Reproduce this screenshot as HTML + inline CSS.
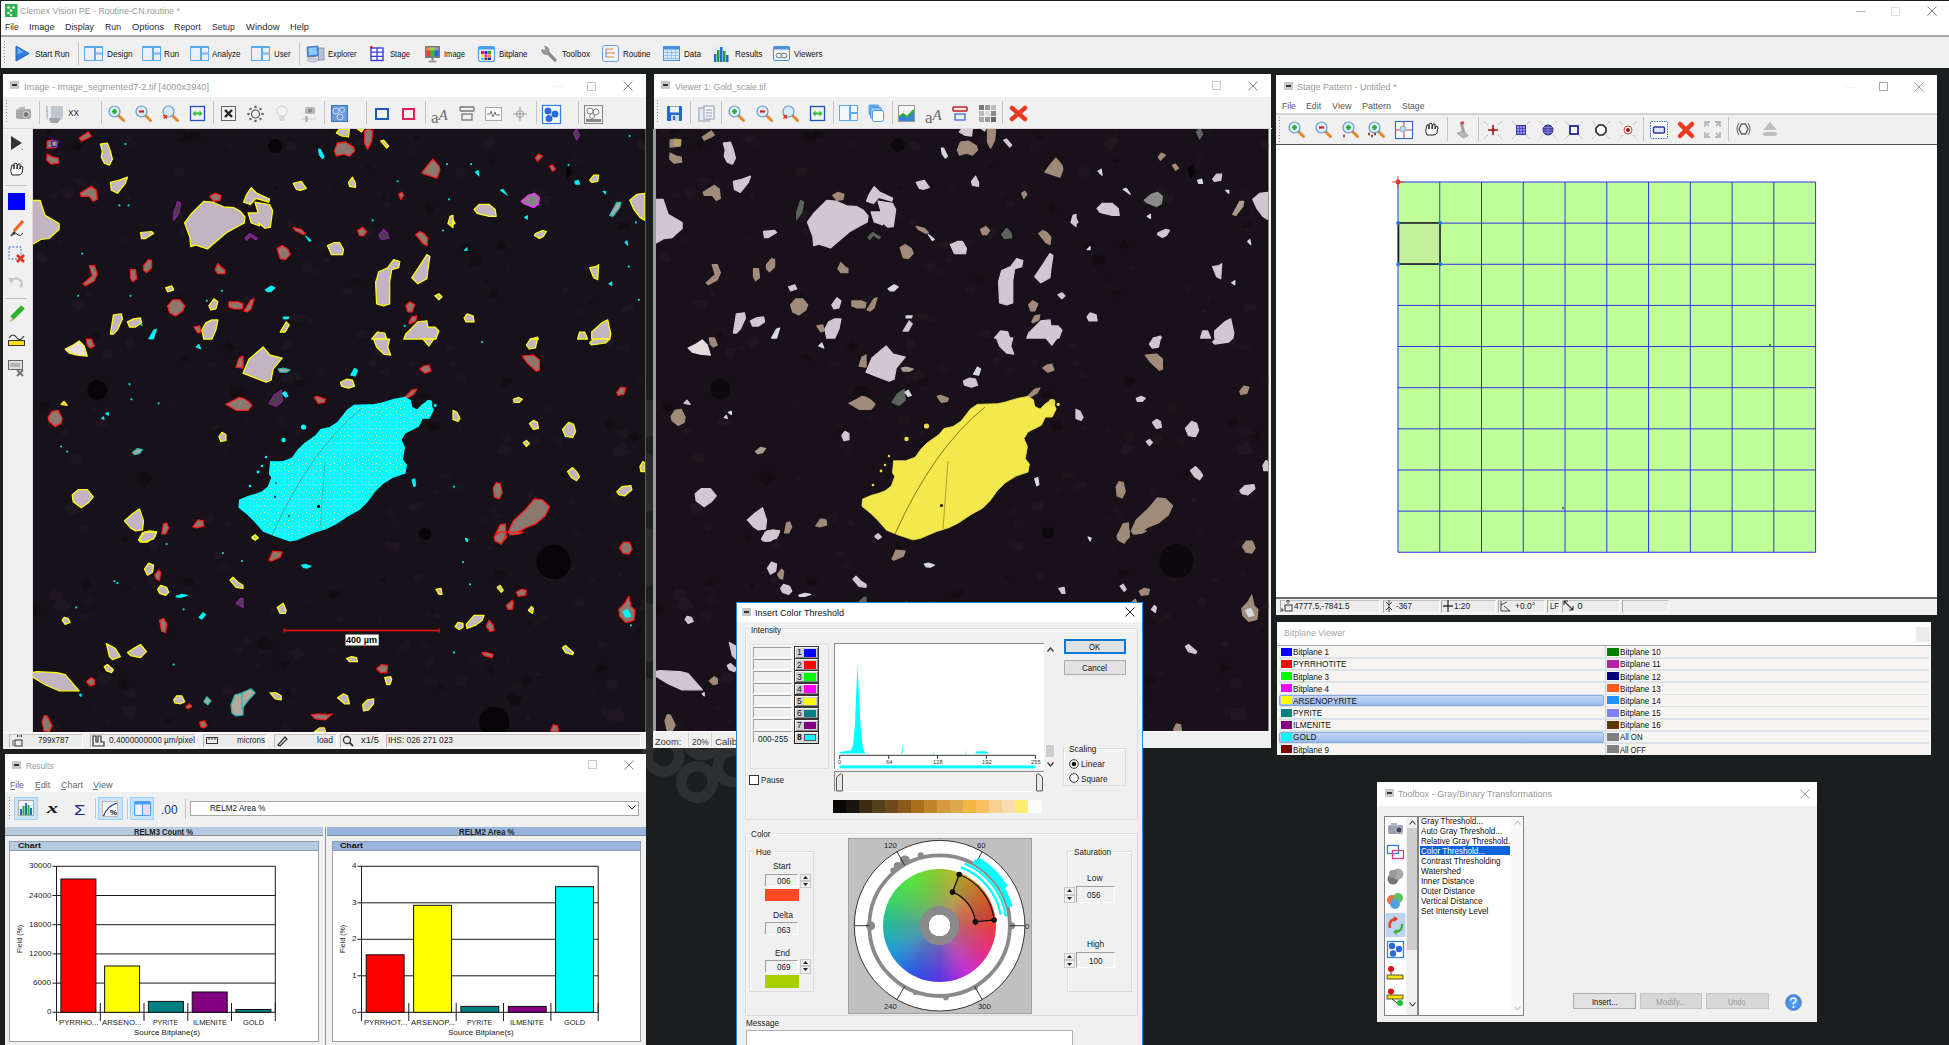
<!DOCTYPE html>
<html><head><meta charset="utf-8">
<style>
*{box-sizing:border-box}
body{margin:0;width:1949px;height:1045px;background:#1a1e1f;position:relative;overflow:hidden;font-family:"Liberation Sans",sans-serif;font-size:11px;color:#000}
.a{position:absolute}
.t{white-space:pre}
svg{overflow:visible}
</style></head><body>
<svg class="a" style="left:0;top:0" width="1949" height="1045"><rect x="646" y="400" width="7.5" height="350" fill="#2b2c2d"/><circle cx="651" cy="445" r="9" fill="#1c1f20"/><circle cx="651" cy="520" r="9" fill="#1c1f20"/><circle cx="651" cy="595" r="9" fill="#1c1f20"/><circle cx="651" cy="670" r="9" fill="#1c1f20"/><circle cx="663.4" cy="755.8" r="15.75" fill="none" stroke="#2e2f30" stroke-width="10.5"/><circle cx="697" cy="782" r="15.75" fill="none" stroke="#2e2f30" stroke-width="10.5"/><circle cx="703" cy="739.6" r="15.75" fill="none" stroke="#2e2f30" stroke-width="10.5"/><circle cx="733.3" cy="766.4" r="15.75" fill="none" stroke="#2e2f30" stroke-width="10.5"/></svg><div class="a" style="left:1px;top:1px;width:1948px;height:34.5px;background:#fff"></div><div class="a" style="left:1px;top:35px;width:1948px;height:1.5px;background:#a8a8a8"></div><div class="a" style="left:1px;top:36.5px;width:1948px;height:31.5px;background:#f0f0f0"></div><svg class="a" style="left:5px;top:4px;" width="12.5" height="13" viewBox="0 0 12.5 13"><rect width="12.5" height="13" fill="#2bb24c"/><g fill="#fff"><circle cx="3.5" cy="3.5" r="1.3"/><circle cx="8.5" cy="3.5" r="1.3"/><circle cx="6" cy="6.5" r="1.3"/><circle cx="3.5" cy="9" r="1.3"/><circle cx="6" cy="11" r="1.1"/></g></svg><div class="a t" style="left:20.00px;top:6.12px;font-size:9.5px;line-height:9.5px;color:#9a9a9a;transform:scaleX(0.930);transform-origin:0 0">Clemex Vision PE - Routine-CN.routine *</div><div class="a" style="left:1855.5px;top:11px;width:10px;height:1px;background:#b4b4b4"></div><div class="a" style="left:1890.5px;top:6.5px;width:9px;height:9px;border:1px solid #ddd"></div><svg class="a" style="left:1926.5px;top:6px;" width="10" height="10" viewBox="0 0 10 10"><path d="M0.5 0.5L9.5 9.5M9.5 0.5L0.5 9.5" stroke="#777" stroke-width="1"/></svg><div class="a t" style="left:5.00px;top:22.42px;font-size:9.5px;line-height:9.5px;color:#2a2a2a;transform:scaleX(0.895);transform-origin:0 0">File</div><div class="a t" style="left:29.00px;top:22.42px;font-size:9.5px;line-height:9.5px;color:#2a2a2a;transform:scaleX(0.969);transform-origin:0 0">Image</div><div class="a t" style="left:65.40px;top:22.42px;font-size:9.5px;line-height:9.5px;color:#2a2a2a;transform:scaleX(0.931);transform-origin:0 0">Display</div><div class="a t" style="left:105.00px;top:22.42px;font-size:9.5px;line-height:9.5px;color:#2a2a2a;transform:scaleX(0.918);transform-origin:0 0">Run</div><div class="a t" style="left:131.60px;top:22.42px;font-size:9.5px;line-height:9.5px;color:#2a2a2a;transform:scaleX(0.980);transform-origin:0 0">Options</div><div class="a t" style="left:174.40px;top:22.42px;font-size:9.5px;line-height:9.5px;color:#2a2a2a;transform:scaleX(0.933);transform-origin:0 0">Report</div><div class="a t" style="left:211.80px;top:22.42px;font-size:9.5px;line-height:9.5px;color:#2a2a2a;transform:scaleX(0.918);transform-origin:0 0">Setup</div><div class="a t" style="left:245.50px;top:22.42px;font-size:9.5px;line-height:9.5px;color:#2a2a2a;transform:scaleX(0.991);transform-origin:0 0">Window</div><div class="a t" style="left:290.00px;top:22.42px;font-size:9.5px;line-height:9.5px;color:#2a2a2a;transform:scaleX(0.972);transform-origin:0 0">Help</div><div class="a" style="left:4px;top:41px;width:1px;height:1px;background:#a09090"></div><div class="a" style="left:4px;top:44px;width:1px;height:1px;background:#a09090"></div><div class="a" style="left:4px;top:47px;width:1px;height:1px;background:#a09090"></div><div class="a" style="left:4px;top:50px;width:1px;height:1px;background:#a09090"></div><div class="a" style="left:4px;top:53px;width:1px;height:1px;background:#a09090"></div><div class="a" style="left:4px;top:56px;width:1px;height:1px;background:#a09090"></div><div class="a" style="left:4px;top:59px;width:1px;height:1px;background:#a09090"></div><div class="a" style="left:4px;top:62px;width:1px;height:1px;background:#a09090"></div><svg class="a" style="left:14.5px;top:45px;" width="15" height="17" viewBox="0 0 15 17"><path d="M1 1L14 8.5L1 16Z" fill="#2f7fe0" stroke="#1d5fbf" stroke-width="1"/><path d="M2.5 3L9 7L2.5 9Z" fill="#8fc0ff" opacity="0.7"/></svg><div class="a t" style="left:34.50px;top:49.22px;font-size:9.5px;line-height:9.5px;color:#111;transform:scaleX(0.859);transform-origin:0 0">Start Run</div><div class="a" style="left:78px;top:42px;width:1px;height:23px;background:#c4c4c4"></div><svg class="a" style="left:84px;top:46px;" width="19" height="15" viewBox="0 0 19 15"><rect x="0.5" y="0.5" width="10" height="14" fill="#eef" stroke="#5aaaf0"/><rect x="11.5" y="0.5" width="7" height="6.5" fill="#eef" stroke="#5aaaf0"/><rect x="11.5" y="8" width="7" height="6.5" fill="#eef" stroke="#5aaaf0"/><rect x="0.5" y="0.5" width="18" height="1.5" fill="#5aaaf0"/></svg><div class="a t" style="left:106.50px;top:49.22px;font-size:9.5px;line-height:9.5px;color:#111;transform:scaleX(0.862);transform-origin:0 0">Design</div><svg class="a" style="left:142px;top:46px;" width="19" height="15" viewBox="0 0 19 15"><rect x="0.5" y="0.5" width="10" height="14" fill="#eef" stroke="#5aaaf0"/><rect x="11.5" y="0.5" width="7" height="6.5" fill="#eef" stroke="#5aaaf0"/><rect x="11.5" y="8" width="7" height="6.5" fill="#eef" stroke="#5aaaf0"/><rect x="0.5" y="0.5" width="18" height="1.5" fill="#5aaaf0"/></svg><div class="a t" style="left:164.00px;top:49.22px;font-size:9.5px;line-height:9.5px;color:#111;transform:scaleX(0.860);transform-origin:0 0">Run</div><svg class="a" style="left:190px;top:46px;" width="19" height="15" viewBox="0 0 19 15"><rect x="0.5" y="0.5" width="10" height="14" fill="#eef" stroke="#5aaaf0"/><rect x="11.5" y="0.5" width="7" height="6.5" fill="#eef" stroke="#5aaaf0"/><rect x="11.5" y="8" width="7" height="6.5" fill="#eef" stroke="#5aaaf0"/><rect x="0.5" y="0.5" width="18" height="1.5" fill="#5aaaf0"/></svg><div class="a t" style="left:212.40px;top:49.22px;font-size:9.5px;line-height:9.5px;color:#111;transform:scaleX(0.843);transform-origin:0 0">Analyze</div><svg class="a" style="left:251px;top:46px;" width="19" height="15" viewBox="0 0 19 15"><rect x="0.5" y="0.5" width="10" height="14" fill="#eef" stroke="#5aaaf0"/><rect x="11.5" y="0.5" width="7" height="6.5" fill="#eef" stroke="#5aaaf0"/><rect x="11.5" y="8" width="7" height="6.5" fill="#eef" stroke="#5aaaf0"/><rect x="0.5" y="0.5" width="18" height="1.5" fill="#5aaaf0"/></svg><div class="a t" style="left:273.70px;top:49.22px;font-size:9.5px;line-height:9.5px;color:#111;transform:scaleX(0.822);transform-origin:0 0">User</div><div class="a" style="left:299px;top:42px;width:1px;height:23px;background:#c4c4c4"></div><svg class="a" style="left:305.5px;top:45px;" width="19" height="18" viewBox="0 0 19 18"><path d="M1 2L12 1L12.5 11L1.5 12Z" fill="#3a8ae8" stroke="#5a6a8a" stroke-width="0.8"/><path d="M2.5 3L10.5 2.3L11 9.5L3 10.3Z" fill="#8ccaff"/><rect x="12.5" y="3" width="5.5" height="12" fill="#b8c0d8" stroke="#7a8aa8" stroke-width="0.8"/><ellipse cx="6.5" cy="15" rx="5.5" ry="2" fill="#d0d4e0" stroke="#8a90a0" stroke-width="0.6"/></svg><div class="a t" style="left:328.00px;top:49.22px;font-size:9.5px;line-height:9.5px;color:#111;transform:scaleX(0.806);transform-origin:0 0">Explorer</div><svg class="a" style="left:369.5px;top:46px;" width="14" height="15" viewBox="0 0 14 15"><rect x="1" y="2" width="12" height="12.5" fill="#fff" stroke="#3a3ae0" stroke-width="1.4"/><path d="M1 6.2H13M1 10.3H13M7 2V14.5" stroke="#3a3ae0" stroke-width="1.3"/><circle cx="1.3" cy="1.3" r="1.3" fill="#d00"/></svg><div class="a t" style="left:390.00px;top:49.22px;font-size:9.5px;line-height:9.5px;color:#111;transform:scaleX(0.806);transform-origin:0 0">Stage</div><svg class="a" style="left:424.5px;top:45.5px;" width="15" height="17" viewBox="0 0 15 17"><rect x="0.5" y="0.5" width="14" height="11" fill="#888" stroke="#777"/><rect x="1.5" y="1.5" width="4" height="9" fill="#e84030"/><rect x="5.5" y="1.5" width="4" height="9" fill="#30c030"/><rect x="9.5" y="1.5" width="4" height="9" fill="#3060e0"/><rect x="1.5" y="1.5" width="12" height="3" fill="#ffe060" opacity="0.5"/><rect x="6.5" y="11.5" width="2" height="3" fill="#888"/><rect x="3.5" y="14.5" width="8" height="2" rx="1" fill="#999"/></svg><div class="a t" style="left:444.00px;top:49.22px;font-size:9.5px;line-height:9.5px;color:#111;transform:scaleX(0.795);transform-origin:0 0">Image</div><svg class="a" style="left:477.5px;top:45.5px;" width="17" height="16" viewBox="0 0 17 16"><rect x="0.5" y="0.5" width="16" height="15" rx="2" fill="#f4f8ff" stroke="#4aa0f0" stroke-width="1.2"/><rect x="0.5" y="0.5" width="16" height="3" fill="#4aa0f0"/><rect x="3" y="5" width="3" height="3" fill="#e22"/><rect x="6.5" y="5" width="3" height="3" fill="#22e"/><rect x="10" y="5" width="3" height="3" fill="#2a2"/><rect x="3" y="8.3" width="3" height="3" fill="#ee2"/><rect x="6.5" y="8.3" width="3" height="3" fill="#e2e"/><rect x="10" y="8.3" width="3" height="3" fill="#e82"/><rect x="3" y="11.6" width="3" height="2.5" fill="#2ee"/><rect x="6.5" y="11.6" width="3" height="2.5" fill="#822"/><rect x="10" y="11.6" width="3" height="2.5" fill="#22a"/></svg><div class="a t" style="left:499.20px;top:49.22px;font-size:9.5px;line-height:9.5px;color:#111;transform:scaleX(0.830);transform-origin:0 0">Bitplane</div><svg class="a" style="left:539.5px;top:45px;" width="18" height="18" viewBox="0 0 18 18"><path d="M6.5 6.5L15 15" stroke="#8a8a8a" stroke-width="3.2" stroke-linecap="round"/><path d="M2 4.5A4 4 0 0 0 8.5 8.5L9 5A4 4 0 0 0 4.5 1.5L6 4L4 5.5Z" fill="#9a9a9a" stroke="#777" stroke-width="0.7"/></svg><div class="a t" style="left:561.60px;top:49.22px;font-size:9.5px;line-height:9.5px;color:#111;transform:scaleX(0.855);transform-origin:0 0">Toolbox</div><svg class="a" style="left:601.5px;top:45px;" width="17" height="17" viewBox="0 0 17 17"><rect x="0.5" y="0.5" width="16" height="16" rx="2" fill="#eef4ff" stroke="#6aa0e0"/><path d="M4 4H11M6 8H13M6 12H12" stroke="#e08a20" stroke-width="1.2"/><path d="M4 4V12H6M4 8H6" stroke="#3a80d0" stroke-width="0.8" fill="none"/></svg><div class="a t" style="left:623.00px;top:49.22px;font-size:9.5px;line-height:9.5px;color:#111;transform:scaleX(0.840);transform-origin:0 0">Routine</div><svg class="a" style="left:662.5px;top:46px;" width="17" height="15" viewBox="0 0 17 15"><rect x="0.5" y="0.5" width="16" height="14" fill="#dbeaff" stroke="#4a90e0"/><rect x="0.5" y="0.5" width="16" height="3" fill="#4a90e0"/><path d="M0.5 6.5H16.5M0.5 9.5H16.5M0.5 12.5H16.5M4.5 3V15M8.5 3V15M12.5 3V15" stroke="#8ab8f0" stroke-width="0.8"/></svg><div class="a t" style="left:684.00px;top:49.22px;font-size:9.5px;line-height:9.5px;color:#111;transform:scaleX(0.847);transform-origin:0 0">Data</div><svg class="a" style="left:713px;top:45px;" width="16" height="17" viewBox="0 0 16 17"><rect x="0" y="0" width="16" height="17" fill="#e8eef8"/><rect x="1" y="9" width="2.5" height="8" fill="#2a6ad0"/><rect x="4" y="5" width="2.5" height="12" fill="#28a030"/><rect x="7" y="2" width="2.5" height="15" fill="#2a6ad0"/><rect x="10" y="6" width="2.5" height="11" fill="#28a030"/><rect x="13" y="10" width="2.5" height="7" fill="#2a6ad0"/></svg><div class="a t" style="left:734.50px;top:49.22px;font-size:9.5px;line-height:9.5px;color:#111;transform:scaleX(0.868);transform-origin:0 0">Results</div><svg class="a" style="left:773px;top:46px;" width="17" height="15" viewBox="0 0 17 15"><rect x="0.5" y="0.5" width="16" height="14" rx="1.5" fill="#eef4ff" stroke="#4a90e0"/><rect x="0.5" y="0.5" width="16" height="3" fill="#4a90e0"/><ellipse cx="6" cy="9.5" rx="3" ry="2.3" fill="none" stroke="#777"/><ellipse cx="11" cy="9.5" rx="3" ry="2.3" fill="none" stroke="#777"/></svg><div class="a t" style="left:794.30px;top:49.22px;font-size:9.5px;line-height:9.5px;color:#111;transform:scaleX(0.848);transform-origin:0 0">Viewers</div><div class="a" style="left:3px;top:74px;width:643px;height:675px;background:#f0f0f0"></div><div class="a" style="left:3px;top:74px;width:643px;height:23px;background:#fff"></div><div class="a" style="left:10px;top:81px;width:9px;height:8px;background:#c8c8c8"></div><div class="a" style="left:12px;top:84px;width:5px;height:2px;background:#333"></div><div class="a t" style="left:23.70px;top:81.72px;font-size:9.5px;line-height:9.5px;color:#9a9a9a;transform:scaleX(0.962);transform-origin:0 0">Image - Image_segmented7-2.tif [4000x3940]</div><div class="a" style="left:587px;top:81.5px;width:9px;height:9px;border:1px solid #c8c8c8"></div><svg class="a" style="left:623px;top:81px;" width="10" height="10" viewBox="0 0 10 10"><path d="M0.5 0.5L9.5 9.5M9.5 0.5L0.5 9.5" stroke="#8a8a8a" stroke-width="1"/></svg><div class="a" style="left:553px;top:86px;width:9px;height:1px;background:#eee"></div><div class="a" style="left:3px;top:97px;width:643px;height:31px;background:#f0f0f0"></div><div class="a" style="left:3px;top:127.5px;width:643px;height:1.5px;background:#d8d8d8"></div><div class="a" style="left:5.5px;top:100px;width:1px;height:1px;background:#a09090"></div><div class="a" style="left:5.5px;top:103px;width:1px;height:1px;background:#a09090"></div><div class="a" style="left:5.5px;top:106px;width:1px;height:1px;background:#a09090"></div><div class="a" style="left:5.5px;top:109px;width:1px;height:1px;background:#a09090"></div><div class="a" style="left:5.5px;top:112px;width:1px;height:1px;background:#a09090"></div><div class="a" style="left:5.5px;top:115px;width:1px;height:1px;background:#a09090"></div><div class="a" style="left:5.5px;top:118px;width:1px;height:1px;background:#a09090"></div><div class="a" style="left:5.5px;top:121px;width:1px;height:1px;background:#a09090"></div><svg class="a" style="left:14.7px;top:106px;" width="17" height="14" viewBox="0 0 17 14"><rect x="1" y="3" width="15" height="10" rx="2" fill="#a8a8a8"/><rect x="4" y="1" width="6" height="3" fill="#b8b8b8"/><circle cx="11" cy="8.5" r="3" fill="#777" stroke="#ddd"/></svg><div class="a" style="left:39px;top:101px;width:1px;height:23px;background:#c4c4c4"></div><svg class="a" style="left:45px;top:104.5px;" width="19" height="19" viewBox="0 0 19 19"><path d="M1 1H18V10Q18 17 9.5 17Q1 17 1 10Z" fill="#c0c6d0"/><path d="M3 1H6V15H3Z" fill="#e8ecf2"/><path d="M4 13H15L13 18H6Z" fill="#9aa0a8"/></svg><div class="a t" style="left:67.50px;top:109.26px;font-size:9px;line-height:9px;color:#222;transform:scaleX(0.915);transform-origin:0 0">XX</div><div class="a" style="left:100.8px;top:101px;width:1px;height:23px;background:#c4c4c4"></div><svg class="a" style="left:108px;top:105px;" width="17" height="17" viewBox="0 0 17 17"><path d="M9.5 9.5L15.5 15.5" stroke="#e08a30" stroke-width="3" stroke-linecap="round"/><circle cx="6.5" cy="6.5" r="5.5" fill="#d6ecfa" stroke="#6a98c0" stroke-width="1.2"/><path d="M6.5 4V9M4 6.5H9" stroke="#22aa22" stroke-width="2.2"/></svg><svg class="a" style="left:135px;top:105px;" width="17" height="17" viewBox="0 0 17 17"><path d="M9.5 9.5L15.5 15.5" stroke="#e08a30" stroke-width="3" stroke-linecap="round"/><circle cx="6.5" cy="6.5" r="5.5" fill="#d6ecfa" stroke="#6a98c0" stroke-width="1.2"/><path d="M4 6.5H9" stroke="#d02020" stroke-width="2.2"/></svg><svg class="a" style="left:161.5px;top:105px;" width="17" height="17" viewBox="0 0 17 17"><path d="M9.5 9.5L15.5 15.5" stroke="#e08a30" stroke-width="3" stroke-linecap="round"/><circle cx="6.5" cy="6.5" r="5.5" fill="#d6ecfa" stroke="#6a98c0" stroke-width="1.2"/><path d="M1.5 10L5 13.5M5 10L1.5 13.5" stroke="#e03020" stroke-width="1.5"/></svg><svg class="a" style="left:188.6px;top:105px;" width="17" height="17" viewBox="0 0 17 17"><rect x="1.5" y="1.5" width="14" height="14" fill="none" stroke="#2050c0" stroke-width="1.3"/><path d="M3.5 8.5L6.5 5.5V11.5ZM13.5 8.5L10.5 5.5V11.5Z" fill="#30c030"/><path d="M6 8.5H11" stroke="#30c030" stroke-width="2"/></svg><div class="a" style="left:212.5px;top:101px;width:1px;height:23px;background:#c4c4c4"></div><svg class="a" style="left:220px;top:105px;" width="17" height="17" viewBox="0 0 17 17"><rect x="1.5" y="1.5" width="14" height="14" fill="none" stroke="#666" stroke-width="1"/><path d="M5 5L12 12M12 5L5 12" stroke="#222" stroke-width="2.4"/></svg><svg class="a" style="left:246.5px;top:105px;" width="17" height="17" viewBox="0 0 17 17"><circle cx="8.5" cy="9" r="4" fill="#eee" stroke="#555" stroke-width="1.2"/><g fill="#666"><circle cx="8.5" cy="2" r="1.3"/><circle cx="8.5" cy="16" r="1.3"/><circle cx="1.5" cy="9" r="1.3"/><circle cx="15.5" cy="9" r="1.3"/><circle cx="3.5" cy="4" r="1.2"/><circle cx="13.5" cy="4" r="1.2"/><circle cx="3.5" cy="14" r="1.2"/><circle cx="13.5" cy="14" r="1.2"/></g></svg><svg class="a" style="left:275.6px;top:105px;" width="12" height="17" viewBox="0 0 12 17"><circle cx="6" cy="6" r="5" fill="#f4f4f4" stroke="#d0d0d0"/><rect x="3.5" y="11" width="5" height="5" fill="#d8d8d8"/></svg><svg class="a" style="left:300px;top:105px;" width="17" height="17" viewBox="0 0 17 17"><rect x="5" y="2" width="10" height="7" rx="1.5" fill="#b8b8b8"/><circle cx="10" cy="5.5" r="2" fill="#888"/><path d="M1 14H16" stroke="#ccc"/><rect x="5" y="11" width="3" height="6" fill="#bbb"/></svg><div class="a" style="left:324px;top:101px;width:1px;height:23px;background:#c4c4c4"></div><svg class="a" style="left:331px;top:105px;" width="17" height="17" viewBox="0 0 17 17"><rect x="0.5" y="0.5" width="16" height="16" fill="#6a98d8" stroke="#3a70c0"/><circle cx="5" cy="6" r="3" fill="none" stroke="#c8dcf8"/><circle cx="11" cy="5" r="2.5" fill="none" stroke="#c8dcf8"/><circle cx="9" cy="12" r="3" fill="none" stroke="#c8dcf8"/></svg><div class="a" style="left:366px;top:101px;width:1px;height:23px;background:#c4c4c4"></div><div class="a" style="left:375px;top:108px;width:13.7px;height:12px;border:2px solid #1e58b8"></div><div class="a" style="left:401.7px;top:108px;width:13.5px;height:12px;border:2px solid #e0205a"></div><div class="a" style="left:424.6px;top:101px;width:1px;height:23px;background:#c4c4c4"></div><svg class="a" style="left:430px;top:103px;" width="20" height="22" viewBox="0 0 20 22"><text x="1" y="20" font-family="Liberation Serif" font-size="17" fill="#6a6a6a">a</text><text x="8.5" y="17" font-family="Liberation Serif" font-style="italic" font-size="15" fill="#6a6a6a">A</text></svg><svg class="a" style="left:458.7px;top:106px;" width="16" height="15" viewBox="0 0 16 15"><path d="M1 1H15M1 5H15M1 1V5M15 1V5" stroke="#777" stroke-width="1.3" fill="none"/><rect x="3" y="8" width="10" height="6" fill="none" stroke="#777" stroke-width="1.3"/></svg><svg class="a" style="left:484.6px;top:107px;" width="17" height="14" viewBox="0 0 17 14"><rect x="0.5" y="0.5" width="16" height="13" fill="#fafafa" stroke="#aaa"/><path d="M2 7H5L6 4L8 10L10 5L11 8H15" stroke="#777" fill="none"/></svg><svg class="a" style="left:512px;top:106px;" width="16" height="16" viewBox="0 0 16 16"><circle cx="8" cy="8" r="3.5" fill="none" stroke="#999"/><path d="M8 1V15M1 8H15" stroke="#999"/></svg><div class="a" style="left:535.7px;top:101px;width:1px;height:23px;background:#c4c4c4"></div><svg class="a" style="left:542px;top:104.5px;" width="19" height="19" viewBox="0 0 19 19"><rect x="0.5" y="0.5" width="18" height="18" fill="#fff" stroke="#3a80e0" stroke-width="1.3"/><circle cx="6" cy="6" r="3.5" fill="#2a6ad8"/><circle cx="13" cy="9" r="3.5" fill="#2a6ad8"/><circle cx="7" cy="13.5" r="3.5" fill="#2a6ad8"/></svg><div class="a" style="left:578px;top:101px;width:1px;height:23px;background:#c4c4c4"></div><svg class="a" style="left:584px;top:104.5px;" width="19" height="19" viewBox="0 0 19 19"><rect x="0.5" y="0.5" width="18" height="18" fill="#f4f4f4" stroke="#888"/><circle cx="6" cy="6" r="3" fill="none" stroke="#888"/><circle cx="12" cy="7" r="3" fill="none" stroke="#888"/><circle cx="8" cy="11" r="2.5" fill="none" stroke="#888"/><rect x="2" y="14" width="15" height="3" fill="#888"/></svg><div class="a" style="left:3px;top:129px;width:30px;height:603px;background:#f0f0f0"></div><div class="a" style="left:31.5px;top:129px;width:1.5px;height:603px;background:#dcdcdc"></div><svg class="a" style="left:10px;top:135px;" width="13" height="16" viewBox="0 0 13 16"><path d="M1 1L12 8L1 15Z" fill="#333"/><path d="M12 14L13 15" stroke="#777"/></svg><svg class="a" style="left:9px;top:162px;" width="15" height="14" viewBox="0 0 15 14"><path d="M3 13Q1 9 2 7L3 3L5 3L5 7L5 2L7 1L8 2L8 7L9 2L11 2L11 7L12 4L14 5L13 11Q12 13 9 13Z" fill="#fff" stroke="#222" stroke-width="1"/></svg><div class="a" style="left:5px;top:185px;width:22px;height:1px;background:#c0c0c0"></div><div class="a" style="left:7.5px;top:192.5px;width:17.5px;height:17.5px;background:#0000ff"></div><svg class="a" style="left:8px;top:220px;" width="17" height="18" viewBox="0 0 17 18"><path d="M15 1L6 11" stroke="#f06020" stroke-width="3"/><path d="M6 11L2 16L8 13Z" fill="#333"/><path d="M3 16Q8 12 10 15Q12 17 15 13" stroke="#333" fill="none"/></svg><svg class="a" style="left:8px;top:246px;" width="17" height="17" viewBox="0 0 17 17"><rect x="1" y="1" width="12" height="12" fill="none" stroke="#3a6ad0" stroke-dasharray="2 1.5"/><path d="M9 9L16 16M16 9L9 16" stroke="#e83020" stroke-width="2.8"/></svg><svg class="a" style="left:8px;top:275px;" width="16" height="13" viewBox="0 0 16 13"><path d="M3 6Q8 1 13 6Q15 10 12 12" fill="none" stroke="#c8c8c8" stroke-width="2.5"/><path d="M0 3L6 3L3 9Z" fill="#c8c8c8"/></svg><div class="a" style="left:5px;top:297.5px;width:22px;height:1px;background:#c0c0c0"></div><svg class="a" style="left:8px;top:305px;" width="17" height="18" viewBox="0 0 17 18"><path d="M15 2L4 13" stroke="#30b030" stroke-width="5"/><path d="M4 13L1 17L6 15Z" fill="#e0a060"/></svg><svg class="a" style="left:8px;top:332px;" width="17" height="14" viewBox="0 0 17 14"><path d="M1 6Q5 0 9 6Q12 10 16 4" fill="none" stroke="#333" stroke-width="1.2"/><rect x="0.5" y="8.5" width="16" height="5" fill="#ffe000" stroke="#333"/></svg><svg class="a" style="left:8px;top:360px;" width="17" height="17" viewBox="0 0 17 17"><rect x="0.5" y="0.5" width="14" height="9" fill="#ddd" stroke="#666"/><path d="M2 4H12M2 6H12" stroke="#888"/><path d="M9 10L15 16M15 10L9 16" stroke="#777" stroke-width="2"/></svg><svg class="a" style="left:0;top:0" width="1949" height="1045"><defs><clipPath id="c1"><rect x="33" y="129" width="612" height="603"/></clipPath><clipPath id="c2"><rect x="656" y="129" width="612.5" height="602"/></clipPath><pattern id="spk" width="7" height="7" patternUnits="userSpaceOnUse"><rect width="7" height="7" fill="#00fcfc"/><rect x="1" y="2" width="1" height="1" fill="#d8e89a"/><rect x="4" y="5" width="1" height="1" fill="#c8d890"/><rect x="5" y="1" width="1" height="1" fill="#e0f0a0"/></pattern></defs><rect x="33" y="129" width="612" height="603" fill="#171119"/><g clip-path="url(#c1)"><path d="M232.0 214.4 L235.0 223.0 L230.5 225.0 L224.5 218.7Z" fill="#0c070b" opacity="0.40"/><path d="M384.9 699.0 L381.1 703.5 L376.5 704.3 L375.1 702.6 L372.4 697.0 L378.6 694.8Z" fill="#2a2029" opacity="0.29"/><path d="M365.1 166.9 L368.0 164.1 L370.4 166.6 L369.1 169.3Z" fill="#0c070b" opacity="0.40"/><path d="M214.8 429.8 L211.5 428.2 L213.9 424.7 L219.2 424.0 L220.2 430.2Z" fill="#2a2029" opacity="0.28"/><path d="M463.7 487.8 L457.3 490.8 L453.1 487.5 L455.5 482.4 L463.1 483.1Z" fill="#2a2029" opacity="0.29"/><path d="M612.7 345.5 L609.5 348.0 L604.1 343.2 L604.9 339.0 L615.1 340.0Z" fill="#2a2029" opacity="0.27"/><path d="M292.4 348.8 L281.7 350.2 L283.5 340.6 L291.2 340.0Z" fill="#2a2029" opacity="0.34"/><path d="M614.1 541.3 L621.3 541.0 L622.2 545.7 L619.6 548.7 L614.1 549.3 L609.1 547.3Z" fill="#2a2029" opacity="0.23"/><path d="M404.2 192.4 L398.0 195.5 L396.7 193.3 L395.8 188.6 L399.2 184.8 L406.6 190.7Z" fill="#2a2029" opacity="0.22"/><path d="M99.8 338.1 L94.0 337.8 L92.8 335.6 L92.8 331.9 L98.8 333.0 L99.1 335.0Z" fill="#0c070b" opacity="0.40"/><path d="M500.2 444.3 L509.5 446.6 L512.4 450.3 L504.5 454.9 L497.5 452.9Z" fill="#2a2029" opacity="0.40"/><path d="M313.6 245.7 L320.4 241.3 L324.0 241.9 L327.1 246.0 L321.4 252.2Z" fill="#2a2029" opacity="0.32"/><path d="M435.2 612.8 L432.7 614.0 L429.7 612.0 L429.3 610.0 L433.7 609.2 L434.7 611.0Z" fill="#0c070b" opacity="0.40"/><path d="M641.3 139.5 L647.1 147.9 L643.3 150.4 L638.1 148.2 L637.3 140.9Z" fill="#2a2029" opacity="0.43"/><path d="M306.3 654.3 L295.9 659.8 L289.1 653.1 L296.9 647.5Z" fill="#2a2029" opacity="0.37"/><path d="M538.6 443.9 L526.6 446.7 L522.6 441.6 L526.7 438.2 L534.0 436.3 L539.2 436.8Z" fill="#2a2029" opacity="0.32"/><path d="M507.2 663.5 L505.2 661.1 L509.4 659.8 L510.8 662.1Z" fill="#2a2029" opacity="0.37"/><path d="M309.7 444.9 L314.8 448.3 L309.6 455.9 L306.5 452.5Z" fill="#2a2029" opacity="0.22"/><path d="M184.9 168.1 L182.8 176.7 L171.9 175.5 L173.5 168.6Z" fill="#2a2029" opacity="0.32"/><path d="M641.9 630.7 L639.9 632.7 L636.7 632.6 L635.6 629.4 L639.4 628.3Z" fill="#0c070b" opacity="0.40"/><path d="M627.3 194.3 L626.2 203.9 L615.0 198.9 L618.4 188.7Z" fill="#2a2029" opacity="0.26"/><path d="M122.2 688.8 L117.0 685.0 L121.6 680.8 L125.2 679.2 L129.4 683.4 L127.5 685.9Z" fill="#0c070b" opacity="0.40"/><path d="M646.2 385.0 L641.7 386.1 L635.9 383.9 L635.7 377.3 L645.0 375.8 L648.0 379.7Z" fill="#2a2029" opacity="0.20"/><path d="M192.2 137.6 L191.4 143.1 L182.4 143.8 L177.3 139.0 L184.5 133.4 L187.2 133.6Z" fill="#0c070b" opacity="0.40"/><path d="M574.9 568.8 L574.0 571.5 L571.2 569.8 L570.4 567.1 L573.6 565.2Z" fill="#2a2029" opacity="0.37"/><path d="M58.4 244.6 L57.3 240.4 L62.2 238.2 L63.4 240.7Z" fill="#2a2029" opacity="0.32"/><path d="M343.6 252.7 L337.6 253.6 L335.1 248.2 L342.4 244.5Z" fill="#2a2029" opacity="0.24"/><path d="M578.4 597.6 L583.8 600.3 L583.2 606.7 L576.8 606.1 L573.4 600.3Z" fill="#2a2029" opacity="0.39"/><path d="M379.1 617.6 L381.2 617.7 L382.0 618.1 L382.5 619.7 L380.3 621.1 L378.6 620.0Z" fill="#2a2029" opacity="0.32"/><path d="M39.2 605.1 L41.0 613.2 L33.9 617.1 L29.4 615.2 L27.1 608.8 L33.7 602.9Z" fill="#0c070b" opacity="0.40"/><path d="M588.5 301.4 L590.7 299.9 L592.8 301.6 L591.8 303.0 L589.7 304.5 L587.3 302.3Z" fill="#0c070b" opacity="0.40"/><path d="M353.8 409.2 L351.1 413.1 L345.3 409.8 L348.8 403.5Z" fill="#2a2029" opacity="0.30"/><path d="M596.1 692.4 L592.1 692.3 L591.8 687.9 L595.9 689.2Z" fill="#2a2029" opacity="0.32"/><path d="M43.4 132.9 L44.7 129.4 L49.2 127.3 L53.4 130.8 L47.9 134.7Z" fill="#0c070b" opacity="0.40"/><path d="M488.3 281.8 L486.7 283.4 L484.8 283.0 L484.4 280.3 L487.2 280.3Z" fill="#0c070b" opacity="0.40"/><path d="M350.3 241.6 L349.7 247.2 L344.3 247.7 L340.8 245.4 L343.3 239.5Z" fill="#2a2029" opacity="0.27"/><path d="M61.0 689.2 L60.9 685.7 L63.8 685.9 L66.4 688.1 L64.7 690.2Z" fill="#0c070b" opacity="0.40"/><path d="M345.0 617.6 L343.8 619.9 L339.2 622.8 L334.6 619.7 L336.5 614.1Z" fill="#2a2029" opacity="0.39"/><path d="M283.8 383.0 L280.4 379.1 L283.6 374.1 L291.6 375.4 L292.9 379.2Z" fill="#2a2029" opacity="0.36"/><path d="M304.0 322.1 L288.5 321.2 L293.4 314.0 L306.3 313.8Z" fill="#2a2029" opacity="0.32"/><path d="M303.1 600.1 L309.0 598.1 L311.2 602.2 L307.3 603.3Z" fill="#2a2029" opacity="0.26"/><path d="M593.2 515.8 L598.6 516.9 L600.5 520.9 L594.1 520.7Z" fill="#2a2029" opacity="0.20"/><path d="M360.5 726.8 L363.2 727.3 L365.7 732.1 L362.5 732.0 L357.6 731.1Z" fill="#2a2029" opacity="0.26"/><path d="M440.8 684.2 L443.7 686.0 L443.7 690.1 L438.5 688.8Z" fill="#0c070b" opacity="0.40"/><path d="M501.0 240.4 L505.8 245.1 L505.3 248.8 L496.6 249.7 L496.7 245.6Z" fill="#0c070b" opacity="0.40"/><path d="M630.5 216.7 L627.5 215.4 L627.8 213.4 L631.4 213.2Z" fill="#2a2029" opacity="0.32"/><path d="M219.4 569.2 L217.5 563.2 L230.2 562.2 L230.3 569.1 L222.7 571.9Z" fill="#2a2029" opacity="0.22"/><path d="M468.0 252.4 L461.8 250.9 L459.9 242.9 L464.2 243.8 L471.6 244.7Z" fill="#0c070b" opacity="0.40"/><path d="M487.9 672.4 L485.7 669.2 L491.3 667.8 L495.0 669.9 L493.1 675.0Z" fill="#0c070b" opacity="0.40"/><path d="M544.0 191.9 L542.9 198.1 L533.8 196.1 L531.6 190.1 L540.8 187.2Z" fill="#2a2029" opacity="0.28"/><path d="M222.7 347.3 L228.6 340.6 L236.3 347.6 L230.0 352.8Z" fill="#0c070b" opacity="0.40"/><path d="M73.7 505.2 L75.4 503.3 L80.7 503.9 L80.3 508.3 L76.0 507.6Z" fill="#2a2029" opacity="0.27"/><path d="M375.1 356.7 L375.1 347.7 L384.1 351.5 L383.2 357.9Z" fill="#2a2029" opacity="0.36"/><path d="M91.5 408.5 L94.8 407.4 L96.3 408.3 L95.8 411.2Z" fill="#2a2029" opacity="0.43"/><path d="M261.8 648.6 L266.8 651.0 L262.9 653.7 L258.6 653.6 L258.4 649.0Z" fill="#2a2029" opacity="0.43"/><path d="M533.8 625.5 L527.1 624.7 L528.0 622.2 L532.3 618.7 L535.3 622.8Z" fill="#0c070b" opacity="0.40"/><path d="M455.5 379.1 L456.6 373.4 L458.8 372.2 L462.9 377.4 L459.7 379.1Z" fill="#2a2029" opacity="0.31"/><path d="M130.4 196.2 L131.8 197.3 L129.2 200.4 L127.3 199.6 L126.0 197.0 L127.6 195.7Z" fill="#2a2029" opacity="0.43"/><path d="M96.6 428.3 L94.2 421.5 L102.9 418.6 L108.4 424.7Z" fill="#2a2029" opacity="0.42"/><path d="M428.7 642.9 L430.8 644.8 L427.4 649.8 L423.3 649.6 L417.0 643.9 L420.0 641.8Z" fill="#2a2029" opacity="0.21"/><path d="M551.1 196.3 L551.2 199.7 L548.8 204.0 L543.1 203.2 L538.0 202.0 L543.3 195.6Z" fill="#2a2029" opacity="0.40"/><path d="M547.6 619.7 L541.5 620.6 L540.1 615.9 L547.6 613.7Z" fill="#2a2029" opacity="0.33"/><path d="M71.3 432.1 L65.1 435.6 L60.2 433.5 L66.2 428.2Z" fill="#2a2029" opacity="0.37"/><path d="M472.0 254.6 L481.8 257.6 L481.9 264.1 L472.0 267.1 L468.1 266.3 L469.3 260.6Z" fill="#0c070b" opacity="0.40"/><path d="M133.1 697.6 L126.5 697.9 L123.6 691.5 L132.8 688.0 L136.7 694.1Z" fill="#2a2029" opacity="0.36"/><path d="M269.9 608.6 L274.7 607.5 L277.1 610.1 L275.0 612.6 L270.1 612.6Z" fill="#2a2029" opacity="0.37"/><path d="M223.5 131.8 L222.6 129.9 L225.0 128.0 L226.1 129.9Z" fill="#2a2029" opacity="0.28"/><path d="M348.0 449.7 L354.0 448.1 L357.1 452.0 L355.4 453.4 L347.9 453.9Z" fill="#2a2029" opacity="0.30"/><path d="M200.4 132.8 L200.7 138.3 L195.5 140.0 L192.5 139.2 L189.5 136.0 L191.2 129.8Z" fill="#0c070b" opacity="0.40"/><path d="M408.8 527.9 L404.2 526.8 L405.0 524.2 L408.3 523.1 L412.0 526.1Z" fill="#2a2029" opacity="0.20"/><path d="M544.4 574.6 L551.3 573.8 L556.1 576.4 L551.6 583.8 L548.8 581.3 L543.8 578.2Z" fill="#2a2029" opacity="0.43"/><path d="M633.5 310.0 L619.9 312.7 L621.5 305.7 L633.0 303.8Z" fill="#2a2029" opacity="0.35"/><path d="M269.9 637.2 L270.9 643.0 L273.5 648.5 L261.5 650.7 L257.7 641.0 L261.7 636.2Z" fill="#0c070b" opacity="0.40"/><path d="M51.8 199.8 L46.1 195.2 L57.9 192.0 L56.4 199.1Z" fill="#2a2029" opacity="0.29"/><path d="M541.4 619.2 L538.5 626.8 L530.3 627.0 L529.3 615.4Z" fill="#2a2029" opacity="0.22"/><path d="M495.9 512.8 L490.5 514.0 L488.4 509.4 L495.5 505.7Z" fill="#2a2029" opacity="0.28"/><path d="M624.1 428.4 L628.0 430.4 L628.0 434.8 L622.8 440.1 L614.9 434.7 L615.7 430.8Z" fill="#2a2029" opacity="0.27"/><path d="M488.7 161.0 L492.1 158.2 L496.1 162.2 L491.2 164.5Z" fill="#0c070b" opacity="0.40"/><path d="M461.5 426.3 L463.1 428.8 L463.0 430.3 L459.5 432.2 L458.3 430.0 L459.1 428.0Z" fill="#2a2029" opacity="0.31"/><path d="M367.7 239.4 L357.0 235.6 L359.6 228.9 L364.9 226.9 L375.7 229.5 L372.2 235.4Z" fill="#2a2029" opacity="0.39"/><path d="M388.9 208.5 L381.5 207.2 L383.4 204.5 L386.1 201.4 L390.9 203.2 L391.5 206.0Z" fill="#2a2029" opacity="0.38"/><path d="M97.3 710.6 L94.2 711.1 L91.6 709.3 L94.7 706.4 L97.2 708.8Z" fill="#2a2029" opacity="0.31"/><path d="M171.4 723.1 L164.4 722.5 L166.1 717.8 L172.7 719.0Z" fill="#0c070b" opacity="0.40"/><path d="M469.4 658.3 L472.9 654.2 L481.4 655.2 L479.1 663.4 L475.7 666.5 L468.6 665.0Z" fill="#2a2029" opacity="0.20"/><path d="M561.6 438.9 L561.8 447.8 L555.3 445.2 L552.4 437.6Z" fill="#2a2029" opacity="0.25"/><path d="M245.0 635.3 L251.5 640.1 L248.0 645.2 L240.7 641.9Z" fill="#2a2029" opacity="0.39"/><path d="M108.2 725.3 L102.3 724.2 L108.5 718.5 L111.3 722.9Z" fill="#2a2029" opacity="0.30"/><path d="M606.5 719.3 L608.2 709.5 L620.9 707.8 L625.8 719.5 L618.7 722.6Z" fill="#2a2029" opacity="0.40"/><path d="M289.2 734.3 L282.7 733.9 L280.2 731.4 L281.6 726.6 L284.8 723.0 L291.5 727.6Z" fill="#2a2029" opacity="0.32"/><path d="M299.5 516.8 L293.1 518.6 L286.7 512.0 L295.5 508.5 L302.4 511.9Z" fill="#0c070b" opacity="0.40"/><path d="M82.9 309.5 L75.9 309.5 L69.6 304.6 L70.6 301.9 L80.4 300.3 L85.1 305.6Z" fill="#2a2029" opacity="0.41"/><path d="M156.6 544.1 L159.1 545.6 L155.1 551.2 L150.5 550.6 L147.6 544.9 L150.9 544.0Z" fill="#2a2029" opacity="0.38"/><path d="M129.5 317.5 L136.7 316.6 L138.7 322.8 L130.2 326.1 L123.4 323.2Z" fill="#2a2029" opacity="0.28"/><path d="M639.3 438.7 L633.2 442.4 L628.4 436.4 L635.3 431.8Z" fill="#0c070b" opacity="0.40"/><path d="M296.5 387.6 L294.3 383.9 L296.6 377.8 L305.4 380.7 L304.1 385.5Z" fill="#0c070b" opacity="0.40"/><path d="M386.0 515.0 L388.1 507.1 L395.0 508.4 L394.7 517.3Z" fill="#2a2029" opacity="0.22"/><path d="M336.6 453.5 L342.6 455.0 L342.3 459.8 L336.5 458.3Z" fill="#0c070b" opacity="0.40"/><path d="M61.6 598.0 L61.0 602.4 L50.4 599.4 L50.1 597.3 L52.3 589.5 L62.4 592.1Z" fill="#2a2029" opacity="0.41"/><path d="M501.7 386.3 L501.6 376.9 L512.3 379.9 L511.5 383.8 L506.0 387.4Z" fill="#0c070b" opacity="0.40"/><path d="M48.0 132.8 L45.1 136.9 L35.6 133.4 L41.5 125.5Z" fill="#2a2029" opacity="0.29"/><path d="M489.3 550.4 L486.6 546.7 L491.6 546.5 L492.6 547.8Z" fill="#2a2029" opacity="0.37"/><path d="M412.4 366.9 L410.7 366.7 L407.2 363.4 L410.1 361.1 L414.1 361.2 L416.1 364.0Z" fill="#2a2029" opacity="0.30"/><path d="M511.4 704.9 L505.2 697.9 L510.2 692.0 L517.5 695.7 L523.0 696.8 L518.5 705.9Z" fill="#0c070b" opacity="0.40"/><path d="M271.0 351.9 L277.0 356.8 L266.3 362.4 L266.0 353.3Z" fill="#2a2029" opacity="0.40"/><path d="M563.4 470.9 L565.0 470.6 L566.8 474.8 L564.8 478.0 L561.9 477.1 L559.9 473.1Z" fill="#0c070b" opacity="0.40"/><path d="M182.3 580.4 L186.1 576.7 L194.9 580.1 L191.6 586.8 L185.6 586.0Z" fill="#0c070b" opacity="0.40"/><path d="M85.4 613.8 L88.3 612.8 L93.2 614.2 L94.0 615.3 L89.1 617.5 L86.2 616.6Z" fill="#2a2029" opacity="0.21"/><path d="M43.7 723.6 L53.9 721.5 L62.1 725.3 L55.4 730.9 L47.0 728.7Z" fill="#2a2029" opacity="0.29"/><path d="M43.8 149.5 L45.3 148.3 L50.5 147.2 L53.8 150.3 L53.3 153.1 L46.8 153.4Z" fill="#2a2029" opacity="0.31"/><path d="M132.3 720.5 L124.6 716.9 L122.0 705.4 L137.7 706.8Z" fill="#2a2029" opacity="0.39"/><path d="M332.5 189.2 L330.4 193.9 L325.9 191.9 L327.1 187.7Z" fill="#2a2029" opacity="0.24"/><path d="M170.8 214.5 L175.1 209.4 L185.2 212.3 L181.3 221.4Z" fill="#2a2029" opacity="0.44"/><path d="M597.0 362.2 L598.9 359.2 L601.3 360.3 L601.3 362.9Z" fill="#2a2029" opacity="0.24"/><path d="M570.1 290.4 L564.2 292.7 L561.1 290.2 L566.4 286.6Z" fill="#2a2029" opacity="0.36"/><path d="M519.6 692.1 L513.1 690.7 L510.1 687.3 L513.4 682.5 L520.3 682.8Z" fill="#2a2029" opacity="0.24"/><path d="M430.7 398.2 L422.9 398.9 L417.5 396.8 L419.8 392.7 L424.9 392.0 L431.0 395.8Z" fill="#0c070b" opacity="0.40"/><path d="M80.6 177.9 L88.4 181.1 L85.5 184.8 L79.4 187.2 L74.3 179.3Z" fill="#2a2029" opacity="0.33"/><path d="M252.5 301.8 L246.1 304.7 L239.2 300.3 L245.8 295.3 L251.7 296.1Z" fill="#2a2029" opacity="0.29"/><path d="M603.6 710.4 L605.9 711.6 L606.0 714.6 L603.3 715.9 L601.0 712.2Z" fill="#2a2029" opacity="0.33"/><path d="M355.0 138.6 L370.0 135.0 L372.4 144.7 L355.9 145.0Z" fill="#2a2029" opacity="0.36"/><path d="M319.8 271.0 L322.1 273.3 L316.4 276.3 L312.6 274.6 L312.9 269.6Z" fill="#2a2029" opacity="0.24"/><path d="M386.4 578.0 L384.0 581.9 L379.7 580.8 L383.1 576.8Z" fill="#0c070b" opacity="0.40"/><path d="M242.0 387.8 L249.6 392.6 L237.1 397.5 L230.1 396.0 L230.7 387.5Z" fill="#0c070b" opacity="0.40"/><path d="M295.4 434.8 L297.2 432.2 L301.1 433.1 L300.3 434.9Z" fill="#2a2029" opacity="0.43"/><path d="M408.0 504.5 L421.1 501.7 L420.1 510.8 L410.1 510.8Z" fill="#2a2029" opacity="0.44"/><path d="M352.3 288.8 L351.6 295.3 L346.7 294.5 L341.4 292.1 L342.7 289.0 L348.5 287.4Z" fill="#2a2029" opacity="0.34"/><path d="M254.1 667.7 L254.6 664.2 L260.2 663.9 L261.4 666.9 L256.1 669.4Z" fill="#2a2029" opacity="0.32"/><path d="M211.5 727.0 L204.9 725.9 L204.8 721.9 L210.2 723.5Z" fill="#0c070b" opacity="0.40"/><path d="M618.2 572.9 L622.2 572.9 L621.9 575.6 L618.5 577.5 L617.4 574.0Z" fill="#2a2029" opacity="0.36"/><path d="M464.0 375.7 L466.6 378.4 L465.5 380.4 L460.8 379.4 L460.8 377.4Z" fill="#2a2029" opacity="0.38"/><path d="M206.3 361.7 L216.9 362.2 L218.4 365.3 L211.0 369.1 L207.8 366.2Z" fill="#2a2029" opacity="0.28"/><path d="M627.7 499.4 L624.5 497.5 L623.0 493.7 L628.9 492.8 L631.2 495.9Z" fill="#2a2029" opacity="0.33"/><path d="M450.8 361.7 L453.3 360.9 L457.0 363.8 L454.4 368.4 L451.3 366.7 L448.0 363.9Z" fill="#2a2029" opacity="0.42"/><path d="M398.3 552.2 L385.3 547.4 L385.8 540.9 L400.8 543.6Z" fill="#2a2029" opacity="0.42"/><path d="M290.4 226.5 L288.8 226.5 L286.2 223.5 L289.8 219.5 L292.9 222.0 L295.3 222.8Z" fill="#2a2029" opacity="0.43"/><path d="M277.1 190.2 L274.1 189.4 L275.4 186.0 L278.4 187.9Z" fill="#0c070b" opacity="0.40"/><path d="M130.9 588.7 L127.7 589.0 L126.5 585.3 L130.8 584.9Z" fill="#0c070b" opacity="0.40"/><path d="M180.3 296.8 L178.9 297.0 L177.3 295.8 L177.3 293.4 L179.9 293.4 L180.8 294.6Z" fill="#0c070b" opacity="0.40"/><path d="M600.3 648.6 L597.0 644.3 L600.7 641.5 L605.9 643.2 L607.5 646.5Z" fill="#2a2029" opacity="0.40"/><path d="M186.0 234.8 L182.2 236.9 L178.0 232.5 L183.0 228.8Z" fill="#2a2029" opacity="0.43"/><path d="M374.6 366.9 L368.3 364.2 L369.9 359.9 L374.3 357.6 L377.1 362.3Z" fill="#2a2029" opacity="0.40"/><path d="M126.5 338.0 L133.1 337.7 L137.5 344.7 L128.4 349.2 L124.1 343.8Z" fill="#2a2029" opacity="0.33"/><path d="M277.6 434.5 L283.9 435.9 L283.0 438.6 L278.8 437.8Z" fill="#2a2029" opacity="0.37"/><path d="M511.1 271.0 L506.3 270.4 L505.9 267.5 L509.1 265.3Z" fill="#2a2029" opacity="0.29"/><path d="M551.9 405.0 L556.9 407.9 L551.0 413.6 L545.5 413.7 L544.6 407.7 L549.3 404.4Z" fill="#2a2029" opacity="0.25"/><path d="M99.6 674.0 L107.8 673.5 L111.7 678.0 L106.7 685.1 L97.4 682.9 L96.4 680.2Z" fill="#2a2029" opacity="0.43"/><path d="M448.1 471.6 L453.6 477.3 L439.7 479.8 L437.1 474.3Z" fill="#2a2029" opacity="0.25"/><path d="M593.7 578.7 L594.7 579.3 L596.1 582.0 L592.9 583.0 L590.0 582.3 L590.4 579.3Z" fill="#2a2029" opacity="0.37"/><path d="M149.2 537.5 L160.6 528.4 L164.9 533.3 L158.0 540.1Z" fill="#0c070b" opacity="0.40"/><path d="M624.3 232.8 L617.7 230.9 L620.9 227.7 L627.0 229.3Z" fill="#2a2029" opacity="0.29"/><path d="M216.1 664.4 L212.9 664.5 L214.2 661.3 L217.5 659.5 L218.3 661.2 L218.0 663.5Z" fill="#2a2029" opacity="0.21"/><path d="M579.1 313.5 L579.6 310.5 L582.0 310.6 L585.2 312.0 L580.8 314.0Z" fill="#2a2029" opacity="0.45"/><path d="M373.1 194.0 L376.0 191.8 L381.8 190.9 L382.6 198.0 L376.5 197.6Z" fill="#2a2029" opacity="0.21"/><path d="M270.2 214.6 L271.5 213.2 L277.5 213.0 L280.1 216.8 L276.7 219.3 L272.6 221.0Z" fill="#2a2029" opacity="0.26"/><path d="M64.8 197.8 L60.1 191.1 L70.8 187.4 L73.4 191.4 L74.0 194.7 L68.2 199.4Z" fill="#2a2029" opacity="0.41"/><path d="M330.7 257.6 L330.0 262.2 L323.3 263.6 L322.7 259.0Z" fill="#2a2029" opacity="0.37"/><path d="M542.2 674.9 L539.3 676.7 L535.7 675.6 L535.7 672.6 L539.7 672.2Z" fill="#2a2029" opacity="0.35"/><path d="M76.4 614.3 L87.5 613.1 L88.9 618.1 L86.2 623.9 L79.6 620.9Z" fill="#2a2029" opacity="0.31"/><path d="M88.7 525.8 L88.4 529.2 L85.5 532.3 L80.6 529.8 L79.9 525.2 L86.2 524.4Z" fill="#2a2029" opacity="0.38"/><path d="M176.6 408.6 L172.7 409.7 L167.5 408.1 L168.6 401.2 L174.3 400.1 L178.2 401.5Z" fill="#2a2029" opacity="0.23"/><path d="M539.0 364.2 L542.5 363.8 L544.2 365.8 L541.1 368.2Z" fill="#0c070b" opacity="0.40"/><path d="M213.9 551.9 L222.2 553.2 L221.8 557.8 L213.0 559.5Z" fill="#2a2029" opacity="0.41"/><path d="M104.1 348.6 L113.2 349.6 L111.0 357.5 L102.4 358.5 L102.4 354.2Z" fill="#2a2029" opacity="0.41"/><path d="M390.6 197.9 L386.6 199.1 L386.4 196.2 L389.8 196.1Z" fill="#2a2029" opacity="0.39"/><path d="M195.8 396.9 L197.8 395.4 L200.1 396.8 L197.5 399.2Z" fill="#2a2029" opacity="0.37"/><path d="M314.2 269.1 L305.1 274.3 L303.5 271.6 L299.6 264.8 L307.7 260.8 L312.1 264.2Z" fill="#2a2029" opacity="0.28"/><path d="M41.9 401.4 L49.8 402.3 L48.4 412.1 L38.3 410.8Z" fill="#0c070b" opacity="0.40"/><path d="M468.1 676.8 L465.4 685.4 L455.0 687.4 L455.3 673.2Z" fill="#2a2029" opacity="0.28"/><path d="M498.4 580.0 L495.2 578.2 L494.4 571.6 L501.3 570.5 L506.8 573.6 L502.9 577.6Z" fill="#0c070b" opacity="0.40"/><path d="M573.2 533.0 L575.9 530.5 L582.3 532.3 L579.8 538.4 L573.2 538.0Z" fill="#2a2029" opacity="0.22"/><path d="M152.6 478.7 L144.2 487.7 L138.4 483.6 L135.7 474.0 L145.5 471.7Z" fill="#0c070b" opacity="0.40"/><path d="M44.5 160.8 L42.1 159.3 L41.9 156.5 L44.4 152.7 L51.1 156.5 L49.5 158.9Z" fill="#2a2029" opacity="0.20"/><path d="M235.3 146.2 L231.0 148.4 L226.2 148.0 L225.9 146.2 L229.8 141.0 L233.9 141.9Z" fill="#2a2029" opacity="0.21"/><path d="M224.5 521.0 L227.2 520.7 L232.0 522.6 L229.7 527.0 L223.3 525.5Z" fill="#2a2029" opacity="0.34"/><path d="M432.9 488.8 L434.5 487.9 L439.9 491.1 L438.2 494.7 L434.8 495.4 L432.0 493.1Z" fill="#2a2029" opacity="0.22"/><path d="M528.1 719.9 L527.0 719.7 L525.0 718.0 L528.0 716.0 L531.1 717.3 L530.8 718.3Z" fill="#2a2029" opacity="0.43"/><path d="M126.1 146.9 L131.8 138.9 L137.6 144.4 L132.9 150.6Z" fill="#2a2029" opacity="0.20"/><path d="M532.5 682.1 L523.3 686.4 L521.2 680.6 L522.8 676.6 L530.1 676.3Z" fill="#0c070b" opacity="0.40"/><path d="M498.1 519.2 L492.4 517.5 L493.4 514.5 L499.9 514.3 L501.8 516.4Z" fill="#2a2029" opacity="0.24"/><path d="M456.4 492.1 L450.9 492.3 L446.4 491.3 L447.0 488.5 L451.8 484.6 L454.5 487.9Z" fill="#2a2029" opacity="0.23"/><path d="M214.1 433.1 L217.7 428.0 L222.2 431.1 L217.8 436.0Z" fill="#0c070b" opacity="0.40"/><path d="M417.3 140.1 L414.8 141.1 L413.1 137.4 L415.7 136.0 L418.7 136.3 L420.4 138.7Z" fill="#0c070b" opacity="0.40"/><path d="M486.5 429.9 L487.8 432.7 L484.0 432.8 L482.2 432.8 L482.5 430.0Z" fill="#2a2029" opacity="0.25"/><path d="M71.6 606.7 L64.2 612.1 L51.8 608.7 L56.9 598.4 L64.5 599.3Z" fill="#2a2029" opacity="0.44"/><path d="M273.5 359.7 L273.9 365.7 L264.8 363.6 L268.4 356.7Z" fill="#2a2029" opacity="0.22"/><path d="M409.3 143.8 L418.0 146.4 L415.6 152.4 L409.0 155.5 L405.4 149.5Z" fill="#2a2029" opacity="0.26"/><path d="M421.1 579.5 L418.2 581.9 L415.1 581.1 L413.0 574.7 L418.6 574.0 L423.8 575.5Z" fill="#2a2029" opacity="0.35"/><path d="M381.3 733.1 L379.3 731.4 L380.6 729.7 L383.8 729.1 L384.9 732.7 L382.3 733.5Z" fill="#2a2029" opacity="0.42"/><path d="M302.2 379.7 L292.7 381.3 L288.8 377.8 L295.8 370.0 L300.5 372.9Z" fill="#2a2029" opacity="0.39"/><path d="M122.6 535.7 L127.3 536.8 L127.9 539.2 L128.2 542.1 L123.2 542.8 L120.9 538.2Z" fill="#0c070b" opacity="0.40"/><path d="M303.5 450.7 L296.1 446.5 L297.8 442.3 L306.9 443.6Z" fill="#0c070b" opacity="0.40"/><path d="M281.5 524.4 L272.9 522.2 L279.3 513.9 L283.9 515.0 L287.4 522.1Z" fill="#2a2029" opacity="0.30"/><path d="M293.2 697.8 L282.1 696.6 L284.3 689.6 L288.8 688.6Z" fill="#0c070b" opacity="0.40"/><path d="M491.4 137.6 L491.3 131.7 L496.3 133.8 L495.8 136.2Z" fill="#2a2029" opacity="0.23"/><path d="M88.2 579.0 L91.6 586.7 L82.4 588.0 L81.4 582.5Z" fill="#0c070b" opacity="0.40"/><path d="M417.7 324.9 L414.0 324.0 L415.6 319.9 L420.4 320.6Z" fill="#2a2029" opacity="0.28"/><path d="M185.8 361.1 L180.8 359.9 L180.7 356.2 L185.6 354.5 L189.1 357.5 L188.4 361.7Z" fill="#0c070b" opacity="0.40"/><path d="M225.7 447.2 L229.3 450.1 L230.2 454.0 L222.9 453.7 L221.3 450.1 L222.4 448.3Z" fill="#2a2029" opacity="0.23"/><path d="M117.7 666.0 L110.1 662.6 L109.9 655.5 L117.0 654.6 L122.7 660.3Z" fill="#2a2029" opacity="0.25"/><path d="M88.9 188.4 L92.9 179.8 L98.4 183.3 L96.7 190.3Z" fill="#2a2029" opacity="0.27"/><path d="M174.1 477.2 L178.2 478.2 L179.2 482.5 L177.7 484.2 L173.2 482.0 L170.6 479.4Z" fill="#2a2029" opacity="0.25"/><path d="M126.0 242.2 L120.1 243.4 L120.0 238.4 L122.6 236.9 L128.4 238.7Z" fill="#2a2029" opacity="0.22"/><path d="M328.4 645.2 L336.8 648.4 L333.9 654.1 L330.5 655.2 L326.8 652.4 L325.1 648.8Z" fill="#2a2029" opacity="0.24"/><path d="M248.2 422.1 L245.3 422.4 L242.8 418.4 L249.2 415.6 L250.4 418.7Z" fill="#2a2029" opacity="0.22"/><path d="M434.5 212.1 L428.5 214.0 L425.2 210.1 L426.3 202.9 L431.9 205.2Z" fill="#0c070b" opacity="0.40"/><path d="M181.5 223.0 L178.1 224.5 L176.1 222.4 L176.5 219.7 L178.8 218.6 L183.2 221.3Z" fill="#2a2029" opacity="0.20"/><path d="M610.6 427.9 L605.5 429.9 L604.7 419.9 L609.5 419.1 L614.6 420.5 L616.0 425.5Z" fill="#0c070b" opacity="0.40"/><path d="M512.7 439.8 L505.2 445.5 L500.6 437.2 L508.4 431.1Z" fill="#2a2029" opacity="0.25"/><path d="M235.5 693.0 L223.6 694.2 L222.1 688.7 L229.2 685.9Z" fill="#2a2029" opacity="0.44"/><path d="M639.4 606.3 L643.1 603.2 L647.1 605.8 L647.4 608.9 L639.3 611.1Z" fill="#2a2029" opacity="0.40"/><path d="M339.7 590.8 L340.8 596.6 L333.8 599.3 L328.5 597.2 L330.9 589.8Z" fill="#0c070b" opacity="0.40"/><path d="M629.3 454.6 L614.8 456.5 L612.2 448.0 L626.1 441.9Z" fill="#2a2029" opacity="0.43"/><path d="M580.9 152.9 L583.6 160.4 L582.1 163.9 L571.9 161.2 L570.9 155.2Z" fill="#2a2029" opacity="0.20"/><path d="M329.7 139.8 L330.3 137.7 L333.4 136.1 L334.8 139.3 L333.6 140.6Z" fill="#2a2029" opacity="0.31"/><path d="M434.6 613.7 L438.0 613.6 L439.6 614.7 L440.4 617.6 L435.3 618.4 L435.1 616.5Z" fill="#2a2029" opacity="0.40"/><path d="M397.5 646.9 L406.0 639.0 L411.4 644.4 L409.2 648.9 L398.8 653.2Z" fill="#2a2029" opacity="0.29"/><path d="M595.6 668.2 L600.9 663.3 L608.7 669.5 L597.9 673.9Z" fill="#0c070b" opacity="0.40"/><path d="M439.9 430.1 L431.0 431.4 L426.2 422.8 L437.8 420.9Z" fill="#0c070b" opacity="0.40"/><path d="M237.1 217.7 L230.2 217.9 L223.6 208.1 L229.9 203.6 L239.8 208.1Z" fill="#2a2029" opacity="0.44"/><path d="M424.2 612.7 L429.8 609.5 L436.3 612.2 L436.9 615.6 L427.1 618.0Z" fill="#2a2029" opacity="0.22"/><path d="M216.6 437.7 L224.8 437.3 L229.6 445.3 L217.8 448.0Z" fill="#2a2029" opacity="0.30"/><path d="M450.8 351.6 L444.9 348.2 L448.0 343.3 L452.0 344.9 L453.6 349.2Z" fill="#2a2029" opacity="0.37"/><path d="M488.5 295.0 L491.8 290.9 L497.5 291.7 L496.4 297.6 L490.6 297.2Z" fill="#0c070b" opacity="0.40"/><path d="M81.5 454.9 L81.2 461.2 L81.9 464.4 L72.3 463.2 L66.8 460.6 L72.9 453.0Z" fill="#2a2029" opacity="0.32"/><path d="M231.5 649.3 L241.8 646.9 L244.1 650.9 L238.2 656.2Z" fill="#2a2029" opacity="0.37"/><path d="M389.3 366.8 L391.2 370.9 L387.3 376.4 L383.9 376.0 L378.7 371.4Z" fill="#2a2029" opacity="0.30"/><path d="M203.9 517.1 L213.5 512.3 L215.5 518.9 L211.6 523.7 L199.1 522.9Z" fill="#2a2029" opacity="0.29"/><path d="M463.2 179.8 L454.3 175.9 L457.4 166.5 L463.7 168.7 L468.7 173.4Z" fill="#2a2029" opacity="0.27"/><path d="M605.8 714.5 L599.0 710.3 L605.3 707.6 L610.0 710.8Z" fill="#2a2029" opacity="0.31"/><path d="M79.2 513.2 L70.7 515.2 L66.6 509.0 L65.6 505.6 L73.4 504.4 L78.9 507.5Z" fill="#2a2029" opacity="0.44"/><path d="M573.1 503.6 L570.1 504.4 L568.4 501.0 L569.5 498.8 L573.0 499.3 L575.7 502.1Z" fill="#2a2029" opacity="0.39"/><path d="M620.1 683.6 L614.6 689.9 L608.0 687.7 L605.7 682.8 L611.1 679.1 L615.9 680.1Z" fill="#2a2029" opacity="0.37"/><path d="M285.8 150.0 L286.3 142.4 L292.2 141.8 L298.8 149.7Z" fill="#2a2029" opacity="0.41"/><path d="M358.6 285.1 L350.1 281.2 L355.2 276.9 L359.6 278.1 L361.3 283.1Z" fill="#0c070b" opacity="0.40"/><path d="M48.3 260.7 L44.2 263.3 L35.9 261.4 L37.6 252.5 L43.1 253.2Z" fill="#2a2029" opacity="0.39"/><path d="M584.4 136.1 L583.4 132.9 L586.9 130.4 L590.4 133.4 L587.5 135.3Z" fill="#2a2029" opacity="0.21"/><path d="M327.7 370.9 L323.1 375.9 L320.0 375.7 L313.4 371.3 L318.1 363.9 L321.5 364.7Z" fill="#2a2029" opacity="0.26"/><path d="M484.8 517.4 L489.9 520.1 L484.5 523.1 L481.6 517.5Z" fill="#2a2029" opacity="0.27"/><path d="M128.8 136.0 L134.2 138.6 L125.9 145.1 L117.3 139.5Z" fill="#2a2029" opacity="0.42"/><path d="M70.1 146.3 L78.3 143.2 L83.6 145.1 L78.1 151.8Z" fill="#0c070b" opacity="0.40"/><path d="M489.8 150.8 L479.5 147.0 L484.9 140.3 L492.2 137.0 L495.2 142.1Z" fill="#2a2029" opacity="0.45"/><path d="M91.0 298.1 L85.8 295.8 L84.7 294.3 L88.6 290.6 L92.0 293.2Z" fill="#2a2029" opacity="0.35"/><path d="M437.8 679.8 L436.4 685.5 L423.3 683.1 L428.5 677.2Z" fill="#2a2029" opacity="0.31"/><path d="M468.7 281.6 L467.6 285.4 L461.4 282.4 L462.3 278.2 L467.8 279.0Z" fill="#2a2029" opacity="0.20"/><path d="M367.8 331.1 L366.3 339.4 L358.4 338.2 L355.1 335.5 L360.0 329.6Z" fill="#2a2029" opacity="0.33"/><path d="M618.9 221.8 L628.4 223.0 L630.2 227.2 L625.9 229.6 L619.2 230.6 L618.5 225.5Z" fill="#0c070b" opacity="0.40"/><path d="M611.6 491.3 L617.5 494.9 L617.9 501.4 L608.6 499.6Z" fill="#2a2029" opacity="0.36"/><path d="M391.0 529.6 L390.6 523.3 L391.6 520.1 L400.8 522.0 L402.1 526.9 L393.7 529.4Z" fill="#2a2029" opacity="0.26"/><path d="M277.6 547.9 L277.3 549.5 L275.9 552.2 L273.3 551.1 L271.6 548.8 L274.0 545.8Z" fill="#0c070b" opacity="0.40"/><path d="M84.0 598.0 L91.0 594.2 L94.9 602.5 L87.1 605.2 L84.0 602.8Z" fill="#2a2029" opacity="0.23"/><path d="M617.2 351.3 L615.4 345.3 L630.3 344.6 L629.8 351.4Z" fill="#2a2029" opacity="0.21"/><path d="M428.4 668.5 L426.0 666.6 L425.2 659.8 L432.7 658.3 L435.3 664.7Z" fill="#2a2029" opacity="0.32"/><path d="M276.1 425.4 L275.7 416.3 L286.6 417.6 L286.9 426.1Z" fill="#2a2029" opacity="0.25"/><path d="M411.4 737.9 L405.9 737.2 L400.6 730.0 L403.1 727.1 L415.1 730.4Z" fill="#2a2029" opacity="0.22"/><path d="M309.8 317.4 L313.2 319.9 L313.1 322.9 L308.1 323.9 L306.2 321.2 L306.6 319.4Z" fill="#2a2029" opacity="0.37"/><path d="M119.2 345.3 L122.1 348.6 L122.3 351.3 L115.5 350.6 L114.9 348.7Z" fill="#2a2029" opacity="0.24"/><path d="M146.5 582.1 L148.9 576.7 L155.2 577.6 L151.8 585.4Z" fill="#2a2029" opacity="0.36"/><path d="M163.4 634.8 L163.0 633.1 L163.2 629.1 L168.5 629.5 L169.7 632.7Z" fill="#0c070b" opacity="0.40"/><path d="M527.5 491.7 L533.2 489.8 L533.9 494.8 L531.1 499.3 L526.3 496.2 L525.5 494.6Z" fill="#2a2029" opacity="0.31"/><path d="M291.1 661.6 L284.9 668.2 L278.3 664.5 L279.7 661.0Z" fill="#0c070b" opacity="0.40"/><path d="M79.2 138.0 L88.3 132.0 L91.3 136.0 L88.3 138.0 L81.2 141.1Z" fill="#8b786f" stroke="#ff1a1a" stroke-width="1.25" stroke-linejoin="round"/><path d="M47.1 141.1 L52.1 140.1 L58.1 141.1 L57.1 147.1 L47.1 148.1Z" fill="#8b786f" stroke="#ff1a1a" stroke-width="1.25" stroke-linejoin="round"/><path d="M51.5 141.5 L57.1 140.7 L57.5 146.1 L52.1 146.7Z" fill="#a89060" stroke="#2020ff" stroke-width="1.25" stroke-linejoin="round"/><path d="M47.1 154.1 L53.1 157.1 L58.1 158.1 L58.7 163.2 L51.1 164.2 L46.7 160.1Z" fill="#8b786f" stroke="#ff1a1a" stroke-width="1.25" stroke-linejoin="round"/><path d="M100.3 144.1 L107.4 143.1 L110.4 151.1 L112.4 159.1 L109.4 165.2 L104.3 163.2 L101.3 157.1 L102.3 151.1Z" fill="#c2b4c0" stroke="#ffff10" stroke-width="1.25" stroke-linejoin="round"/><path d="M110.4 182.3 L119.4 180.2 L127.5 177.2 L125.4 183.3 L117.4 193.3 L111.4 190.3Z" fill="#c2b4c0" stroke="#ffff10" stroke-width="1.25" stroke-linejoin="round"/><path d="M80.2 193.3 L91.3 186.3 L96.3 190.3 L97.3 199.3 L93.3 201.3 L89.3 196.3 L81.2 196.3Z" fill="#8b786f" stroke="#ff1a1a" stroke-width="1.25" stroke-linejoin="round"/><path d="M32.0 200.3 L40.0 200.3 L45.1 215.4 L59.1 223.5 L59.1 229.5 L49.1 238.5 L41.0 239.5 L32.0 244.6Z" fill="#c2b4c0" stroke="#ffff10" stroke-width="1.25" stroke-linejoin="round"/><path d="M173.7 213.4 L177.7 201.3 L180.7 203.4 L178.7 213.4 L173.7 220.4Z" fill="#4a3d4c" stroke="#8c20a0" stroke-width="1.25" stroke-linejoin="round"/><path d="M140.5 232.5 L151.6 231.5 L153.6 233.5 L145.5 238.5 L141.5 238.5Z" fill="#c2b4c0" stroke="#ffff10" stroke-width="1.25" stroke-linejoin="round"/><path d="M209.8 196.3 L214.9 193.3 L220.9 195.3 L219.9 200.3 L213.9 201.3Z" fill="#8b786f" stroke="#ff1a1a" stroke-width="1.25" stroke-linejoin="round"/><path d="M83.2 283.7 L92.3 275.7 L89.3 265.7 L94.3 265.7 L97.3 273.7 L94.3 280.7 L85.3 285.8Z" fill="#8b786f" stroke="#ff1a1a" stroke-width="1.25" stroke-linejoin="round"/><path d="M130.5 269.7 L135.5 269.7 L136.5 278.7 L132.5 281.7 L130.5 277.7Z" fill="#8b786f" stroke="#ff1a1a" stroke-width="1.25" stroke-linejoin="round"/><path d="M143.5 265.7 L148.6 259.6 L151.6 260.6 L151.6 267.7 L146.5 272.7 L143.5 269.7Z" fill="#8b786f" stroke="#ff1a1a" stroke-width="1.25" stroke-linejoin="round"/><path d="M214.9 269.7 L217.9 263.6 L221.9 267.7 L224.9 269.7 L224.9 273.7 L217.9 273.7Z" fill="#8b786f" stroke="#ff1a1a" stroke-width="1.25" stroke-linejoin="round"/><path d="M165.6 287.8 L171.7 285.8 L173.7 289.8 L167.6 291.8Z" fill="#c2b4c0" stroke="#ffff10" stroke-width="1.25" stroke-linejoin="round"/><path d="M167.6 305.8 L172.7 299.8 L179.7 299.8 L184.7 305.8 L182.7 310.9 L175.7 315.9 L169.7 312.9Z" fill="#8b786f" stroke="#ff1a1a" stroke-width="1.25" stroke-linejoin="round"/><path d="M208.8 305.8 L213.9 298.8 L217.9 301.8 L215.9 308.9 L210.9 309.9Z" fill="#c2b4c0" stroke="#ffff10" stroke-width="1.25" stroke-linejoin="round"/><path d="M228.9 301.8 L238.0 301.8 L243.0 303.8 L242.0 308.9 L234.0 308.9 L228.9 306.9Z" fill="#8b786f" stroke="#ff1a1a" stroke-width="1.25" stroke-linejoin="round"/><path d="M110.4 334.0 L113.4 314.9 L121.4 313.9 L122.4 318.9 L117.4 330.0 L113.4 334.0Z" fill="#c2b4c0" stroke="#ffff10" stroke-width="1.25" stroke-linejoin="round"/><path d="M127.5 321.9 L133.5 318.9 L140.5 317.9 L141.5 322.9 L135.5 327.0 L129.5 327.0Z" fill="#c2b4c0" stroke="#ffff10" stroke-width="1.25" stroke-linejoin="round"/><path d="M193.8 327.0 L199.8 325.9 L200.8 332.0 L197.8 333.0Z" fill="#8b786f" stroke="#ff1a1a" stroke-width="1.25" stroke-linejoin="round"/><path d="M201.8 330.0 L205.8 322.9 L211.9 319.9 L217.9 319.9 L215.9 330.0 L211.9 339.0 L203.8 339.0Z" fill="#c2b4c0" stroke="#ffff10" stroke-width="1.25" stroke-linejoin="round"/><path d="M148.6 339.0 L153.6 330.0 L156.6 329.0 L153.6 339.0Z" fill="#00f4fc" stroke="#00ffff" stroke-width="0.8"/><circle cx="78.2" cy="295.8" r="1.1" fill="#00e0e8"/><circle cx="82.2" cy="253.6" r="1.1" fill="#00e0e8"/><circle cx="125.4" cy="144.1" r="1.1" fill="#00e0e8"/><circle cx="128.5" cy="205.4" r="1.1" fill="#00e0e8"/><circle cx="119.4" cy="205.4" r="1.1" fill="#00e0e8"/><circle cx="130.5" cy="295.8" r="1.1" fill="#00e0e8"/><circle cx="221.9" cy="290.8" r="1.1" fill="#00e0e8"/><circle cx="206.8" cy="300.8" r="1.1" fill="#00e0e8"/><circle cx="141.5" cy="324.9" r="1.1" fill="#00e0e8"/><path d="M336.4 133.0 L339.5 129.0 L349.5 129.0 L348.5 137.0 L341.5 136.0Z" fill="#c2b4c0" stroke="#ffff10" stroke-width="1.25" stroke-linejoin="round"/><path d="M357.5 129.0 L363.6 129.0 L361.6 132.0Z" fill="#c2b4c0" stroke="#ffff10" stroke-width="1.25" stroke-linejoin="round"/><path d="M364.6 131.0 L368.6 129.0 L372.6 131.0 L371.6 141.1 L367.6 149.1 L364.6 143.1Z" fill="#8b786f" stroke="#ff1a1a" stroke-width="1.25" stroke-linejoin="round"/><path d="M334.4 151.1 L337.5 143.1 L345.5 142.1 L353.5 147.1 L354.5 151.1 L349.5 156.1 L343.5 154.1 L336.4 156.1Z" fill="#8b786f" stroke="#ff1a1a" stroke-width="1.25" stroke-linejoin="round"/><path d="M380.7 141.1 L383.7 140.1 L388.7 146.1 L386.7 148.1Z" fill="#c2b4c0" stroke="#ffff10" stroke-width="1.25" stroke-linejoin="round"/><path d="M318.4 149.1 L320.4 149.1 L324.4 157.1 L322.4 159.1 L319.4 155.1Z" fill="#00f4fc" stroke="#00ffff" stroke-width="0.8"/><path d="M421.9 173.2 L426.9 166.2 L432.9 159.1 L438.9 166.2 L439.9 170.2 L436.9 178.2 L427.9 175.2Z" fill="#8b786f" stroke="#ff1a1a" stroke-width="1.25" stroke-linejoin="round"/><path d="M293.2 183.3 L301.3 181.3 L306.3 188.3 L300.3 190.3 L296.3 189.3Z" fill="#c2b4c0" stroke="#ffff10" stroke-width="1.25" stroke-linejoin="round"/><path d="M348.5 182.3 L352.5 177.2 L355.5 183.3 L355.5 187.3 L349.5 186.3Z" fill="#c2b4c0" stroke="#ffff10" stroke-width="1.25" stroke-linejoin="round"/><path d="M398.7 194.3 L401.8 192.3 L403.8 195.3 L400.8 199.3Z" fill="#8b786f" stroke="#ff1a1a" stroke-width="1.25" stroke-linejoin="round"/><path d="M293.2 227.5 L301.3 229.5 L305.3 233.5 L303.3 234.5 L295.3 230.5Z" fill="#8b786f" stroke="#ff1a1a" stroke-width="1.25" stroke-linejoin="round"/><path d="M305.3 235.5 L311.3 240.5 L309.3 241.5Z" fill="#00f4fc" stroke="#00ffff" stroke-width="0.8"/><path d="M277.2 248.6 L282.2 245.6 L288.2 249.6 L290.2 254.6 L285.2 259.6 L280.2 258.6Z" fill="#8b786f" stroke="#ff1a1a" stroke-width="1.25" stroke-linejoin="round"/><path d="M327.4 245.6 L334.4 242.5 L339.5 242.5 L343.5 249.6 L342.5 254.6 L331.4 254.6Z" fill="#c2b4c0" stroke="#ffff10" stroke-width="1.25" stroke-linejoin="round"/><path d="M357.5 230.5 L362.6 227.5 L366.6 231.5 L363.6 235.5 L359.6 235.5Z" fill="#8b786f" stroke="#ff1a1a" stroke-width="1.25" stroke-linejoin="round"/><path d="M378.7 235.5 L383.7 229.5 L387.7 233.5 L388.7 238.5 L381.7 239.5Z" fill="#4a3d4c" stroke="#8c20a0" stroke-width="1.25" stroke-linejoin="round"/><path d="M415.8 234.5 L419.8 231.5 L423.9 233.5 L427.9 238.5 L426.9 245.6 L422.9 243.5Z" fill="#8b786f" stroke="#ff1a1a" stroke-width="1.25" stroke-linejoin="round"/><path d="M448.0 223.5 L450.0 216.4 L453.0 215.4 L453.0 227.5Z" fill="#c2b4c0" stroke="#ffff10" stroke-width="1.25" stroke-linejoin="round"/><path d="M265.1 289.8 L271.1 285.8 L275.2 287.8 L271.1 291.8 L267.1 291.8Z" fill="#00f4fc" stroke="#00ffff" stroke-width="0.8"/><path d="M244.0 310.9 L251.0 299.8 L254.1 298.8 L251.0 308.9 L247.0 311.9Z" fill="#8b786f" stroke="#ff1a1a" stroke-width="1.25" stroke-linejoin="round"/><path d="M375.6 282.7 L378.7 271.7 L387.7 267.7 L393.7 259.6 L399.8 261.6 L398.7 267.7 L391.7 269.7 L389.7 281.7 L389.7 303.8 L383.7 305.8 L376.6 303.8Z" fill="#c2b4c0" stroke="#ffff10" stroke-width="1.25" stroke-linejoin="round"/><path d="M411.8 277.7 L419.8 265.7 L426.9 254.6 L429.9 256.6 L427.9 269.7 L426.9 278.7 L417.8 283.7Z" fill="#c2b4c0" stroke="#ffff10" stroke-width="1.25" stroke-linejoin="round"/><path d="M434.9 295.8 L438.9 293.8 L442.0 296.8 L438.9 299.8Z" fill="#c2b4c0" stroke="#ffff10" stroke-width="1.25" stroke-linejoin="round"/><path d="M405.8 305.8 L409.8 301.8 L414.8 304.8 L411.8 311.9 L407.8 311.9Z" fill="#8b786f" stroke="#ff1a1a" stroke-width="1.25" stroke-linejoin="round"/><path d="M408.8 322.9 L411.8 316.9 L416.8 315.9 L415.8 320.9 L409.8 323.9Z" fill="#8b786f" stroke="#ff1a1a" stroke-width="1.25" stroke-linejoin="round"/><path d="M405.8 334.0 L417.8 321.9 L426.9 320.9 L427.9 327.0 L434.9 327.0 L438.9 331.0 L435.9 339.0 L403.8 339.0Z" fill="#c2b4c0" stroke="#ffff10" stroke-width="1.25" stroke-linejoin="round"/><path d="M371.6 339.0 L377.6 332.0 L384.7 333.0 L386.7 339.0Z" fill="#c2b4c0" stroke="#ffff10" stroke-width="1.25" stroke-linejoin="round"/><path d="M280.2 332.0 L286.2 321.9 L289.2 324.9 L285.2 332.0Z" fill="#c2b4c0" stroke="#ffff10" stroke-width="1.25" stroke-linejoin="round"/><path d="M283.2 316.9 L289.2 316.9 L288.2 318.9 L283.2 318.9Z" fill="#00f4fc" stroke="#00ffff" stroke-width="0.8"/><circle cx="275.2" cy="146.1" r="7.0" fill="#070507"/><circle cx="397.7" cy="181.3" r="1.1" fill="#00e0e8"/><circle cx="447.0" cy="164.2" r="1.1" fill="#00e0e8"/><circle cx="449.0" cy="199.3" r="1.1" fill="#00e0e8"/><circle cx="372.6" cy="220.4" r="1.1" fill="#00e0e8"/><circle cx="443.0" cy="230.5" r="1.1" fill="#00e0e8"/><circle cx="404.8" cy="325.9" r="1.1" fill="#00e0e8"/><path d="M573.6 133.0 L576.6 129.0 L579.6 135.0 L576.6 140.1Z" fill="#4a3d4c" stroke="#8c20a0" stroke-width="1.25" stroke-linejoin="round"/><path d="M535.4 158.1 L538.4 154.1 L542.4 156.1 L537.4 161.2Z" fill="#8b786f" stroke="#ff1a1a" stroke-width="1.25" stroke-linejoin="round"/><path d="M549.5 166.2 L552.5 165.2 L555.5 169.2 L552.5 171.2Z" fill="#8b786f" stroke="#ff1a1a" stroke-width="1.25" stroke-linejoin="round"/><path d="M475.1 172.2 L478.1 170.2 L479.1 176.2Z" fill="#00f4fc" stroke="#00ffff" stroke-width="0.8"/><path d="M500.2 190.3 L503.2 189.3 L507.3 195.3Z" fill="#00f4fc" stroke="#00ffff" stroke-width="0.8"/><path d="M589.7 180.2 L593.7 175.2 L598.7 175.2 L597.7 181.3 L591.7 182.3Z" fill="#c2b4c0" stroke="#ffff10" stroke-width="1.25" stroke-linejoin="round"/><path d="M574.6 181.3 L578.6 180.2 L579.6 184.3 L575.6 184.3Z" fill="#00f4fc" stroke="#00ffff" stroke-width="0.8"/><path d="M602.7 191.3 L605.7 191.3 L605.7 194.3Z" fill="#00f4fc" stroke="#00ffff" stroke-width="0.8"/><path d="M521.3 201.3 L528.4 195.3 L534.4 193.3 L539.4 197.3 L538.4 204.4 L533.4 207.4 L523.3 203.4Z" fill="#8a8090" stroke="#ff30ff" stroke-width="1.25" stroke-linejoin="round"/><path d="M474.1 209.4 L479.1 204.4 L489.2 204.4 L495.2 209.4 L496.2 216.4 L489.2 216.4 L477.1 213.4Z" fill="#c2b4c0" stroke="#ffff10" stroke-width="1.25" stroke-linejoin="round"/><path d="M524.3 217.4 L527.4 215.4 L527.4 219.4Z" fill="#00f4fc" stroke="#00ffff" stroke-width="0.8"/><path d="M535.4 233.5 L542.4 230.5 L546.4 231.5 L543.4 236.5 L539.4 238.5 L534.4 235.5Z" fill="#c2b4c0" stroke="#ffff10" stroke-width="1.25" stroke-linejoin="round"/><path d="M609.8 215.4 L616.8 202.4 L620.8 202.4 L619.8 207.4 L612.8 216.4Z" fill="#b4aa9c" stroke="#20b8b8" stroke-width="1.25" stroke-linejoin="round"/><path d="M629.8 200.3 L636.9 194.3 L644.9 193.3 L644.9 220.4 L639.9 217.4 L633.9 209.4Z" fill="#c2b4c0" stroke="#ffff10" stroke-width="1.25" stroke-linejoin="round"/><path d="M453.0 219.4 L455.0 223.5 L453.0 224.5Z" fill="#c2b4c0" stroke="#ffff10" stroke-width="1.25" stroke-linejoin="round"/><path d="M464.1 250.6 L467.1 247.6 L467.1 250.6Z" fill="#00f4fc" stroke="#00ffff" stroke-width="0.8"/><path d="M624.8 242.5 L626.8 240.5 L627.8 245.6Z" fill="#00f4fc" stroke="#00ffff" stroke-width="0.8"/><path d="M589.7 267.7 L595.7 266.7 L598.7 264.7 L597.7 279.7 L593.7 277.7Z" fill="#c2b4c0" stroke="#ffff10" stroke-width="1.25" stroke-linejoin="round"/><path d="M608.7 283.7 L611.8 281.7 L611.8 285.8Z" fill="#00f4fc" stroke="#00ffff" stroke-width="0.8"/><path d="M464.1 317.9 L467.1 313.9 L473.1 315.9 L474.1 321.9 L466.1 321.9Z" fill="#c2b4c0" stroke="#ffff10" stroke-width="1.25" stroke-linejoin="round"/><path d="M591.7 332.0 L601.7 322.9 L607.7 319.9 L610.8 334.0 L609.8 339.0 L591.7 339.0Z" fill="#c2b4c0" stroke="#ffff10" stroke-width="1.25" stroke-linejoin="round"/><path d="M577.6 339.0 L579.6 332.0 L584.6 332.0 L587.6 339.0Z" fill="#c2b4c0" stroke="#ffff10" stroke-width="1.25" stroke-linejoin="round"/><path d="M530.4 339.0 L537.4 337.0 L538.4 339.0Z" fill="#c2b4c0" stroke="#ffff10" stroke-width="1.25" stroke-linejoin="round"/><circle cx="629.8" cy="136.0" r="1.1" fill="#00e0e8"/><circle cx="471.1" cy="164.2" r="1.1" fill="#00e0e8"/><circle cx="568.6" cy="165.2" r="1.1" fill="#00e0e8"/><circle cx="635.9" cy="222.4" r="1.1" fill="#00e0e8"/><circle cx="628.8" cy="266.7" r="1.1" fill="#00e0e8"/><circle cx="638.9" cy="299.8" r="1.1" fill="#00e0e8"/><path d="M565.5 169.2 L569.6 165.2 L571.6 173.2 L567.5 179.2Z" fill="#060406" stroke="none" stroke-width="1.25" stroke-linejoin="round"/><path d="M65.2 349.0 L73.2 345.0 L79.2 341.0 L84.2 346.0 L87.3 356.1 L77.2 355.1 L69.2 353.1Z" fill="#e8dede" stroke="#ffff10" stroke-width="1.25" stroke-linejoin="round"/><path d="M86.3 339.0 L91.3 339.0 L94.3 346.0 L90.3 348.0 L87.3 345.0Z" fill="#8b786f" stroke="#ff1a1a" stroke-width="1.25" stroke-linejoin="round"/><path d="M61.1 404.3 L64.1 401.3 L67.2 405.3Z" fill="#c2b4c0" stroke="#ffff10" stroke-width="1.25" stroke-linejoin="round"/><path d="M48.1 417.4 L52.1 411.3 L58.1 410.3 L62.1 418.4 L61.1 423.4 L55.1 426.4 L49.1 421.4Z" fill="#8b786f" stroke="#ff1a1a" stroke-width="1.25" stroke-linejoin="round"/><path d="M101.3 418.4 L103.3 416.4 L104.3 419.4Z" fill="#00f4fc" stroke="#00ffff" stroke-width="0.8"/><path d="M105.3 413.4 L108.4 412.4 L108.4 415.4Z" fill="#00f4fc" stroke="#00ffff" stroke-width="0.8"/><circle cx="97.3" cy="390.2" r="10.0" fill="#070507"/><path d="M132.5 452.5 L137.5 448.5 L142.5 449.5 L139.5 453.5 L134.5 454.6Z" fill="#b4aa9c" stroke="#20b8b8" stroke-width="1.25" stroke-linejoin="round"/><path d="M236.0 367.1 L239.0 358.1 L243.0 356.1 L243.0 368.1Z" fill="#8b786f" stroke="#ff1a1a" stroke-width="1.25" stroke-linejoin="round"/><path d="M218.9 436.5 L221.9 432.4 L225.9 434.5 L225.9 440.5 L220.9 441.5Z" fill="#c2b4c0" stroke="#ffff10" stroke-width="1.25" stroke-linejoin="round"/><path d="M72.2 494.7 L78.2 489.7 L87.3 489.7 L93.3 496.8 L88.3 502.8 L81.2 507.8 L73.2 501.8Z" fill="#c2b4c0" stroke="#ffff10" stroke-width="1.25" stroke-linejoin="round"/><path d="M124.4 520.9 L132.5 513.8 L139.5 508.8 L143.5 520.9 L142.5 529.9 L135.5 530.9 L130.5 527.9Z" fill="#c2b4c0" stroke="#ffff10" stroke-width="1.25" stroke-linejoin="round"/><path d="M138.5 540.0 L142.5 532.9 L149.6 530.9 L156.6 531.9 L154.6 537.0 L147.5 542.0 L140.5 542.0Z" fill="#c2b4c0" stroke="#ffff10" stroke-width="1.25" stroke-linejoin="round"/><path d="M161.6 533.9 L163.6 523.9 L166.6 522.9 L168.7 527.9 L165.6 533.9Z" fill="#8b786f" stroke="#ff1a1a" stroke-width="1.25" stroke-linejoin="round"/><path d="M192.8 526.9 L197.8 519.9 L202.8 520.9 L203.8 525.9 L196.8 527.9Z" fill="#8b786f" stroke="#ff1a1a" stroke-width="1.25" stroke-linejoin="round"/><path d="M195.8 347.0 L198.8 344.0 L200.8 349.0Z" fill="#00f4fc" stroke="#00ffff" stroke-width="0.8"/><circle cx="129.5" cy="384.2" r="1.1" fill="#00e0e8"/><circle cx="131.5" cy="399.3" r="1.1" fill="#00e0e8"/><circle cx="158.6" cy="403.3" r="1.1" fill="#00e0e8"/><circle cx="61.1" cy="446.5" r="1.1" fill="#00e0e8"/><circle cx="67.2" cy="451.5" r="1.1" fill="#00e0e8"/><circle cx="166.6" cy="544.0" r="1.1" fill="#00e0e8"/><path d="M243.0 373.2 L249.0 359.1 L263.1 347.0 L270.1 355.1 L282.2 358.1 L273.1 369.1 L271.1 380.2 L266.1 382.2 L253.0 377.2Z" fill="#c2b4c0" stroke="#ffff10" stroke-width="1.25" stroke-linejoin="round"/><path d="M373.6 339.0 L389.7 339.0 L387.7 347.0 L390.7 355.1 L383.7 354.1 L376.6 347.0Z" fill="#c2b4c0" stroke="#ffff10" stroke-width="1.25" stroke-linejoin="round"/><path d="M422.9 339.0 L433.9 339.0 L428.9 346.0Z" fill="#c2b4c0" stroke="#ffff10" stroke-width="1.25" stroke-linejoin="round"/><path d="M278.2 369.1 L283.2 368.1 L290.2 370.1 L286.2 372.2 L280.2 372.2Z" fill="#b4aa9c" stroke="#20b8b8" stroke-width="1.25" stroke-linejoin="round"/><path d="M350.5 375.2 L354.5 368.1 L357.5 370.1 L355.5 376.2Z" fill="#00f4fc" stroke="#00ffff" stroke-width="0.8"/><path d="M340.5 382.2 L346.5 379.2 L352.5 380.2 L354.5 386.2 L348.5 388.2 L341.5 386.2Z" fill="#c2b4c0" stroke="#ffff10" stroke-width="1.25" stroke-linejoin="round"/><path d="M419.8 369.1 L423.9 366.1 L428.9 365.1 L430.9 371.2 L424.9 373.2Z" fill="#8b786f" stroke="#ff1a1a" stroke-width="1.25" stroke-linejoin="round"/><path d="M404.8 397.3 L411.8 390.2 L416.8 389.2 L413.8 394.3 L406.8 398.3Z" fill="#8b786f" stroke="#ff1a1a" stroke-width="1.25" stroke-linejoin="round"/><path d="M269.1 403.3 L274.1 395.3 L281.2 390.2 L282.2 401.3 L276.2 406.3Z" fill="#4a3d4c" stroke="#8c20a0" stroke-width="1.25" stroke-linejoin="round"/><path d="M282.2 393.3 L285.2 391.3 L288.2 396.3 L285.2 397.3Z" fill="#00f4fc" stroke="#00ffff" stroke-width="0.8"/><path d="M314.3 397.3 L317.4 396.3 L325.4 399.3 L324.4 402.3 L318.4 403.3Z" fill="#8b786f" stroke="#ff1a1a" stroke-width="1.25" stroke-linejoin="round"/><path d="M411.8 479.7 L414.8 478.7 L415.8 485.7 L413.8 486.7Z" fill="#00f4fc" stroke="#00ffff" stroke-width="0.8"/><circle cx="424.9" cy="533.9" r="6.0" fill="#070507"/><path d="M252.0 538.0 L255.1 534.9 L258.1 538.0 L255.1 540.0Z" fill="#c2b4c0" stroke="#ffff10" stroke-width="1.25" stroke-linejoin="round"/><path d="M526.4 345.0 L530.4 339.0 L537.4 339.0 L535.4 348.0 L529.4 349.0Z" fill="#c2b4c0" stroke="#ffff10" stroke-width="1.25" stroke-linejoin="round"/><path d="M589.7 343.0 L593.7 339.0 L609.8 339.0 L605.7 343.0 L591.7 345.0Z" fill="#c2b4c0" stroke="#ffff10" stroke-width="1.25" stroke-linejoin="round"/><path d="M522.3 356.1 L533.4 355.1 L539.4 360.1 L539.4 370.1 L536.4 371.2 L527.4 363.1Z" fill="#8b786f" stroke="#ff1a1a" stroke-width="1.25" stroke-linejoin="round"/><path d="M616.8 392.3 L620.8 387.2 L625.8 388.2 L623.8 394.3 L617.8 395.3Z" fill="#8b786f" stroke="#ff1a1a" stroke-width="1.25" stroke-linejoin="round"/><path d="M513.3 399.3 L518.3 397.3 L522.3 399.3 L519.3 402.3 L514.3 402.3Z" fill="#c2b4c0" stroke="#ffff10" stroke-width="1.25" stroke-linejoin="round"/><path d="M453.0 410.3 L457.0 412.4 L460.0 418.4 L458.0 421.4 L453.0 419.4Z" fill="#c2b4c0" stroke="#ffff10" stroke-width="1.25" stroke-linejoin="round"/><path d="M529.4 423.4 L533.4 420.4 L537.4 422.4 L538.4 428.4 L533.4 429.4Z" fill="#c2b4c0" stroke="#ffff10" stroke-width="1.25" stroke-linejoin="round"/><path d="M562.5 429.4 L568.6 422.4 L573.6 424.4 L575.6 431.4 L572.6 437.5 L565.5 436.5Z" fill="#c2b4c0" stroke="#ffff10" stroke-width="1.25" stroke-linejoin="round"/><path d="M523.3 442.5 L526.4 440.5 L529.4 443.5 L526.4 446.5Z" fill="#c2b4c0" stroke="#ffff10" stroke-width="1.25" stroke-linejoin="round"/><path d="M567.5 471.6 L572.6 467.6 L576.6 471.6 L579.6 476.7 L576.6 480.7 L571.6 477.7Z" fill="#c2b4c0" stroke="#ffff10" stroke-width="1.25" stroke-linejoin="round"/><path d="M493.2 487.7 L496.2 482.7 L500.2 483.7 L502.2 492.7 L499.2 498.8 L494.2 496.8Z" fill="#8b786f" stroke="#ff1a1a" stroke-width="1.25" stroke-linejoin="round"/><path d="M508.3 531.9 L513.3 520.9 L525.3 509.8 L534.4 498.8 L542.4 499.8 L549.5 506.8 L545.4 515.8 L535.4 523.9 L525.3 527.9 L513.3 534.9Z" fill="#8b786f" stroke="#ff1a1a" stroke-width="1.25" stroke-linejoin="round"/><path d="M494.2 537.0 L500.2 524.9 L505.3 523.9 L506.3 538.0 L501.2 543.0 L495.2 540.0Z" fill="#8b786f" stroke="#ff1a1a" stroke-width="1.25" stroke-linejoin="round"/><path d="M616.8 491.7 L621.8 486.7 L630.9 485.7 L631.9 489.7 L624.8 495.8 L618.8 494.7Z" fill="#c2b4c0" stroke="#ffff10" stroke-width="1.25" stroke-linejoin="round"/><path d="M639.9 466.6 L642.9 461.6 L644.9 462.6 L644.9 471.6 L640.9 471.6Z" fill="#c2b4c0" stroke="#ffff10" stroke-width="1.25" stroke-linejoin="round"/><path d="M619.8 549.0 L622.8 543.0 L628.8 542.0 L631.9 549.0Z" fill="#8b786f" stroke="#ff1a1a" stroke-width="1.25" stroke-linejoin="round"/><path d="M465.1 538.0 L468.1 539.0 L467.1 542.0Z" fill="#00f4fc" stroke="#00ffff" stroke-width="0.8"/><circle cx="482.1" cy="342.0" r="1.1" fill="#00e0e8"/><circle cx="454.0" cy="486.7" r="1.1" fill="#00e0e8"/><path d="M139.5 539.0 L144.5 532.0 L156.6 532.0 L153.6 539.0 L142.5 542.0Z" fill="#c2b4c0" stroke="#ffff10" stroke-width="1.25" stroke-linejoin="round"/><path d="M144.5 569.2 L148.6 563.1 L153.6 565.2 L152.6 572.2 L147.5 575.2Z" fill="#c2b4c0" stroke="#ffff10" stroke-width="1.25" stroke-linejoin="round"/><path d="M154.6 575.2 L158.6 570.2 L160.6 572.2 L159.6 580.2 L156.6 579.2Z" fill="#8b786f" stroke="#ff1a1a" stroke-width="1.25" stroke-linejoin="round"/><path d="M157.6 589.3 L160.6 585.3 L166.6 587.3 L168.7 592.3 L165.6 595.3 L159.6 593.3Z" fill="#c2b4c0" stroke="#ffff10" stroke-width="1.25" stroke-linejoin="round"/><path d="M175.7 596.3 L181.7 594.3 L187.7 595.3 L181.7 597.3 L176.7 597.3Z" fill="#00f4fc" stroke="#00ffff" stroke-width="0.8"/><path d="M229.9 580.2 L233.0 577.2 L238.0 582.2 L243.0 585.3 L243.0 588.3 L236.0 587.3Z" fill="#c2b4c0" stroke="#ffff10" stroke-width="1.25" stroke-linejoin="round"/><path d="M236.0 603.3 L241.0 598.3 L243.0 598.3 L243.0 607.4Z" fill="#4a3d4c" stroke="#8c20a0" stroke-width="1.25" stroke-linejoin="round"/><path d="M198.8 617.4 L202.8 612.4 L205.8 614.4 L201.8 619.4Z" fill="#00f4fc" stroke="#00ffff" stroke-width="0.8"/><path d="M159.6 620.4 L163.6 618.4 L166.6 623.4 L165.6 632.5 L161.6 631.5Z" fill="#8b786f" stroke="#ff1a1a" stroke-width="1.25" stroke-linejoin="round"/><path d="M62.1 620.4 L64.1 617.4 L68.2 618.4 L70.2 622.4 L65.2 624.4Z" fill="#c2b4c0" stroke="#ffff10" stroke-width="1.25" stroke-linejoin="round"/><path d="M106.4 643.5 L115.4 648.6 L120.4 656.6 L112.4 659.6 L109.4 656.6Z" fill="#c2b4c0" stroke="#ffff10" stroke-width="1.25" stroke-linejoin="round"/><path d="M127.5 652.6 L133.5 648.6 L140.5 644.5 L146.5 651.6 L140.5 657.6 L130.5 655.6Z" fill="#c2b4c0" stroke="#ffff10" stroke-width="1.25" stroke-linejoin="round"/><path d="M104.3 666.6 L107.4 664.6 L113.4 669.7 L111.4 672.7 L106.4 670.7Z" fill="#c2b4c0" stroke="#ffff10" stroke-width="1.25" stroke-linejoin="round"/><path d="M32.0 672.7 L37.0 671.7 L57.1 672.7 L65.2 674.7 L79.2 690.8 L59.1 690.8 L45.1 684.7 L32.0 676.7Z" fill="#c2b4c0" stroke="#ffff10" stroke-width="1.25" stroke-linejoin="round"/><path d="M86.3 681.7 L91.3 677.7 L94.3 679.7 L94.3 684.7 L90.3 685.7Z" fill="#8b786f" stroke="#ff1a1a" stroke-width="1.25" stroke-linejoin="round"/><path d="M173.7 699.8 L176.7 695.8 L181.7 695.8 L184.7 701.8 L180.7 703.8 L174.7 702.8Z" fill="#c2b4c0" stroke="#ffff10" stroke-width="1.25" stroke-linejoin="round"/><path d="M185.7 706.8 L189.8 703.8 L191.8 706.8 L187.7 708.8Z" fill="#8b786f" stroke="#ff1a1a" stroke-width="1.25" stroke-linejoin="round"/><path d="M203.8 701.8 L206.8 696.8 L210.9 700.8 L207.8 704.8Z" fill="#b4aa9c" stroke="#20b8b8" stroke-width="1.25" stroke-linejoin="round"/><path d="M231.0 704.8 L235.0 694.8 L243.0 692.8 L243.0 714.9 L236.0 715.9 L232.0 712.9Z" fill="#b4aa9c" stroke="#20b8b8" stroke-width="1.25" stroke-linejoin="round"/><path d="M42.0 721.9 L44.1 715.9 L47.1 715.9 L52.1 725.9 L49.1 732.0 L44.1 731.0Z" fill="#8b786f" stroke="#ff1a1a" stroke-width="1.25" stroke-linejoin="round"/><path d="M199.8 721.9 L204.8 720.9 L206.8 725.9 L203.8 727.9 L200.8 726.9Z" fill="#8b786f" stroke="#ff1a1a" stroke-width="1.25" stroke-linejoin="round"/><path d="M79.2 694.8 L81.2 693.8 L81.2 696.8Z" fill="#00f4fc" stroke="#00ffff" stroke-width="0.8"/><circle cx="222.9" cy="553.1" r="1.1" fill="#00e0e8"/><circle cx="242.0" cy="561.1" r="1.1" fill="#00e0e8"/><circle cx="114.4" cy="581.2" r="1.1" fill="#00e0e8"/><circle cx="117.4" cy="583.2" r="1.1" fill="#00e0e8"/><circle cx="76.2" cy="607.4" r="1.1" fill="#00e0e8"/><circle cx="173.7" cy="664.6" r="1.1" fill="#00e0e8"/><circle cx="183.7" cy="609.4" r="1.1" fill="#00e0e8"/><path d="M252.0 537.0 L255.1 535.0 L258.1 538.0 L255.1 540.0Z" fill="#c2b4c0" stroke="#ffff10" stroke-width="1.25" stroke-linejoin="round"/><path d="M269.1 560.1 L273.1 551.1 L282.2 552.1 L280.2 557.1 L271.1 561.1Z" fill="#8b786f" stroke="#ff1a1a" stroke-width="1.25" stroke-linejoin="round"/><path d="M301.3 565.2 L305.3 564.2 L311.3 566.2 L307.3 568.2 L303.3 567.8Z" fill="#00f4fc" stroke="#00ffff" stroke-width="0.8"/><path d="M277.2 607.4 L283.2 603.3 L286.2 610.4 L285.2 613.4 L280.2 613.4Z" fill="#c2b4c0" stroke="#ffff10" stroke-width="1.25" stroke-linejoin="round"/><path d="M435.9 589.3 L441.0 588.3 L442.0 594.3 L438.9 594.3Z" fill="#c2b4c0" stroke="#ffff10" stroke-width="1.25" stroke-linejoin="round"/><path d="M346.5 658.6 L351.5 656.6 L356.5 657.6 L357.5 661.6 L349.5 661.6Z" fill="#c2b4c0" stroke="#ffff10" stroke-width="1.25" stroke-linejoin="round"/><path d="M376.6 668.7 L381.7 664.6 L387.7 665.6 L386.7 672.7 L380.7 672.7Z" fill="#8b786f" stroke="#ff1a1a" stroke-width="1.25" stroke-linejoin="round"/><path d="M384.7 677.7 L390.7 676.7 L391.7 679.7 L389.7 684.7 L386.7 684.7Z" fill="#c2b4c0" stroke="#ffff10" stroke-width="1.25" stroke-linejoin="round"/><path d="M242.0 692.8 L251.0 688.8 L255.1 692.8 L247.0 701.8 L242.0 708.8Z" fill="#b4aa9c" stroke="#20b8b8" stroke-width="1.25" stroke-linejoin="round"/><path d="M270.1 692.8 L276.2 692.8 L281.2 695.8 L281.2 699.8 L275.2 698.8Z" fill="#c2b4c0" stroke="#ffff10" stroke-width="1.25" stroke-linejoin="round"/><path d="M337.5 697.8 L343.5 693.8 L347.5 695.8 L349.5 703.8 L344.5 703.8Z" fill="#c2b4c0" stroke="#ffff10" stroke-width="1.25" stroke-linejoin="round"/><path d="M362.6 704.8 L367.6 699.8 L373.6 698.8 L373.6 703.8 L368.6 709.9 L363.6 710.9Z" fill="#c2b4c0" stroke="#ffff10" stroke-width="1.25" stroke-linejoin="round"/><path d="M311.3 714.9 L318.4 713.9 L327.4 714.9 L332.4 713.9 L325.4 719.9 L315.3 718.9Z" fill="#8b786f" stroke="#ff1a1a" stroke-width="1.25" stroke-linejoin="round"/><path d="M314.3 732.0 L319.4 727.9 L324.4 727.9 L325.4 732.0Z" fill="#c2b4c0" stroke="#ffff10" stroke-width="1.25" stroke-linejoin="round"/><path d="M494.2 537.0 L499.2 532.0 L506.3 532.0 L504.2 539.0 L501.2 544.1 L495.2 541.0Z" fill="#8b786f" stroke="#ff1a1a" stroke-width="1.25" stroke-linejoin="round"/><path d="M508.3 532.0 L523.3 532.0 L519.3 534.0 L510.3 535.0Z" fill="#8b786f" stroke="#ff1a1a" stroke-width="1.25" stroke-linejoin="round"/><path d="M619.8 547.1 L623.8 542.0 L629.8 543.1 L631.9 549.1 L628.8 554.1 L622.8 553.1Z" fill="#8b786f" stroke="#ff1a1a" stroke-width="1.25" stroke-linejoin="round"/><circle cx="553.5" cy="562.1" r="17.1" fill="#070507"/><circle cx="494.2" cy="721.9" r="15.1" fill="#070507"/><path d="M497.2 587.3 L500.2 585.3 L503.2 590.3 L501.2 592.3Z" fill="#c2b4c0" stroke="#ffff10" stroke-width="1.25" stroke-linejoin="round"/><path d="M516.3 592.3 L521.3 589.3 L526.4 590.3 L525.3 595.3 L518.3 596.3Z" fill="#8b786f" stroke="#ff1a1a" stroke-width="1.25" stroke-linejoin="round"/><path d="M506.3 605.4 L512.3 600.3 L513.3 603.3 L512.3 609.4 L508.3 609.4Z" fill="#8b786f" stroke="#ff1a1a" stroke-width="1.25" stroke-linejoin="round"/><path d="M528.4 610.4 L531.4 606.4 L533.4 608.4 L532.4 613.4Z" fill="#c2b4c0" stroke="#ffff10" stroke-width="1.25" stroke-linejoin="round"/><path d="M455.0 626.5 L458.0 622.4 L463.0 623.4 L463.0 627.5 L459.0 629.5Z" fill="#c2b4c0" stroke="#ffff10" stroke-width="1.25" stroke-linejoin="round"/><path d="M466.1 624.4 L474.1 615.4 L484.1 615.4 L482.1 620.4 L475.1 625.4 L467.1 628.5Z" fill="#c2b4c0" stroke="#ffff10" stroke-width="1.25" stroke-linejoin="round"/><path d="M486.2 626.5 L489.2 620.4 L493.2 625.4 L494.2 630.5 L490.2 631.5Z" fill="#8b786f" stroke="#ff1a1a" stroke-width="1.25" stroke-linejoin="round"/><path d="M482.1 652.6 L487.2 652.6 L493.2 654.6 L492.2 657.6 L484.1 655.6Z" fill="#8b786f" stroke="#ff1a1a" stroke-width="1.25" stroke-linejoin="round"/><path d="M562.5 647.6 L565.5 645.5 L573.6 652.6 L572.6 654.6 L565.5 652.6Z" fill="#c2b4c0" stroke="#ffff10" stroke-width="1.25" stroke-linejoin="round"/><path d="M618.8 609.4 L624.8 603.3 L628.8 596.3 L630.9 606.4 L634.9 610.4 L633.9 620.4 L625.8 622.4 L619.8 616.4Z" fill="#8b786f" stroke="#ff1a1a" stroke-width="1.25" stroke-linejoin="round"/><path d="M622.8 611.4 L627.8 609.4 L630.9 616.4 L625.8 617.4Z" fill="#00f4fc" stroke="#00ffff" stroke-width="0.8"/><path d="M550.5 731.0 L553.5 724.9 L557.5 725.9 L558.5 732.0Z" fill="#8b786f" stroke="#ff1a1a" stroke-width="1.25" stroke-linejoin="round"/><circle cx="466.1" cy="540.0" r="1.1" fill="#00e0e8"/><circle cx="463.0" cy="562.1" r="1.1" fill="#00e0e8"/><circle cx="470.1" cy="584.3" r="1.1" fill="#00e0e8"/><circle cx="630.9" cy="625.4" r="1.1" fill="#00e0e8"/><circle cx="454.0" cy="652.6" r="1.1" fill="#00e0e8"/><path d="M184.5 222.9 L191.4 213.7 L203.7 201.4 L212.9 202.2 L223.6 206.8 L233.6 207.6 L240.4 211.4 L245.0 216.8 L244.3 222.9 L235.9 227.5 L227.4 232.1 L212.9 244.3 L207.5 248.9 L196.0 245.1 L190.7 246.6 L189.9 237.4Z" fill="#c2b4c0" stroke="#ffff10" stroke-width="1.25" stroke-linejoin="round"/><path d="M243.5 202.2 L246.6 194.5 L251.2 187.7 L256.5 193.0 L269.5 199.1 L268.8 202.2 L255.8 198.4 L250.4 204.5Z" fill="#c2b4c0" stroke="#ffff10" stroke-width="1.25" stroke-linejoin="round"/><path d="M248.1 212.9 L258.1 212.9 L255.0 202.2 L269.5 204.5 L272.6 210.6 L270.3 227.5 L265.0 228.2 L258.8 222.9 L259.6 225.9 L251.2 222.9Z" fill="#c2b4c0" stroke="#ffff10" stroke-width="1.25" stroke-linejoin="round"/><path d="M245.0 238.2 L249.6 233.6 L257.3 238.2 L255.8 239.7 L250.4 235.9 L246.6 240.5Z" fill="#4a3d4c" stroke="#8c20a0" stroke-width="1.25" stroke-linejoin="round"/><path d="M225.9 404.3 L234.0 400.3 L239.0 397.3 L243.0 398.3 L248.0 401.3 L252.0 405.3 L248.0 410.3 L236.0 410.3Z" fill="#8b786f" stroke="#ff1a1a" stroke-width="1.25" stroke-linejoin="round"/><path d="M239.0 507.3 L239.6 500.1 L247.9 496.5 L256.3 494.1 L262.3 491.7 L268.3 487.0 L271.8 477.4 L269.5 473.8 L270.6 461.8 L282.6 461.8 L292.2 458.3 L298.1 449.9 L304.1 443.9 L316.1 435.5 L320.9 429.6 L330.0 427.5 L338.0 422.2 L347.4 410.1 L354.1 405.4 L374.2 404.7 L380.9 403.4 L394.3 399.4 L405.0 397.4 L410.4 400.7 L411.7 407.4 L417.1 410.1 L422.4 404.7 L429.1 400.7 L433.2 410.1 L429.1 418.1 L422.4 418.1 L418.4 426.2 L405.0 432.9 L401.0 439.6 L404.4 447.6 L402.3 459.7 L406.4 465.0 L405.0 473.1 L393.0 477.1 L382.3 483.8 L374.2 491.8 L367.5 501.2 L359.5 509.2 L347.4 515.9 L335.4 524.0 L325.6 528.8 L313.7 532.4 L297.0 539.6 L289.8 540.8 L275.4 536.0 L263.5 531.2 L255.1 521.6 L247.9 514.5Z" fill="url(#spk)" stroke="#00ffff" stroke-width="1.2"/><circle cx="283.5" cy="440.0" r="2.2" fill="#00ffff"/><circle cx="303.5" cy="427.0" r="2.6" fill="#00ffff"/><circle cx="258.0" cy="472.0" r="1.4" fill="#00ffff"/><circle cx="250.0" cy="486.0" r="1.3" fill="#00ffff"/><circle cx="262.0" cy="466.0" r="1.2" fill="#00ffff"/><circle cx="429.0" cy="403.4" r="3.3" fill="#00ffff"/><circle cx="435.2" cy="405.4" r="1.6" fill="#00ffff"/><circle cx="266.0" cy="457.0" r="1.2" fill="#00ffff"/><circle cx="275.0" cy="497.0" r="1.3" fill="#4a2a30" opacity="0.8"/><circle cx="318.5" cy="506.5" r="1.4" fill="#4a2a30" opacity="0.8"/><circle cx="289.0" cy="516.0" r="1.0" fill="#4a2a30" opacity="0.8"/><circle cx="276.0" cy="483.0" r="1.0" fill="#4a2a30" opacity="0.8"/><circle cx="318.5" cy="506.5" r="1.6" fill="#0a0608"/><path d="M272.0 535.0 Q310.0 450.0 362.0 408.0" fill="none" stroke="#5a6a70" stroke-width="0.7" opacity="0.8"/><path d="M320.0 530.0 L325.0 462.0" fill="none" stroke="#5a6a70" stroke-width="0.6" opacity="0.7"/><rect x="345.5" y="634.5" width="33.2" height="11" fill="#fff"/><path d="M284.2 630.5H439M284.2 628.5V632.5M439 628.5V632.5" stroke="#ee1010" stroke-width="1.5"/></g></svg><div class="a t" style="left:346.20px;top:635.90px;font-size:8.5px;line-height:8.5px;color:#000;font-weight:bold;transform:scaleX(1.069);transform-origin:0 0">400 µm</div><div class="a" style="left:644.8px;top:129px;width:1.6px;height:603px;background:#5c5c5c"></div><div class="a" style="left:3px;top:732px;width:643px;height:17px;background:#f0f0f0"></div><div class="a" style="left:3px;top:732px;width:643px;height:1px;background:#fdfdfd"></div><div class="a" style="left:8.6px;top:734px;width:74.4px;height:13.5px;background:#ececec;border-left:1px solid #b8b8b8;border-top:1px solid #c8c8c8;border-right:1px solid #fff;border-bottom:1px solid #fff"></div><div class="a" style="left:90px;top:734px;width:106px;height:13.5px;background:#ececec;border-left:1px solid #b8b8b8;border-top:1px solid #c8c8c8;border-right:1px solid #fff;border-bottom:1px solid #fff"></div><div class="a" style="left:203px;top:734px;width:64px;height:13.5px;background:#ececec;border-left:1px solid #b8b8b8;border-top:1px solid #c8c8c8;border-right:1px solid #fff;border-bottom:1px solid #fff"></div><div class="a" style="left:273.5px;top:734px;width:63.5px;height:13.5px;background:#ececec;border-left:1px solid #b8b8b8;border-top:1px solid #c8c8c8;border-right:1px solid #fff;border-bottom:1px solid #fff"></div><div class="a" style="left:340px;top:734px;width:39px;height:13.5px;background:#ececec;border-left:1px solid #b8b8b8;border-top:1px solid #c8c8c8;border-right:1px solid #fff;border-bottom:1px solid #fff"></div><div class="a" style="left:385.5px;top:734px;width:255px;height:13.5px;background:#ececec;border-left:1px solid #b8b8b8;border-top:1px solid #c8c8c8;border-right:1px solid #fff;border-bottom:1px solid #fff"></div><div class="a t" style="left:38.00px;top:735.96px;font-size:9px;line-height:9px;color:#222;transform:scaleX(0.897);transform-origin:0 0">799x787</div><div class="a t" style="left:109.00px;top:735.96px;font-size:9px;line-height:9px;color:#222;transform:scaleX(0.917);transform-origin:0 0">0.4000000000 µm/pixel</div><div class="a t" style="left:237.00px;top:735.96px;font-size:9px;line-height:9px;color:#222;transform:scaleX(0.888);transform-origin:0 0">microns</div><div class="a t" style="left:317.00px;top:735.96px;font-size:9px;line-height:9px;color:#222;transform:scaleX(0.940);transform-origin:0 0">load</div><div class="a t" style="left:360.50px;top:735.96px;font-size:9px;line-height:9px;color:#222;transform:scaleX(1.058);transform-origin:0 0">x1/5</div><div class="a t" style="left:387.80px;top:735.96px;font-size:9px;line-height:9px;color:#222;transform:scaleX(0.928);transform-origin:0 0">IHS: 026 271 023</div><svg class="a" style="left:12px;top:735px;" width="11" height="12" viewBox="0 0 11 12"><rect x="3" y="5" width="7" height="6" fill="none" stroke="#333"/><path d="M5 1H10M6 0L5 1L6 2M9 0L10 1L9 2M1 5V11" stroke="#333" stroke-width="0.8" fill="none"/></svg><svg class="a" style="left:92px;top:734px;" width="13" height="13" viewBox="0 0 13 13"><path d="M1 12V2H4V8H6V2H9V8H12V12Z" fill="none" stroke="#333" stroke-width="1.2"/></svg><svg class="a" style="left:206px;top:737px;" width="12" height="7" viewBox="0 0 12 7"><rect x="0.5" y="0.5" width="11" height="6" fill="none" stroke="#333"/><path d="M3 1V3M6 1V3M9 1V3" stroke="#333"/></svg><svg class="a" style="left:276px;top:735px;" width="12" height="12" viewBox="0 0 12 12"><path d="M2 10L9 2L11 4L4 11Z" fill="none" stroke="#333" stroke-width="1.2"/></svg><svg class="a" style="left:342px;top:735px;" width="12" height="12" viewBox="0 0 12 12"><circle cx="5" cy="5" r="3.5" fill="none" stroke="#333" stroke-width="1.3"/><path d="M7.5 7.5L11 11" stroke="#333" stroke-width="1.8"/></svg><div class="a" style="left:653.5px;top:74px;width:617px;height:674px;background:#f0f0f0"></div><div class="a" style="left:653.5px;top:74px;width:617px;height:23px;background:#fff"></div><div class="a" style="left:661px;top:81px;width:9px;height:8px;background:#c8c8c8"></div><div class="a" style="left:663px;top:84px;width:5px;height:2px;background:#333"></div><div class="a t" style="left:674.50px;top:81.72px;font-size:9.5px;line-height:9.5px;color:#9a9a9a;transform:scaleX(0.913);transform-origin:0 0">Viewer 1: Gold_scale.tif</div><div class="a" style="left:1212.3px;top:81px;width:9px;height:9px;border:1px solid #c8c8c8"></div><svg class="a" style="left:1247.8px;top:80.5px;" width="10" height="10" viewBox="0 0 10 10"><path d="M0.5 0.5L9.5 9.5M9.5 0.5L0.5 9.5" stroke="#8a8a8a" stroke-width="1"/></svg><div class="a" style="left:653.5px;top:127.5px;width:618px;height:1.5px;background:#d8d8d8"></div><div class="a" style="left:656.5px;top:100px;width:1px;height:1px;background:#a09090"></div><div class="a" style="left:656.5px;top:103px;width:1px;height:1px;background:#a09090"></div><div class="a" style="left:656.5px;top:106px;width:1px;height:1px;background:#a09090"></div><div class="a" style="left:656.5px;top:109px;width:1px;height:1px;background:#a09090"></div><div class="a" style="left:656.5px;top:112px;width:1px;height:1px;background:#a09090"></div><div class="a" style="left:656.5px;top:115px;width:1px;height:1px;background:#a09090"></div><div class="a" style="left:656.5px;top:118px;width:1px;height:1px;background:#a09090"></div><div class="a" style="left:656.5px;top:121px;width:1px;height:1px;background:#a09090"></div><svg class="a" style="left:666px;top:105px;" width="17" height="17" viewBox="0 0 17 17"><path d="M1 2Q1 1 2 1H15Q16 1 16 2V15Q16 16 15 16H2Q1 16 1 15Z" fill="#1e6ad0"/><rect x="4" y="1.5" width="9" height="6" fill="#f0f0f0"/><rect x="5" y="10" width="8" height="6" fill="#d8d8d8"/><rect x="7" y="11" width="2" height="4" fill="#1e6ad0"/></svg><div class="a" style="left:689.8px;top:101px;width:1px;height:23px;background:#c4c4c4"></div><svg class="a" style="left:697.5px;top:105px;" width="17" height="17" viewBox="0 0 17 17"><rect x="1" y="3" width="10" height="13" fill="#e8ecf4" stroke="#8a98b8"/><rect x="6" y="1" width="10" height="13" fill="#f4f6fa" stroke="#8a98b8"/><path d="M8 5H14M8 8H14M8 11H14" stroke="#8a98b8"/></svg><div class="a" style="left:721px;top:101px;width:1px;height:23px;background:#c4c4c4"></div><svg class="a" style="left:728px;top:105px;" width="17" height="17" viewBox="0 0 17 17"><path d="M9.5 9.5L15.5 15.5" stroke="#e08a30" stroke-width="3" stroke-linecap="round"/><circle cx="6.5" cy="6.5" r="5.5" fill="#d6ecfa" stroke="#6a98c0" stroke-width="1.2"/><path d="M6.5 4V9M4 6.5H9" stroke="#22aa22" stroke-width="2.2"/></svg><svg class="a" style="left:755.8px;top:105px;" width="17" height="17" viewBox="0 0 17 17"><path d="M9.5 9.5L15.5 15.5" stroke="#e08a30" stroke-width="3" stroke-linecap="round"/><circle cx="6.5" cy="6.5" r="5.5" fill="#d6ecfa" stroke="#6a98c0" stroke-width="1.2"/><path d="M4 6.5H9" stroke="#d02020" stroke-width="2.2"/></svg><svg class="a" style="left:782px;top:105px;" width="17" height="17" viewBox="0 0 17 17"><path d="M9.5 9.5L15.5 15.5" stroke="#e08a30" stroke-width="3" stroke-linecap="round"/><circle cx="6.5" cy="6.5" r="5.5" fill="#d6ecfa" stroke="#6a98c0" stroke-width="1.2"/><path d="M1.5 10L5 13.5M5 10L1.5 13.5" stroke="#e03020" stroke-width="1.5"/></svg><svg class="a" style="left:809px;top:105px;" width="17" height="17" viewBox="0 0 17 17"><rect x="1.5" y="1.5" width="14" height="14" fill="none" stroke="#2050c0" stroke-width="1.3"/><path d="M3.5 8.5L6.5 5.5V11.5ZM13.5 8.5L10.5 5.5V11.5Z" fill="#30c030"/><path d="M6 8.5H11" stroke="#30c030" stroke-width="2"/></svg><div class="a" style="left:833px;top:101px;width:1px;height:23px;background:#c4c4c4"></div><svg class="a" style="left:839px;top:105px;" width="19" height="16" viewBox="0 0 19 16"><rect x="0.5" y="0.5" width="10" height="15" fill="#f4f8ff" stroke="#5aaaf0"/><rect x="11.5" y="0.5" width="7" height="7" fill="#f4f8ff" stroke="#5aaaf0"/><rect x="11.5" y="8.5" width="7" height="7" fill="#f4f8ff" stroke="#5aaaf0"/></svg><svg class="a" style="left:867.8px;top:104px;" width="16" height="18" viewBox="0 0 16 18"><rect x="0.5" y="0.5" width="11" height="11" rx="2" fill="#5aaaf0"/><rect x="2.5" y="3.5" width="11" height="11" rx="2" fill="#8cc8f8" stroke="#4a9ae8"/><rect x="4.5" y="6.5" width="11" height="11" rx="2" fill="#fff" stroke="#4a9ae8"/></svg><div class="a" style="left:891.7px;top:101px;width:1px;height:23px;background:#c4c4c4"></div><svg class="a" style="left:898px;top:105px;" width="17" height="17" viewBox="0 0 17 17"><rect x="0.5" y="0.5" width="16" height="16" fill="#fff" stroke="#999"/><path d="M1 6H16M1 11H16M6 1V16M11 1V16" stroke="#ccc" stroke-width="0.6"/><path d="M1 16L1 12L5 9L9 12L16 5V16Z" fill="#3a80e0"/><path d="M1 12L5 9L9 12L16 5" stroke="#30b030" stroke-width="2" fill="none"/></svg><svg class="a" style="left:924px;top:103px;" width="20" height="22" viewBox="0 0 20 22"><text x="1" y="20" font-family="Liberation Serif" font-size="17" fill="#6a6a6a">a</text><text x="8.5" y="17" font-family="Liberation Serif" font-style="italic" font-size="15" fill="#6a6a6a">A</text></svg><svg class="a" style="left:952px;top:106px;" width="16" height="15" viewBox="0 0 16 15"><path d="M1 1H15M1 5H15M1 1V5M15 1V5" stroke="#c02020" stroke-width="1.5" fill="none"/><rect x="3" y="8" width="10" height="6" fill="none" stroke="#3a6ad0" stroke-width="1.3"/></svg><svg class="a" style="left:979px;top:105px;" width="17" height="17" viewBox="0 0 17 17"><rect x="0" y="0" width="5" height="5" fill="#777"/><rect x="6" y="0" width="5" height="5" fill="#999"/><rect x="12" y="0" width="5" height="5" fill="#bbb"/><rect x="0" y="6" width="5" height="5" fill="#bbb"/><rect x="6" y="6" width="5" height="5" fill="#ddd"/><rect x="12" y="6" width="5" height="5" fill="#888"/><rect x="0" y="12" width="5" height="5" fill="#aaa"/><rect x="6" y="12" width="5" height="5" fill="#999"/><rect x="12" y="12" width="5" height="5" fill="#666"/></svg><div class="a" style="left:1002.3px;top:101px;width:1px;height:23px;background:#c4c4c4"></div><svg class="a" style="left:1010px;top:105px;" width="17" height="17" viewBox="0 0 17 17"><path d="M2 3L15 14M15 3L2 14" stroke="#e83a20" stroke-width="4.5" stroke-linecap="round"/></svg><svg class="a" style="left:0;top:0" width="1949" height="1045"><rect x="656" y="129" width="612.5" height="602" fill="#181119"/><g clip-path="url(#c2)"><path d="M855.0 213.4 L858.0 222.0 L853.5 224.0 L847.5 217.7Z" fill="#0c070b" opacity="0.40"/><path d="M1007.9 698.0 L1004.1 702.5 L999.5 703.3 L998.1 701.6 L995.4 696.0 L1001.6 693.8Z" fill="#2a2029" opacity="0.29"/><path d="M988.1 165.9 L991.0 163.1 L993.4 165.6 L992.1 168.3Z" fill="#0c070b" opacity="0.40"/><path d="M837.8 428.8 L834.5 427.2 L836.9 423.7 L842.2 423.0 L843.2 429.2Z" fill="#2a2029" opacity="0.28"/><path d="M1086.7 486.8 L1080.3 489.8 L1076.1 486.5 L1078.5 481.4 L1086.1 482.1Z" fill="#2a2029" opacity="0.29"/><path d="M1235.7 344.5 L1232.5 347.0 L1227.1 342.2 L1227.9 338.0 L1238.1 339.0Z" fill="#2a2029" opacity="0.27"/><path d="M915.4 347.8 L904.7 349.2 L906.5 339.6 L914.2 339.0Z" fill="#2a2029" opacity="0.34"/><path d="M1237.1 540.3 L1244.3 540.0 L1245.2 544.7 L1242.6 547.7 L1237.1 548.3 L1232.1 546.3Z" fill="#2a2029" opacity="0.23"/><path d="M1027.2 191.4 L1021.0 194.5 L1019.7 192.3 L1018.8 187.6 L1022.2 183.8 L1029.6 189.7Z" fill="#2a2029" opacity="0.22"/><path d="M722.8 337.1 L717.0 336.8 L715.8 334.6 L715.8 330.9 L721.8 332.0 L722.1 334.0Z" fill="#0c070b" opacity="0.40"/><path d="M1123.2 443.3 L1132.5 445.6 L1135.4 449.3 L1127.5 453.9 L1120.5 451.9Z" fill="#2a2029" opacity="0.40"/><path d="M936.6 244.7 L943.4 240.3 L947.0 240.9 L950.1 245.0 L944.4 251.2Z" fill="#2a2029" opacity="0.32"/><path d="M1058.2 611.8 L1055.7 613.0 L1052.7 611.0 L1052.3 609.0 L1056.7 608.2 L1057.7 610.0Z" fill="#0c070b" opacity="0.40"/><path d="M1264.3 138.5 L1270.1 146.9 L1266.3 149.4 L1261.1 147.2 L1260.3 139.9Z" fill="#2a2029" opacity="0.43"/><path d="M929.3 653.3 L918.9 658.8 L912.1 652.1 L919.9 646.5Z" fill="#2a2029" opacity="0.37"/><path d="M1161.6 442.9 L1149.6 445.7 L1145.6 440.6 L1149.7 437.2 L1157.0 435.3 L1162.2 435.8Z" fill="#2a2029" opacity="0.32"/><path d="M1130.2 662.5 L1128.2 660.1 L1132.4 658.8 L1133.8 661.1Z" fill="#2a2029" opacity="0.37"/><path d="M932.7 443.9 L937.8 447.3 L932.6 454.9 L929.5 451.5Z" fill="#2a2029" opacity="0.22"/><path d="M807.9 167.1 L805.8 175.7 L794.9 174.5 L796.5 167.6Z" fill="#2a2029" opacity="0.32"/><path d="M1264.9 629.7 L1262.9 631.7 L1259.7 631.6 L1258.6 628.4 L1262.4 627.3Z" fill="#0c070b" opacity="0.40"/><path d="M1250.3 193.3 L1249.2 202.9 L1238.0 197.9 L1241.4 187.7Z" fill="#2a2029" opacity="0.26"/><path d="M745.2 687.8 L740.0 684.0 L744.6 679.8 L748.2 678.2 L752.4 682.4 L750.5 684.9Z" fill="#0c070b" opacity="0.40"/><path d="M1269.2 384.0 L1264.7 385.1 L1258.9 382.9 L1258.7 376.3 L1268.0 374.8 L1271.0 378.7Z" fill="#2a2029" opacity="0.20"/><path d="M815.2 136.6 L814.4 142.1 L805.4 142.8 L800.3 138.0 L807.5 132.4 L810.2 132.6Z" fill="#0c070b" opacity="0.40"/><path d="M1197.9 567.8 L1197.0 570.5 L1194.2 568.8 L1193.4 566.1 L1196.6 564.2Z" fill="#2a2029" opacity="0.37"/><path d="M681.4 243.6 L680.3 239.4 L685.2 237.2 L686.4 239.7Z" fill="#2a2029" opacity="0.32"/><path d="M966.6 251.7 L960.6 252.6 L958.1 247.2 L965.4 243.5Z" fill="#2a2029" opacity="0.24"/><path d="M1201.4 596.6 L1206.8 599.3 L1206.2 605.7 L1199.8 605.1 L1196.4 599.3Z" fill="#2a2029" opacity="0.39"/><path d="M1002.1 616.6 L1004.2 616.7 L1005.0 617.1 L1005.5 618.7 L1003.3 620.1 L1001.6 619.0Z" fill="#2a2029" opacity="0.32"/><path d="M662.2 604.1 L664.0 612.2 L656.9 616.1 L652.4 614.2 L650.1 607.8 L656.7 601.9Z" fill="#0c070b" opacity="0.40"/><path d="M1211.5 300.4 L1213.7 298.9 L1215.8 300.6 L1214.8 302.0 L1212.7 303.5 L1210.3 301.3Z" fill="#0c070b" opacity="0.40"/><path d="M976.8 408.2 L974.1 412.1 L968.3 408.8 L971.8 402.5Z" fill="#2a2029" opacity="0.30"/><path d="M1219.1 691.4 L1215.1 691.3 L1214.8 686.9 L1218.9 688.2Z" fill="#2a2029" opacity="0.32"/><path d="M666.4 131.9 L667.7 128.4 L672.2 126.3 L676.4 129.8 L670.9 133.7Z" fill="#0c070b" opacity="0.40"/><path d="M1111.3 280.8 L1109.7 282.4 L1107.8 282.0 L1107.4 279.3 L1110.2 279.3Z" fill="#0c070b" opacity="0.40"/><path d="M973.3 240.6 L972.7 246.2 L967.3 246.7 L963.8 244.4 L966.3 238.5Z" fill="#2a2029" opacity="0.27"/><path d="M684.0 688.2 L683.9 684.7 L686.8 684.9 L689.4 687.1 L687.7 689.2Z" fill="#0c070b" opacity="0.40"/><path d="M968.0 616.6 L966.8 618.9 L962.2 621.8 L957.6 618.7 L959.5 613.1Z" fill="#2a2029" opacity="0.39"/><path d="M906.8 382.0 L903.4 378.1 L906.6 373.1 L914.6 374.4 L915.9 378.2Z" fill="#2a2029" opacity="0.36"/><path d="M927.0 321.1 L911.5 320.2 L916.4 313.0 L929.3 312.8Z" fill="#2a2029" opacity="0.32"/><path d="M926.1 599.1 L932.0 597.1 L934.2 601.2 L930.3 602.3Z" fill="#2a2029" opacity="0.26"/><path d="M1216.2 514.8 L1221.6 515.9 L1223.5 519.9 L1217.1 519.7Z" fill="#2a2029" opacity="0.20"/><path d="M983.5 725.8 L986.2 726.3 L988.7 731.1 L985.5 731.0 L980.6 730.1Z" fill="#2a2029" opacity="0.26"/><path d="M1063.8 683.2 L1066.7 685.0 L1066.7 689.1 L1061.5 687.8Z" fill="#0c070b" opacity="0.40"/><path d="M1124.0 239.4 L1128.8 244.1 L1128.3 247.8 L1119.6 248.7 L1119.7 244.6Z" fill="#0c070b" opacity="0.40"/><path d="M1253.5 215.7 L1250.5 214.4 L1250.8 212.4 L1254.4 212.2Z" fill="#2a2029" opacity="0.32"/><path d="M842.4 568.2 L840.5 562.2 L853.2 561.2 L853.3 568.1 L845.7 570.9Z" fill="#2a2029" opacity="0.22"/><path d="M1091.0 251.4 L1084.8 249.9 L1082.9 241.9 L1087.2 242.8 L1094.6 243.7Z" fill="#0c070b" opacity="0.40"/><path d="M1110.9 671.4 L1108.7 668.2 L1114.3 666.8 L1118.0 668.9 L1116.1 674.0Z" fill="#0c070b" opacity="0.40"/><path d="M1167.0 190.9 L1165.9 197.1 L1156.8 195.1 L1154.6 189.1 L1163.8 186.2Z" fill="#2a2029" opacity="0.28"/><path d="M845.7 346.3 L851.6 339.6 L859.3 346.6 L853.0 351.8Z" fill="#0c070b" opacity="0.40"/><path d="M696.7 504.2 L698.4 502.3 L703.7 502.9 L703.3 507.3 L699.0 506.6Z" fill="#2a2029" opacity="0.27"/><path d="M998.1 355.7 L998.1 346.7 L1007.1 350.5 L1006.2 356.9Z" fill="#2a2029" opacity="0.36"/><path d="M714.5 407.5 L717.8 406.4 L719.3 407.3 L718.8 410.2Z" fill="#2a2029" opacity="0.43"/><path d="M884.8 647.6 L889.8 650.0 L885.9 652.7 L881.6 652.6 L881.4 648.0Z" fill="#2a2029" opacity="0.43"/><path d="M1156.8 624.5 L1150.1 623.7 L1151.0 621.2 L1155.3 617.7 L1158.3 621.8Z" fill="#0c070b" opacity="0.40"/><path d="M1078.5 378.1 L1079.6 372.4 L1081.8 371.2 L1085.9 376.4 L1082.7 378.1Z" fill="#2a2029" opacity="0.31"/><path d="M753.4 195.2 L754.8 196.3 L752.2 199.4 L750.3 198.6 L749.0 196.0 L750.6 194.7Z" fill="#2a2029" opacity="0.43"/><path d="M719.6 427.3 L717.2 420.5 L725.9 417.6 L731.4 423.7Z" fill="#2a2029" opacity="0.42"/><path d="M1051.7 641.9 L1053.8 643.8 L1050.4 648.8 L1046.3 648.6 L1040.0 642.9 L1043.0 640.8Z" fill="#2a2029" opacity="0.21"/><path d="M1174.1 195.3 L1174.2 198.7 L1171.8 203.0 L1166.1 202.2 L1161.0 201.0 L1166.3 194.6Z" fill="#2a2029" opacity="0.40"/><path d="M1170.6 618.7 L1164.5 619.6 L1163.1 614.9 L1170.6 612.7Z" fill="#2a2029" opacity="0.33"/><path d="M694.3 431.1 L688.1 434.6 L683.2 432.5 L689.2 427.2Z" fill="#2a2029" opacity="0.37"/><path d="M1095.0 253.6 L1104.8 256.6 L1104.9 263.1 L1095.0 266.1 L1091.1 265.3 L1092.3 259.6Z" fill="#0c070b" opacity="0.40"/><path d="M756.1 696.6 L749.5 696.9 L746.6 690.5 L755.8 687.0 L759.7 693.1Z" fill="#2a2029" opacity="0.36"/><path d="M892.9 607.6 L897.7 606.5 L900.1 609.1 L898.0 611.6 L893.1 611.6Z" fill="#2a2029" opacity="0.37"/><path d="M846.5 130.8 L845.6 128.9 L848.0 127.0 L849.1 128.9Z" fill="#2a2029" opacity="0.28"/><path d="M971.0 448.7 L977.0 447.1 L980.1 451.0 L978.4 452.4 L970.9 452.9Z" fill="#2a2029" opacity="0.30"/><path d="M823.4 131.8 L823.7 137.3 L818.5 139.0 L815.5 138.2 L812.5 135.0 L814.2 128.8Z" fill="#0c070b" opacity="0.40"/><path d="M1031.8 526.9 L1027.2 525.8 L1028.0 523.2 L1031.3 522.1 L1035.0 525.1Z" fill="#2a2029" opacity="0.20"/><path d="M1167.4 573.6 L1174.3 572.8 L1179.1 575.4 L1174.6 582.8 L1171.8 580.3 L1166.8 577.2Z" fill="#2a2029" opacity="0.43"/><path d="M1256.5 309.0 L1242.9 311.7 L1244.5 304.7 L1256.0 302.8Z" fill="#2a2029" opacity="0.35"/><path d="M892.9 636.2 L893.9 642.0 L896.5 647.5 L884.5 649.7 L880.7 640.0 L884.7 635.2Z" fill="#0c070b" opacity="0.40"/><path d="M674.8 198.8 L669.1 194.2 L680.9 191.0 L679.4 198.1Z" fill="#2a2029" opacity="0.29"/><path d="M1164.4 618.2 L1161.5 625.8 L1153.3 626.0 L1152.3 614.4Z" fill="#2a2029" opacity="0.22"/><path d="M1118.9 511.8 L1113.5 513.0 L1111.4 508.4 L1118.5 504.7Z" fill="#2a2029" opacity="0.28"/><path d="M1247.1 427.4 L1251.0 429.4 L1251.0 433.8 L1245.8 439.1 L1237.9 433.7 L1238.7 429.8Z" fill="#2a2029" opacity="0.27"/><path d="M1111.7 160.0 L1115.1 157.2 L1119.1 161.2 L1114.2 163.5Z" fill="#0c070b" opacity="0.40"/><path d="M1084.5 425.3 L1086.1 427.8 L1086.0 429.3 L1082.5 431.2 L1081.3 429.0 L1082.1 427.0Z" fill="#2a2029" opacity="0.31"/><path d="M990.7 238.4 L980.0 234.6 L982.6 227.9 L987.9 225.9 L998.7 228.5 L995.2 234.4Z" fill="#2a2029" opacity="0.39"/><path d="M1011.9 207.5 L1004.5 206.2 L1006.4 203.5 L1009.1 200.4 L1013.9 202.2 L1014.5 205.0Z" fill="#2a2029" opacity="0.38"/><path d="M720.3 709.6 L717.2 710.1 L714.6 708.3 L717.7 705.4 L720.2 707.8Z" fill="#2a2029" opacity="0.31"/><path d="M794.4 722.1 L787.4 721.5 L789.1 716.8 L795.7 718.0Z" fill="#0c070b" opacity="0.40"/><path d="M1092.4 657.3 L1095.9 653.2 L1104.4 654.2 L1102.1 662.4 L1098.7 665.5 L1091.6 664.0Z" fill="#2a2029" opacity="0.20"/><path d="M1184.6 437.9 L1184.8 446.8 L1178.3 444.2 L1175.4 436.6Z" fill="#2a2029" opacity="0.25"/><path d="M868.0 634.3 L874.5 639.1 L871.0 644.2 L863.7 640.9Z" fill="#2a2029" opacity="0.39"/><path d="M731.2 724.3 L725.3 723.2 L731.5 717.5 L734.3 721.9Z" fill="#2a2029" opacity="0.30"/><path d="M1229.5 718.3 L1231.2 708.5 L1243.9 706.8 L1248.8 718.5 L1241.7 721.6Z" fill="#2a2029" opacity="0.40"/><path d="M912.2 733.3 L905.7 732.9 L903.2 730.4 L904.6 725.6 L907.8 722.0 L914.5 726.6Z" fill="#2a2029" opacity="0.32"/><path d="M922.5 515.8 L916.1 517.6 L909.7 511.0 L918.5 507.5 L925.4 510.9Z" fill="#0c070b" opacity="0.40"/><path d="M705.9 308.5 L698.9 308.5 L692.6 303.6 L693.6 300.9 L703.4 299.3 L708.1 304.6Z" fill="#2a2029" opacity="0.41"/><path d="M779.6 543.1 L782.1 544.6 L778.1 550.2 L773.5 549.6 L770.6 543.9 L773.9 543.0Z" fill="#2a2029" opacity="0.38"/><path d="M752.5 316.5 L759.7 315.6 L761.7 321.8 L753.2 325.1 L746.4 322.2Z" fill="#2a2029" opacity="0.28"/><path d="M1262.3 437.7 L1256.2 441.4 L1251.4 435.4 L1258.3 430.8Z" fill="#0c070b" opacity="0.40"/><path d="M919.5 386.6 L917.3 382.9 L919.6 376.8 L928.4 379.7 L927.1 384.5Z" fill="#0c070b" opacity="0.40"/><path d="M1009.0 514.0 L1011.1 506.1 L1018.0 507.4 L1017.7 516.3Z" fill="#2a2029" opacity="0.22"/><path d="M959.6 452.5 L965.6 454.0 L965.3 458.8 L959.5 457.3Z" fill="#0c070b" opacity="0.40"/><path d="M684.6 597.0 L684.0 601.4 L673.4 598.4 L673.1 596.3 L675.3 588.5 L685.4 591.1Z" fill="#2a2029" opacity="0.41"/><path d="M1124.7 385.3 L1124.6 375.9 L1135.3 378.9 L1134.5 382.8 L1129.0 386.4Z" fill="#0c070b" opacity="0.40"/><path d="M671.0 131.8 L668.1 135.9 L658.6 132.4 L664.5 124.5Z" fill="#2a2029" opacity="0.29"/><path d="M1112.3 549.4 L1109.6 545.7 L1114.6 545.5 L1115.6 546.8Z" fill="#2a2029" opacity="0.37"/><path d="M1035.4 365.9 L1033.7 365.7 L1030.2 362.4 L1033.1 360.1 L1037.1 360.2 L1039.1 363.0Z" fill="#2a2029" opacity="0.30"/><path d="M1134.4 703.9 L1128.2 696.9 L1133.2 691.0 L1140.5 694.7 L1146.0 695.8 L1141.5 704.9Z" fill="#0c070b" opacity="0.40"/><path d="M894.0 350.9 L900.0 355.8 L889.3 361.4 L889.0 352.3Z" fill="#2a2029" opacity="0.40"/><path d="M1186.4 469.9 L1188.0 469.6 L1189.8 473.8 L1187.8 477.0 L1184.9 476.1 L1182.9 472.1Z" fill="#0c070b" opacity="0.40"/><path d="M805.3 579.4 L809.1 575.7 L817.9 579.1 L814.6 585.8 L808.6 585.0Z" fill="#0c070b" opacity="0.40"/><path d="M708.4 612.8 L711.3 611.8 L716.2 613.2 L717.0 614.3 L712.1 616.5 L709.2 615.6Z" fill="#2a2029" opacity="0.21"/><path d="M666.7 722.6 L676.9 720.5 L685.1 724.3 L678.4 729.9 L670.0 727.7Z" fill="#2a2029" opacity="0.29"/><path d="M666.8 148.5 L668.3 147.3 L673.5 146.2 L676.8 149.3 L676.3 152.1 L669.8 152.4Z" fill="#2a2029" opacity="0.31"/><path d="M755.3 719.5 L747.6 715.9 L745.0 704.4 L760.7 705.8Z" fill="#2a2029" opacity="0.39"/><path d="M955.5 188.2 L953.4 192.9 L948.9 190.9 L950.1 186.7Z" fill="#2a2029" opacity="0.24"/><path d="M793.8 213.5 L798.1 208.4 L808.2 211.3 L804.3 220.4Z" fill="#2a2029" opacity="0.44"/><path d="M1220.0 361.2 L1221.9 358.2 L1224.3 359.3 L1224.3 361.9Z" fill="#2a2029" opacity="0.24"/><path d="M1193.1 289.4 L1187.2 291.7 L1184.1 289.2 L1189.4 285.6Z" fill="#2a2029" opacity="0.36"/><path d="M1142.6 691.1 L1136.1 689.7 L1133.1 686.3 L1136.4 681.5 L1143.3 681.8Z" fill="#2a2029" opacity="0.24"/><path d="M1053.7 397.2 L1045.9 397.9 L1040.5 395.8 L1042.8 391.7 L1047.9 391.0 L1054.0 394.8Z" fill="#0c070b" opacity="0.40"/><path d="M703.6 176.9 L711.4 180.1 L708.5 183.8 L702.4 186.2 L697.3 178.3Z" fill="#2a2029" opacity="0.33"/><path d="M875.5 300.8 L869.1 303.7 L862.2 299.3 L868.8 294.3 L874.7 295.1Z" fill="#2a2029" opacity="0.29"/><path d="M1226.6 709.4 L1228.9 710.6 L1229.0 713.6 L1226.3 714.9 L1224.0 711.2Z" fill="#2a2029" opacity="0.33"/><path d="M978.0 137.6 L993.0 134.0 L995.4 143.7 L978.9 144.0Z" fill="#2a2029" opacity="0.36"/><path d="M942.8 270.0 L945.1 272.3 L939.4 275.3 L935.6 273.6 L935.9 268.6Z" fill="#2a2029" opacity="0.24"/><path d="M1009.4 577.0 L1007.0 580.9 L1002.7 579.8 L1006.1 575.8Z" fill="#0c070b" opacity="0.40"/><path d="M865.0 386.8 L872.6 391.6 L860.1 396.5 L853.1 395.0 L853.7 386.5Z" fill="#0c070b" opacity="0.40"/><path d="M918.4 433.8 L920.2 431.2 L924.1 432.1 L923.3 433.9Z" fill="#2a2029" opacity="0.43"/><path d="M1031.0 503.5 L1044.1 500.7 L1043.1 509.8 L1033.1 509.8Z" fill="#2a2029" opacity="0.44"/><path d="M975.3 287.8 L974.6 294.3 L969.7 293.5 L964.4 291.1 L965.7 288.0 L971.5 286.4Z" fill="#2a2029" opacity="0.34"/><path d="M877.1 666.7 L877.6 663.2 L883.2 662.9 L884.4 665.9 L879.1 668.4Z" fill="#2a2029" opacity="0.32"/><path d="M834.5 726.0 L827.9 724.9 L827.8 720.9 L833.2 722.5Z" fill="#0c070b" opacity="0.40"/><path d="M1241.2 571.9 L1245.2 571.9 L1244.9 574.6 L1241.5 576.5 L1240.4 573.0Z" fill="#2a2029" opacity="0.36"/><path d="M1087.0 374.7 L1089.6 377.4 L1088.5 379.4 L1083.8 378.4 L1083.8 376.4Z" fill="#2a2029" opacity="0.38"/><path d="M829.3 360.7 L839.9 361.2 L841.4 364.3 L834.0 368.1 L830.8 365.2Z" fill="#2a2029" opacity="0.28"/><path d="M1250.7 498.4 L1247.5 496.5 L1246.0 492.7 L1251.9 491.8 L1254.2 494.9Z" fill="#2a2029" opacity="0.33"/><path d="M1073.8 360.7 L1076.3 359.9 L1080.0 362.8 L1077.4 367.4 L1074.3 365.7 L1071.0 362.9Z" fill="#2a2029" opacity="0.42"/><path d="M1021.3 551.2 L1008.3 546.4 L1008.8 539.9 L1023.8 542.6Z" fill="#2a2029" opacity="0.42"/><path d="M913.4 225.5 L911.8 225.5 L909.2 222.5 L912.8 218.5 L915.9 221.0 L918.3 221.8Z" fill="#2a2029" opacity="0.43"/><path d="M900.1 189.2 L897.1 188.4 L898.4 185.0 L901.4 186.9Z" fill="#0c070b" opacity="0.40"/><path d="M753.9 587.7 L750.7 588.0 L749.5 584.3 L753.8 583.9Z" fill="#0c070b" opacity="0.40"/><path d="M803.3 295.8 L801.9 296.0 L800.3 294.8 L800.3 292.4 L802.9 292.4 L803.8 293.6Z" fill="#0c070b" opacity="0.40"/><path d="M1223.3 647.6 L1220.0 643.3 L1223.7 640.5 L1228.9 642.2 L1230.5 645.5Z" fill="#2a2029" opacity="0.40"/><path d="M809.0 233.8 L805.2 235.9 L801.0 231.5 L806.0 227.8Z" fill="#2a2029" opacity="0.43"/><path d="M997.6 365.9 L991.3 363.2 L992.9 358.9 L997.3 356.6 L1000.1 361.3Z" fill="#2a2029" opacity="0.40"/><path d="M749.5 337.0 L756.1 336.7 L760.5 343.7 L751.4 348.2 L747.1 342.8Z" fill="#2a2029" opacity="0.33"/><path d="M900.6 433.5 L906.9 434.9 L906.0 437.6 L901.8 436.8Z" fill="#2a2029" opacity="0.37"/><path d="M1134.1 270.0 L1129.3 269.4 L1128.9 266.5 L1132.1 264.3Z" fill="#2a2029" opacity="0.29"/><path d="M1174.9 404.0 L1179.9 406.9 L1174.0 412.6 L1168.5 412.7 L1167.6 406.7 L1172.3 403.4Z" fill="#2a2029" opacity="0.25"/><path d="M722.6 673.0 L730.8 672.5 L734.7 677.0 L729.7 684.1 L720.4 681.9 L719.4 679.2Z" fill="#2a2029" opacity="0.43"/><path d="M1071.1 470.6 L1076.6 476.3 L1062.7 478.8 L1060.1 473.3Z" fill="#2a2029" opacity="0.25"/><path d="M1216.7 577.7 L1217.7 578.3 L1219.1 581.0 L1215.9 582.0 L1213.0 581.3 L1213.4 578.3Z" fill="#2a2029" opacity="0.37"/><path d="M772.2 536.5 L783.6 527.4 L787.9 532.3 L781.0 539.1Z" fill="#0c070b" opacity="0.40"/><path d="M1247.3 231.8 L1240.7 229.9 L1243.9 226.7 L1250.0 228.3Z" fill="#2a2029" opacity="0.29"/><path d="M839.1 663.4 L835.9 663.5 L837.2 660.3 L840.5 658.5 L841.3 660.2 L841.0 662.5Z" fill="#2a2029" opacity="0.21"/><path d="M1202.1 312.5 L1202.6 309.5 L1205.0 309.6 L1208.2 311.0 L1203.8 313.0Z" fill="#2a2029" opacity="0.45"/><path d="M996.1 193.0 L999.0 190.8 L1004.8 189.9 L1005.6 197.0 L999.5 196.6Z" fill="#2a2029" opacity="0.21"/><path d="M893.2 213.6 L894.5 212.2 L900.5 212.0 L903.1 215.8 L899.7 218.3 L895.6 220.0Z" fill="#2a2029" opacity="0.26"/><path d="M687.8 196.8 L683.1 190.1 L693.8 186.4 L696.4 190.4 L697.0 193.7 L691.2 198.4Z" fill="#2a2029" opacity="0.41"/><path d="M953.7 256.6 L953.0 261.2 L946.3 262.6 L945.7 258.0Z" fill="#2a2029" opacity="0.37"/><path d="M1165.2 673.9 L1162.3 675.7 L1158.7 674.6 L1158.7 671.6 L1162.7 671.2Z" fill="#2a2029" opacity="0.35"/><path d="M699.4 613.3 L710.5 612.1 L711.9 617.1 L709.2 622.9 L702.6 619.9Z" fill="#2a2029" opacity="0.31"/><path d="M711.7 524.8 L711.4 528.2 L708.5 531.3 L703.6 528.8 L702.9 524.2 L709.2 523.4Z" fill="#2a2029" opacity="0.38"/><path d="M799.6 407.6 L795.7 408.7 L790.5 407.1 L791.6 400.2 L797.3 399.1 L801.2 400.5Z" fill="#2a2029" opacity="0.23"/><path d="M1162.0 363.2 L1165.5 362.8 L1167.2 364.8 L1164.1 367.2Z" fill="#0c070b" opacity="0.40"/><path d="M836.9 550.9 L845.2 552.2 L844.8 556.8 L836.0 558.5Z" fill="#2a2029" opacity="0.41"/><path d="M727.1 347.6 L736.2 348.6 L734.0 356.5 L725.4 357.5 L725.4 353.2Z" fill="#2a2029" opacity="0.41"/><path d="M1013.6 196.9 L1009.6 198.1 L1009.4 195.2 L1012.8 195.1Z" fill="#2a2029" opacity="0.39"/><path d="M818.8 395.9 L820.8 394.4 L823.1 395.8 L820.5 398.2Z" fill="#2a2029" opacity="0.37"/><path d="M937.2 268.1 L928.1 273.3 L926.5 270.6 L922.6 263.8 L930.7 259.8 L935.1 263.2Z" fill="#2a2029" opacity="0.28"/><path d="M664.9 400.4 L672.8 401.3 L671.4 411.1 L661.3 409.8Z" fill="#0c070b" opacity="0.40"/><path d="M1091.1 675.8 L1088.4 684.4 L1078.0 686.4 L1078.3 672.2Z" fill="#2a2029" opacity="0.28"/><path d="M1121.4 579.0 L1118.2 577.2 L1117.4 570.6 L1124.3 569.5 L1129.8 572.6 L1125.9 576.6Z" fill="#0c070b" opacity="0.40"/><path d="M1196.2 532.0 L1198.9 529.5 L1205.3 531.3 L1202.8 537.4 L1196.2 537.0Z" fill="#2a2029" opacity="0.22"/><path d="M775.6 477.7 L767.2 486.7 L761.4 482.6 L758.7 473.0 L768.5 470.7Z" fill="#0c070b" opacity="0.40"/><path d="M667.5 159.8 L665.1 158.3 L664.9 155.5 L667.4 151.7 L674.1 155.5 L672.5 157.9Z" fill="#2a2029" opacity="0.20"/><path d="M858.3 145.2 L854.0 147.4 L849.2 147.0 L848.9 145.2 L852.8 140.0 L856.9 140.9Z" fill="#2a2029" opacity="0.21"/><path d="M847.5 520.0 L850.2 519.7 L855.0 521.6 L852.7 526.0 L846.3 524.5Z" fill="#2a2029" opacity="0.34"/><path d="M1055.9 487.8 L1057.5 486.9 L1062.9 490.1 L1061.2 493.7 L1057.8 494.4 L1055.0 492.1Z" fill="#2a2029" opacity="0.22"/><path d="M1151.1 718.9 L1150.0 718.7 L1148.0 717.0 L1151.0 715.0 L1154.1 716.3 L1153.8 717.3Z" fill="#2a2029" opacity="0.43"/><path d="M749.1 145.9 L754.8 137.9 L760.6 143.4 L755.9 149.6Z" fill="#2a2029" opacity="0.20"/><path d="M1155.5 681.1 L1146.3 685.4 L1144.2 679.6 L1145.8 675.6 L1153.1 675.3Z" fill="#0c070b" opacity="0.40"/><path d="M1121.1 518.2 L1115.4 516.5 L1116.4 513.5 L1122.9 513.3 L1124.8 515.4Z" fill="#2a2029" opacity="0.24"/><path d="M1079.4 491.1 L1073.9 491.3 L1069.4 490.3 L1070.0 487.5 L1074.8 483.6 L1077.5 486.9Z" fill="#2a2029" opacity="0.23"/><path d="M837.1 432.1 L840.7 427.0 L845.2 430.1 L840.8 435.0Z" fill="#0c070b" opacity="0.40"/><path d="M1040.3 139.1 L1037.8 140.1 L1036.1 136.4 L1038.7 135.0 L1041.7 135.3 L1043.4 137.7Z" fill="#0c070b" opacity="0.40"/><path d="M1109.5 428.9 L1110.8 431.7 L1107.0 431.8 L1105.2 431.8 L1105.5 429.0Z" fill="#2a2029" opacity="0.25"/><path d="M694.6 605.7 L687.2 611.1 L674.8 607.7 L679.9 597.4 L687.5 598.3Z" fill="#2a2029" opacity="0.44"/><path d="M896.5 358.7 L896.9 364.7 L887.8 362.6 L891.4 355.7Z" fill="#2a2029" opacity="0.22"/><path d="M1032.3 142.8 L1041.0 145.4 L1038.6 151.4 L1032.0 154.5 L1028.4 148.5Z" fill="#2a2029" opacity="0.26"/><path d="M1044.1 578.5 L1041.2 580.9 L1038.1 580.1 L1036.0 573.7 L1041.6 573.0 L1046.8 574.5Z" fill="#2a2029" opacity="0.35"/><path d="M1004.3 732.1 L1002.3 730.4 L1003.6 728.7 L1006.8 728.1 L1007.9 731.7 L1005.3 732.5Z" fill="#2a2029" opacity="0.42"/><path d="M925.2 378.7 L915.7 380.3 L911.8 376.8 L918.8 369.0 L923.5 371.9Z" fill="#2a2029" opacity="0.39"/><path d="M745.6 534.7 L750.3 535.8 L750.9 538.2 L751.2 541.1 L746.2 541.8 L743.9 537.2Z" fill="#0c070b" opacity="0.40"/><path d="M926.5 449.7 L919.1 445.5 L920.8 441.3 L929.9 442.6Z" fill="#0c070b" opacity="0.40"/><path d="M904.5 523.4 L895.9 521.2 L902.3 512.9 L906.9 514.0 L910.4 521.1Z" fill="#2a2029" opacity="0.30"/><path d="M916.2 696.8 L905.1 695.6 L907.3 688.6 L911.8 687.6Z" fill="#0c070b" opacity="0.40"/><path d="M1114.4 136.6 L1114.3 130.7 L1119.3 132.8 L1118.8 135.2Z" fill="#2a2029" opacity="0.23"/><path d="M711.2 578.0 L714.6 585.7 L705.4 587.0 L704.4 581.5Z" fill="#0c070b" opacity="0.40"/><path d="M1040.7 323.9 L1037.0 323.0 L1038.6 318.9 L1043.4 319.6Z" fill="#2a2029" opacity="0.28"/><path d="M808.8 360.1 L803.8 358.9 L803.7 355.2 L808.6 353.5 L812.1 356.5 L811.4 360.7Z" fill="#0c070b" opacity="0.40"/><path d="M848.7 446.2 L852.3 449.1 L853.2 453.0 L845.9 452.7 L844.3 449.1 L845.4 447.3Z" fill="#2a2029" opacity="0.23"/><path d="M740.7 665.0 L733.1 661.6 L732.9 654.5 L740.0 653.6 L745.7 659.3Z" fill="#2a2029" opacity="0.25"/><path d="M711.9 187.4 L715.9 178.8 L721.4 182.3 L719.7 189.3Z" fill="#2a2029" opacity="0.27"/><path d="M797.1 476.2 L801.2 477.2 L802.2 481.5 L800.7 483.2 L796.2 481.0 L793.6 478.4Z" fill="#2a2029" opacity="0.25"/><path d="M749.0 241.2 L743.1 242.4 L743.0 237.4 L745.6 235.9 L751.4 237.7Z" fill="#2a2029" opacity="0.22"/><path d="M951.4 644.2 L959.8 647.4 L956.9 653.1 L953.5 654.2 L949.8 651.4 L948.1 647.8Z" fill="#2a2029" opacity="0.24"/><path d="M871.2 421.1 L868.3 421.4 L865.8 417.4 L872.2 414.6 L873.4 417.7Z" fill="#2a2029" opacity="0.22"/><path d="M1057.5 211.1 L1051.5 213.0 L1048.2 209.1 L1049.3 201.9 L1054.9 204.2Z" fill="#0c070b" opacity="0.40"/><path d="M804.5 222.0 L801.1 223.5 L799.1 221.4 L799.5 218.7 L801.8 217.6 L806.2 220.3Z" fill="#2a2029" opacity="0.20"/><path d="M1233.6 426.9 L1228.5 428.9 L1227.7 418.9 L1232.5 418.1 L1237.6 419.5 L1239.0 424.5Z" fill="#0c070b" opacity="0.40"/><path d="M1135.7 438.8 L1128.2 444.5 L1123.6 436.2 L1131.4 430.1Z" fill="#2a2029" opacity="0.25"/><path d="M858.5 692.0 L846.6 693.2 L845.1 687.7 L852.2 684.9Z" fill="#2a2029" opacity="0.44"/><path d="M1262.4 605.3 L1266.1 602.2 L1270.1 604.8 L1270.4 607.9 L1262.3 610.1Z" fill="#2a2029" opacity="0.40"/><path d="M962.7 589.8 L963.8 595.6 L956.8 598.3 L951.5 596.2 L953.9 588.8Z" fill="#0c070b" opacity="0.40"/><path d="M1252.3 453.6 L1237.8 455.5 L1235.2 447.0 L1249.1 440.9Z" fill="#2a2029" opacity="0.43"/><path d="M1203.9 151.9 L1206.6 159.4 L1205.1 162.9 L1194.9 160.2 L1193.9 154.2Z" fill="#2a2029" opacity="0.20"/><path d="M952.7 138.8 L953.3 136.7 L956.4 135.1 L957.8 138.3 L956.6 139.6Z" fill="#2a2029" opacity="0.31"/><path d="M1057.6 612.7 L1061.0 612.6 L1062.6 613.7 L1063.4 616.6 L1058.3 617.4 L1058.1 615.5Z" fill="#2a2029" opacity="0.40"/><path d="M1020.5 645.9 L1029.0 638.0 L1034.4 643.4 L1032.2 647.9 L1021.8 652.2Z" fill="#2a2029" opacity="0.29"/><path d="M1218.6 667.2 L1223.9 662.3 L1231.7 668.5 L1220.9 672.9Z" fill="#0c070b" opacity="0.40"/><path d="M1062.9 429.1 L1054.0 430.4 L1049.2 421.8 L1060.8 419.9Z" fill="#0c070b" opacity="0.40"/><path d="M860.1 216.7 L853.2 216.9 L846.6 207.1 L852.9 202.6 L862.8 207.1Z" fill="#2a2029" opacity="0.44"/><path d="M1047.2 611.7 L1052.8 608.5 L1059.3 611.2 L1059.9 614.6 L1050.1 617.0Z" fill="#2a2029" opacity="0.22"/><path d="M839.6 436.7 L847.8 436.3 L852.6 444.3 L840.8 447.0Z" fill="#2a2029" opacity="0.30"/><path d="M1073.8 350.6 L1067.9 347.2 L1071.0 342.3 L1075.0 343.9 L1076.6 348.2Z" fill="#2a2029" opacity="0.37"/><path d="M1111.5 294.0 L1114.8 289.9 L1120.5 290.7 L1119.4 296.6 L1113.6 296.2Z" fill="#0c070b" opacity="0.40"/><path d="M704.5 453.9 L704.2 460.2 L704.9 463.4 L695.3 462.2 L689.8 459.6 L695.9 452.0Z" fill="#2a2029" opacity="0.32"/><path d="M854.5 648.3 L864.8 645.9 L867.1 649.9 L861.2 655.2Z" fill="#2a2029" opacity="0.37"/><path d="M1012.3 365.8 L1014.2 369.9 L1010.3 375.4 L1006.9 375.0 L1001.7 370.4Z" fill="#2a2029" opacity="0.30"/><path d="M826.9 516.1 L836.5 511.3 L838.5 517.9 L834.6 522.7 L822.1 521.9Z" fill="#2a2029" opacity="0.29"/><path d="M1086.2 178.8 L1077.3 174.9 L1080.4 165.5 L1086.7 167.7 L1091.7 172.4Z" fill="#2a2029" opacity="0.27"/><path d="M1228.8 713.5 L1222.0 709.3 L1228.3 706.6 L1233.0 709.8Z" fill="#2a2029" opacity="0.31"/><path d="M702.2 512.2 L693.7 514.2 L689.6 508.0 L688.6 504.6 L696.4 503.4 L701.9 506.5Z" fill="#2a2029" opacity="0.44"/><path d="M1196.1 502.6 L1193.1 503.4 L1191.4 500.0 L1192.5 497.8 L1196.0 498.3 L1198.7 501.1Z" fill="#2a2029" opacity="0.39"/><path d="M1243.1 682.6 L1237.6 688.9 L1231.0 686.7 L1228.7 681.8 L1234.1 678.1 L1238.9 679.1Z" fill="#2a2029" opacity="0.37"/><path d="M908.8 149.0 L909.3 141.4 L915.2 140.8 L921.8 148.7Z" fill="#2a2029" opacity="0.41"/><path d="M981.6 284.1 L973.1 280.2 L978.2 275.9 L982.6 277.1 L984.3 282.1Z" fill="#0c070b" opacity="0.40"/><path d="M671.3 259.7 L667.2 262.3 L658.9 260.4 L660.6 251.5 L666.1 252.2Z" fill="#2a2029" opacity="0.39"/><path d="M1207.4 135.1 L1206.4 131.9 L1209.9 129.4 L1213.4 132.4 L1210.5 134.3Z" fill="#2a2029" opacity="0.21"/><path d="M950.7 369.9 L946.1 374.9 L943.0 374.7 L936.4 370.3 L941.1 362.9 L944.5 363.7Z" fill="#2a2029" opacity="0.26"/><path d="M1107.8 516.4 L1112.9 519.1 L1107.5 522.1 L1104.6 516.5Z" fill="#2a2029" opacity="0.27"/><path d="M751.8 135.0 L757.2 137.6 L748.9 144.1 L740.3 138.5Z" fill="#2a2029" opacity="0.42"/><path d="M693.1 145.3 L701.3 142.2 L706.6 144.1 L701.1 150.8Z" fill="#0c070b" opacity="0.40"/><path d="M1112.8 149.8 L1102.5 146.0 L1107.9 139.3 L1115.2 136.0 L1118.2 141.1Z" fill="#2a2029" opacity="0.45"/><path d="M714.0 297.1 L708.8 294.8 L707.7 293.3 L711.6 289.6 L715.0 292.2Z" fill="#2a2029" opacity="0.35"/><path d="M1060.8 678.8 L1059.4 684.5 L1046.3 682.1 L1051.5 676.2Z" fill="#2a2029" opacity="0.31"/><path d="M1091.7 280.6 L1090.6 284.4 L1084.4 281.4 L1085.3 277.2 L1090.8 278.0Z" fill="#2a2029" opacity="0.20"/><path d="M990.8 330.1 L989.3 338.4 L981.4 337.2 L978.1 334.5 L983.0 328.6Z" fill="#2a2029" opacity="0.33"/><path d="M1241.9 220.8 L1251.4 222.0 L1253.2 226.2 L1248.9 228.6 L1242.2 229.6 L1241.5 224.5Z" fill="#0c070b" opacity="0.40"/><path d="M1234.6 490.3 L1240.5 493.9 L1240.9 500.4 L1231.6 498.6Z" fill="#2a2029" opacity="0.36"/><path d="M1014.0 528.6 L1013.6 522.3 L1014.6 519.1 L1023.8 521.0 L1025.1 525.9 L1016.7 528.4Z" fill="#2a2029" opacity="0.26"/><path d="M900.6 546.9 L900.3 548.5 L898.9 551.2 L896.3 550.1 L894.6 547.8 L897.0 544.8Z" fill="#0c070b" opacity="0.40"/><path d="M707.0 597.0 L714.0 593.2 L717.9 601.5 L710.1 604.2 L707.0 601.8Z" fill="#2a2029" opacity="0.23"/><path d="M1240.2 350.3 L1238.4 344.3 L1253.3 343.6 L1252.8 350.4Z" fill="#2a2029" opacity="0.21"/><path d="M1051.4 667.5 L1049.0 665.6 L1048.2 658.8 L1055.7 657.3 L1058.3 663.7Z" fill="#2a2029" opacity="0.32"/><path d="M899.1 424.4 L898.7 415.3 L909.6 416.6 L909.9 425.1Z" fill="#2a2029" opacity="0.25"/><path d="M1034.4 736.9 L1028.9 736.2 L1023.6 729.0 L1026.1 726.1 L1038.1 729.4Z" fill="#2a2029" opacity="0.22"/><path d="M932.8 316.4 L936.2 318.9 L936.1 321.9 L931.1 322.9 L929.2 320.2 L929.6 318.4Z" fill="#2a2029" opacity="0.37"/><path d="M742.2 344.3 L745.1 347.6 L745.3 350.3 L738.5 349.6 L737.9 347.7Z" fill="#2a2029" opacity="0.24"/><path d="M769.5 581.1 L771.9 575.7 L778.2 576.6 L774.8 584.4Z" fill="#2a2029" opacity="0.36"/><path d="M786.4 633.8 L786.0 632.1 L786.2 628.1 L791.5 628.5 L792.7 631.7Z" fill="#0c070b" opacity="0.40"/><path d="M1150.5 490.7 L1156.2 488.8 L1156.9 493.8 L1154.1 498.3 L1149.3 495.2 L1148.5 493.6Z" fill="#2a2029" opacity="0.31"/><path d="M914.1 660.6 L907.9 667.2 L901.3 663.5 L902.7 660.0Z" fill="#0c070b" opacity="0.40"/><path d="M702.2 137.0 L711.3 131.0 L714.3 135.0 L711.3 137.0 L704.2 140.1Z" fill="#a08b7a" stroke="#a08b7a" stroke-width="1.3" stroke-linejoin="round"/><path d="M670.1 140.1 L675.1 139.1 L681.1 140.1 L680.1 146.1 L670.1 147.1Z" fill="#a08b7a" stroke="#a08b7a" stroke-width="1.3" stroke-linejoin="round"/><path d="M674.5 140.5 L680.1 139.7 L680.5 145.1 L675.1 145.7Z" fill="#b8a060" stroke="#b8a060" stroke-width="1.3" stroke-linejoin="round"/><path d="M670.1 153.1 L676.1 156.1 L681.1 157.1 L681.7 162.2 L674.1 163.2 L669.7 159.1Z" fill="#a08b7a" stroke="#a08b7a" stroke-width="1.3" stroke-linejoin="round"/><path d="M723.3 143.1 L730.4 142.1 L733.4 150.1 L735.4 158.1 L732.4 164.2 L727.3 162.2 L724.3 156.1 L725.3 150.1Z" fill="#d2c6d0" stroke="#d2c6d0" stroke-width="1.3" stroke-linejoin="round"/><path d="M733.4 181.3 L742.4 179.2 L750.5 176.2 L748.4 182.3 L740.4 192.3 L734.4 189.3Z" fill="#d2c6d0" stroke="#d2c6d0" stroke-width="1.3" stroke-linejoin="round"/><path d="M703.2 192.3 L714.3 185.3 L719.3 189.3 L720.3 198.3 L716.3 200.3 L712.3 195.3 L704.2 195.3Z" fill="#a08b7a" stroke="#a08b7a" stroke-width="1.3" stroke-linejoin="round"/><path d="M655.0 199.3 L663.0 199.3 L668.1 214.4 L682.1 222.5 L682.1 228.5 L672.1 237.5 L664.0 238.5 L655.0 243.6Z" fill="#d2c6d0" stroke="#d2c6d0" stroke-width="1.3" stroke-linejoin="round"/><path d="M796.7 212.4 L800.7 200.3 L803.7 202.4 L801.7 212.4 L796.7 219.4Z" fill="#5c645e" stroke="#5c645e" stroke-width="1.3" stroke-linejoin="round"/><path d="M763.5 231.5 L774.6 230.5 L776.6 232.5 L768.5 237.5 L764.5 237.5Z" fill="#d2c6d0" stroke="#d2c6d0" stroke-width="1.3" stroke-linejoin="round"/><path d="M832.8 195.3 L837.9 192.3 L843.9 194.3 L842.9 199.3 L836.9 200.3Z" fill="#a08b7a" stroke="#a08b7a" stroke-width="1.3" stroke-linejoin="round"/><path d="M706.2 282.7 L715.3 274.7 L712.3 264.7 L717.3 264.7 L720.3 272.7 L717.3 279.7 L708.3 284.8Z" fill="#a08b7a" stroke="#a08b7a" stroke-width="1.3" stroke-linejoin="round"/><path d="M753.5 268.7 L758.5 268.7 L759.5 277.7 L755.5 280.7 L753.5 276.7Z" fill="#a08b7a" stroke="#a08b7a" stroke-width="1.3" stroke-linejoin="round"/><path d="M766.5 264.7 L771.6 258.6 L774.6 259.6 L774.6 266.7 L769.5 271.7 L766.5 268.7Z" fill="#a08b7a" stroke="#a08b7a" stroke-width="1.3" stroke-linejoin="round"/><path d="M837.9 268.7 L840.9 262.6 L844.9 266.7 L847.9 268.7 L847.9 272.7 L840.9 272.7Z" fill="#a08b7a" stroke="#a08b7a" stroke-width="1.3" stroke-linejoin="round"/><path d="M788.6 286.8 L794.7 284.8 L796.7 288.8 L790.6 290.8Z" fill="#d2c6d0" stroke="#d2c6d0" stroke-width="1.3" stroke-linejoin="round"/><path d="M790.6 304.8 L795.7 298.8 L802.7 298.8 L807.7 304.8 L805.7 309.9 L798.7 314.9 L792.7 311.9Z" fill="#a08b7a" stroke="#a08b7a" stroke-width="1.3" stroke-linejoin="round"/><path d="M831.8 304.8 L836.9 297.8 L840.9 300.8 L838.9 307.9 L833.9 308.9Z" fill="#d2c6d0" stroke="#d2c6d0" stroke-width="1.3" stroke-linejoin="round"/><path d="M851.9 300.8 L861.0 300.8 L866.0 302.8 L865.0 307.9 L857.0 307.9 L851.9 305.9Z" fill="#a08b7a" stroke="#a08b7a" stroke-width="1.3" stroke-linejoin="round"/><path d="M733.4 333.0 L736.4 313.9 L744.4 312.9 L745.4 317.9 L740.4 329.0 L736.4 333.0Z" fill="#d2c6d0" stroke="#d2c6d0" stroke-width="1.3" stroke-linejoin="round"/><path d="M750.5 320.9 L756.5 317.9 L763.5 316.9 L764.5 321.9 L758.5 326.0 L752.5 326.0Z" fill="#d2c6d0" stroke="#d2c6d0" stroke-width="1.3" stroke-linejoin="round"/><path d="M816.8 326.0 L822.8 324.9 L823.8 331.0 L820.8 332.0Z" fill="#a08b7a" stroke="#a08b7a" stroke-width="1.3" stroke-linejoin="round"/><path d="M824.8 329.0 L828.8 321.9 L834.9 318.9 L840.9 318.9 L838.9 329.0 L834.9 338.0 L826.8 338.0Z" fill="#d2c6d0" stroke="#d2c6d0" stroke-width="1.3" stroke-linejoin="round"/><path d="M771.6 338.0 L776.6 329.0 L779.6 328.0 L776.6 338.0Z" fill="#d8d8e0" stroke="#d8d8e0" stroke-width="1.3" stroke-linejoin="round"/><path d="M959.4 132.0 L962.5 128.0 L972.5 128.0 L971.5 136.0 L964.5 135.0Z" fill="#d2c6d0" stroke="#d2c6d0" stroke-width="1.3" stroke-linejoin="round"/><path d="M980.5 128.0 L986.6 128.0 L984.6 131.0Z" fill="#d2c6d0" stroke="#d2c6d0" stroke-width="1.3" stroke-linejoin="round"/><path d="M987.6 130.0 L991.6 128.0 L995.6 130.0 L994.6 140.1 L990.6 148.1 L987.6 142.1Z" fill="#a08b7a" stroke="#a08b7a" stroke-width="1.3" stroke-linejoin="round"/><path d="M957.4 150.1 L960.5 142.1 L968.5 141.1 L976.5 146.1 L977.5 150.1 L972.5 155.1 L966.5 153.1 L959.4 155.1Z" fill="#a08b7a" stroke="#a08b7a" stroke-width="1.3" stroke-linejoin="round"/><path d="M1003.7 140.1 L1006.7 139.1 L1011.7 145.1 L1009.7 147.1Z" fill="#d2c6d0" stroke="#d2c6d0" stroke-width="1.3" stroke-linejoin="round"/><path d="M941.4 148.1 L943.4 148.1 L947.4 156.1 L945.4 158.1 L942.4 154.1Z" fill="#d8d8e0" stroke="#d8d8e0" stroke-width="1.3" stroke-linejoin="round"/><path d="M1044.9 172.2 L1049.9 165.2 L1055.9 158.1 L1061.9 165.2 L1062.9 169.2 L1059.9 177.2 L1050.9 174.2Z" fill="#a08b7a" stroke="#a08b7a" stroke-width="1.3" stroke-linejoin="round"/><path d="M916.2 182.3 L924.3 180.3 L929.3 187.3 L923.3 189.3 L919.3 188.3Z" fill="#d2c6d0" stroke="#d2c6d0" stroke-width="1.3" stroke-linejoin="round"/><path d="M971.5 181.3 L975.5 176.2 L978.5 182.3 L978.5 186.3 L972.5 185.3Z" fill="#d2c6d0" stroke="#d2c6d0" stroke-width="1.3" stroke-linejoin="round"/><path d="M1021.7 193.3 L1024.8 191.3 L1026.8 194.3 L1023.8 198.3Z" fill="#a08b7a" stroke="#a08b7a" stroke-width="1.3" stroke-linejoin="round"/><path d="M916.2 226.5 L924.3 228.5 L928.3 232.5 L926.3 233.5 L918.3 229.5Z" fill="#a08b7a" stroke="#a08b7a" stroke-width="1.3" stroke-linejoin="round"/><path d="M928.3 234.5 L934.3 239.5 L932.3 240.5Z" fill="#d8d8e0" stroke="#d8d8e0" stroke-width="1.3" stroke-linejoin="round"/><path d="M900.2 247.6 L905.2 244.6 L911.2 248.6 L913.2 253.6 L908.2 258.6 L903.2 257.6Z" fill="#a08b7a" stroke="#a08b7a" stroke-width="1.3" stroke-linejoin="round"/><path d="M950.4 244.6 L957.4 241.5 L962.5 241.5 L966.5 248.6 L965.5 253.6 L954.4 253.6Z" fill="#d2c6d0" stroke="#d2c6d0" stroke-width="1.3" stroke-linejoin="round"/><path d="M980.5 229.5 L985.6 226.5 L989.6 230.5 L986.6 234.5 L982.6 234.5Z" fill="#a08b7a" stroke="#a08b7a" stroke-width="1.3" stroke-linejoin="round"/><path d="M1001.7 234.5 L1006.7 228.5 L1010.7 232.5 L1011.7 237.5 L1004.7 238.5Z" fill="#5c645e" stroke="#5c645e" stroke-width="1.3" stroke-linejoin="round"/><path d="M1038.8 233.5 L1042.8 230.5 L1046.9 232.5 L1050.9 237.5 L1049.9 244.6 L1045.9 242.5Z" fill="#a08b7a" stroke="#a08b7a" stroke-width="1.3" stroke-linejoin="round"/><path d="M1071.0 222.5 L1073.0 215.4 L1076.0 214.4 L1076.0 226.5Z" fill="#d2c6d0" stroke="#d2c6d0" stroke-width="1.3" stroke-linejoin="round"/><path d="M888.1 288.8 L894.1 284.8 L898.2 286.8 L894.1 290.8 L890.1 290.8Z" fill="#d8d8e0" stroke="#d8d8e0" stroke-width="1.3" stroke-linejoin="round"/><path d="M867.0 309.9 L874.0 298.8 L877.1 297.8 L874.0 307.9 L870.0 310.9Z" fill="#a08b7a" stroke="#a08b7a" stroke-width="1.3" stroke-linejoin="round"/><path d="M998.6 281.7 L1001.7 270.7 L1010.7 266.7 L1016.7 258.6 L1022.8 260.6 L1021.7 266.7 L1014.7 268.7 L1012.7 280.7 L1012.7 302.8 L1006.7 304.8 L999.6 302.8Z" fill="#d2c6d0" stroke="#d2c6d0" stroke-width="1.3" stroke-linejoin="round"/><path d="M1034.8 276.7 L1042.8 264.7 L1049.9 253.6 L1052.9 255.6 L1050.9 268.7 L1049.9 277.7 L1040.8 282.7Z" fill="#d2c6d0" stroke="#d2c6d0" stroke-width="1.3" stroke-linejoin="round"/><path d="M1057.9 294.8 L1061.9 292.8 L1065.0 295.8 L1061.9 298.8Z" fill="#d2c6d0" stroke="#d2c6d0" stroke-width="1.3" stroke-linejoin="round"/><path d="M1028.8 304.8 L1032.8 300.8 L1037.8 303.8 L1034.8 310.9 L1030.8 310.9Z" fill="#a08b7a" stroke="#a08b7a" stroke-width="1.3" stroke-linejoin="round"/><path d="M1031.8 321.9 L1034.8 315.9 L1039.8 314.9 L1038.8 319.9 L1032.8 322.9Z" fill="#a08b7a" stroke="#a08b7a" stroke-width="1.3" stroke-linejoin="round"/><path d="M1028.8 333.0 L1040.8 320.9 L1049.9 319.9 L1050.9 326.0 L1057.9 326.0 L1061.9 330.0 L1058.9 338.0 L1026.8 338.0Z" fill="#d2c6d0" stroke="#d2c6d0" stroke-width="1.3" stroke-linejoin="round"/><path d="M994.6 338.0 L1000.6 331.0 L1007.7 332.0 L1009.7 338.0Z" fill="#d2c6d0" stroke="#d2c6d0" stroke-width="1.3" stroke-linejoin="round"/><path d="M903.2 331.0 L909.2 320.9 L912.2 323.9 L908.2 331.0Z" fill="#d2c6d0" stroke="#d2c6d0" stroke-width="1.3" stroke-linejoin="round"/><path d="M906.2 315.9 L912.2 315.9 L911.2 317.9 L906.2 317.9Z" fill="#d8d8e0" stroke="#d8d8e0" stroke-width="1.3" stroke-linejoin="round"/><circle cx="898.2" cy="145.1" r="7.0" fill="#0c080c"/><path d="M1196.6 132.0 L1199.6 128.0 L1202.6 134.0 L1199.6 139.1Z" fill="#5c645e" stroke="#5c645e" stroke-width="1.3" stroke-linejoin="round"/><path d="M1158.4 157.1 L1161.4 153.1 L1165.4 155.1 L1160.4 160.2Z" fill="#a08b7a" stroke="#a08b7a" stroke-width="1.3" stroke-linejoin="round"/><path d="M1172.5 165.2 L1175.5 164.2 L1178.5 168.2 L1175.5 170.2Z" fill="#a08b7a" stroke="#a08b7a" stroke-width="1.3" stroke-linejoin="round"/><path d="M1098.1 171.2 L1101.1 169.2 L1102.1 175.2Z" fill="#d8d8e0" stroke="#d8d8e0" stroke-width="1.3" stroke-linejoin="round"/><path d="M1123.2 189.3 L1126.2 188.3 L1130.3 194.3Z" fill="#d8d8e0" stroke="#d8d8e0" stroke-width="1.3" stroke-linejoin="round"/><path d="M1212.7 179.2 L1216.7 174.2 L1221.7 174.2 L1220.7 180.3 L1214.7 181.3Z" fill="#d2c6d0" stroke="#d2c6d0" stroke-width="1.3" stroke-linejoin="round"/><path d="M1197.6 180.3 L1201.6 179.2 L1202.6 183.3 L1198.6 183.3Z" fill="#d8d8e0" stroke="#d8d8e0" stroke-width="1.3" stroke-linejoin="round"/><path d="M1225.7 190.3 L1228.7 190.3 L1228.7 193.3Z" fill="#d8d8e0" stroke="#d8d8e0" stroke-width="1.3" stroke-linejoin="round"/><path d="M1144.3 200.3 L1151.4 194.3 L1157.4 192.3 L1162.4 196.3 L1161.4 203.4 L1156.4 206.4 L1146.3 202.4Z" fill="#8a8a8a" stroke="#8a8a8a" stroke-width="1.3" stroke-linejoin="round"/><path d="M1097.1 208.4 L1102.1 203.4 L1112.2 203.4 L1118.2 208.4 L1119.2 215.4 L1112.2 215.4 L1100.1 212.4Z" fill="#d2c6d0" stroke="#d2c6d0" stroke-width="1.3" stroke-linejoin="round"/><path d="M1147.3 216.4 L1150.4 214.4 L1150.4 218.4Z" fill="#d8d8e0" stroke="#d8d8e0" stroke-width="1.3" stroke-linejoin="round"/><path d="M1158.4 232.5 L1165.4 229.5 L1169.4 230.5 L1166.4 235.5 L1162.4 237.5 L1157.4 234.5Z" fill="#d2c6d0" stroke="#d2c6d0" stroke-width="1.3" stroke-linejoin="round"/><path d="M1232.8 214.4 L1239.8 201.4 L1243.8 201.4 L1242.8 206.4 L1235.8 215.4Z" fill="#ab9d8b" stroke="#ab9d8b" stroke-width="1.3" stroke-linejoin="round"/><path d="M1252.8 199.3 L1259.9 193.3 L1267.9 192.3 L1267.9 219.4 L1262.9 216.4 L1256.9 208.4Z" fill="#d2c6d0" stroke="#d2c6d0" stroke-width="1.3" stroke-linejoin="round"/><path d="M1076.0 218.4 L1078.0 222.5 L1076.0 223.5Z" fill="#d2c6d0" stroke="#d2c6d0" stroke-width="1.3" stroke-linejoin="round"/><path d="M1087.1 249.6 L1090.1 246.6 L1090.1 249.6Z" fill="#d8d8e0" stroke="#d8d8e0" stroke-width="1.3" stroke-linejoin="round"/><path d="M1247.8 241.5 L1249.8 239.5 L1250.8 244.6Z" fill="#d8d8e0" stroke="#d8d8e0" stroke-width="1.3" stroke-linejoin="round"/><path d="M1212.7 266.7 L1218.7 265.7 L1221.7 263.7 L1220.7 278.7 L1216.7 276.7Z" fill="#d2c6d0" stroke="#d2c6d0" stroke-width="1.3" stroke-linejoin="round"/><path d="M1231.7 282.7 L1234.8 280.7 L1234.8 284.8Z" fill="#d8d8e0" stroke="#d8d8e0" stroke-width="1.3" stroke-linejoin="round"/><path d="M1087.1 316.9 L1090.1 312.9 L1096.1 314.9 L1097.1 320.9 L1089.1 320.9Z" fill="#d2c6d0" stroke="#d2c6d0" stroke-width="1.3" stroke-linejoin="round"/><path d="M1214.7 331.0 L1224.7 321.9 L1230.7 318.9 L1233.8 333.0 L1232.8 338.0 L1214.7 338.0Z" fill="#d2c6d0" stroke="#d2c6d0" stroke-width="1.3" stroke-linejoin="round"/><path d="M1200.6 338.0 L1202.6 331.0 L1207.6 331.0 L1210.6 338.0Z" fill="#d2c6d0" stroke="#d2c6d0" stroke-width="1.3" stroke-linejoin="round"/><path d="M1153.4 338.0 L1160.4 336.0 L1161.4 338.0Z" fill="#d2c6d0" stroke="#d2c6d0" stroke-width="1.3" stroke-linejoin="round"/><path d="M1188.5 168.2 L1192.6 164.2 L1194.6 172.2 L1190.5 178.2Z" fill="#0a070a" stroke="#0a070a" stroke-width="1.3" stroke-linejoin="round"/><path d="M688.2 348.0 L696.2 344.0 L702.2 340.0 L707.2 345.0 L710.3 355.1 L700.2 354.1 L692.2 352.1Z" fill="#e6dcdc" stroke="#e6dcdc" stroke-width="1.3" stroke-linejoin="round"/><path d="M709.3 338.0 L714.3 338.0 L717.3 345.0 L713.3 347.0 L710.3 344.0Z" fill="#a08b7a" stroke="#a08b7a" stroke-width="1.3" stroke-linejoin="round"/><path d="M684.1 403.3 L687.1 400.3 L690.2 404.3Z" fill="#d2c6d0" stroke="#d2c6d0" stroke-width="1.3" stroke-linejoin="round"/><path d="M671.1 416.4 L675.1 410.3 L681.1 409.3 L685.1 417.4 L684.1 422.4 L678.1 425.4 L672.1 420.4Z" fill="#a08b7a" stroke="#a08b7a" stroke-width="1.3" stroke-linejoin="round"/><path d="M724.3 417.4 L726.3 415.4 L727.3 418.4Z" fill="#d8d8e0" stroke="#d8d8e0" stroke-width="1.3" stroke-linejoin="round"/><path d="M728.3 412.4 L731.4 411.4 L731.4 414.4Z" fill="#d8d8e0" stroke="#d8d8e0" stroke-width="1.3" stroke-linejoin="round"/><circle cx="720.3" cy="389.2" r="10.0" fill="#0c080c"/><path d="M755.5 451.5 L760.5 447.5 L765.5 448.5 L762.5 452.5 L757.5 453.6Z" fill="#ab9d8b" stroke="#ab9d8b" stroke-width="1.3" stroke-linejoin="round"/><path d="M859.0 366.1 L862.0 357.1 L866.0 355.1 L866.0 367.1Z" fill="#a08b7a" stroke="#a08b7a" stroke-width="1.3" stroke-linejoin="round"/><path d="M841.9 435.5 L844.9 431.4 L848.9 433.5 L848.9 439.5 L843.9 440.5Z" fill="#d2c6d0" stroke="#d2c6d0" stroke-width="1.3" stroke-linejoin="round"/><path d="M695.2 493.7 L701.2 488.7 L710.3 488.7 L716.3 495.8 L711.3 501.8 L704.2 506.8 L696.2 500.8Z" fill="#d2c6d0" stroke="#d2c6d0" stroke-width="1.3" stroke-linejoin="round"/><path d="M747.4 519.9 L755.5 512.8 L762.5 507.8 L766.5 519.9 L765.5 528.9 L758.5 529.9 L753.5 526.9Z" fill="#d2c6d0" stroke="#d2c6d0" stroke-width="1.3" stroke-linejoin="round"/><path d="M761.5 539.0 L765.5 531.9 L772.6 529.9 L779.6 530.9 L777.6 536.0 L770.5 541.0 L763.5 541.0Z" fill="#d2c6d0" stroke="#d2c6d0" stroke-width="1.3" stroke-linejoin="round"/><path d="M784.6 532.9 L786.6 522.9 L789.6 521.9 L791.7 526.9 L788.6 532.9Z" fill="#a08b7a" stroke="#a08b7a" stroke-width="1.3" stroke-linejoin="round"/><path d="M815.8 525.9 L820.8 518.9 L825.8 519.9 L826.8 524.9 L819.8 526.9Z" fill="#a08b7a" stroke="#a08b7a" stroke-width="1.3" stroke-linejoin="round"/><path d="M818.8 346.0 L821.8 343.0 L823.8 348.0Z" fill="#d8d8e0" stroke="#d8d8e0" stroke-width="1.3" stroke-linejoin="round"/><path d="M866.0 372.2 L872.0 358.1 L886.1 346.0 L893.1 354.1 L905.2 357.1 L896.1 368.1 L894.1 379.2 L889.1 381.2 L876.0 376.2Z" fill="#d2c6d0" stroke="#d2c6d0" stroke-width="1.3" stroke-linejoin="round"/><path d="M996.6 338.0 L1012.7 338.0 L1010.7 346.0 L1013.7 354.1 L1006.7 353.1 L999.6 346.0Z" fill="#d2c6d0" stroke="#d2c6d0" stroke-width="1.3" stroke-linejoin="round"/><path d="M1045.9 338.0 L1056.9 338.0 L1051.9 345.0Z" fill="#d2c6d0" stroke="#d2c6d0" stroke-width="1.3" stroke-linejoin="round"/><path d="M901.2 368.1 L906.2 367.1 L913.2 369.1 L909.2 371.2 L903.2 371.2Z" fill="#ab9d8b" stroke="#ab9d8b" stroke-width="1.3" stroke-linejoin="round"/><path d="M973.5 374.2 L977.5 367.1 L980.5 369.1 L978.5 375.2Z" fill="#d8d8e0" stroke="#d8d8e0" stroke-width="1.3" stroke-linejoin="round"/><path d="M963.5 381.2 L969.5 378.2 L975.5 379.2 L977.5 385.2 L971.5 387.2 L964.5 385.2Z" fill="#d2c6d0" stroke="#d2c6d0" stroke-width="1.3" stroke-linejoin="round"/><path d="M1042.8 368.1 L1046.9 365.1 L1051.9 364.1 L1053.9 370.2 L1047.9 372.2Z" fill="#a08b7a" stroke="#a08b7a" stroke-width="1.3" stroke-linejoin="round"/><path d="M1027.8 396.3 L1034.8 389.2 L1039.8 388.2 L1036.8 393.3 L1029.8 397.3Z" fill="#a08b7a" stroke="#a08b7a" stroke-width="1.3" stroke-linejoin="round"/><path d="M892.1 402.3 L897.1 394.3 L904.2 389.2 L905.2 400.3 L899.2 405.3Z" fill="#5c645e" stroke="#5c645e" stroke-width="1.3" stroke-linejoin="round"/><path d="M905.2 392.3 L908.2 390.3 L911.2 395.3 L908.2 396.3Z" fill="#d8d8e0" stroke="#d8d8e0" stroke-width="1.3" stroke-linejoin="round"/><path d="M937.3 396.3 L940.4 395.3 L948.4 398.3 L947.4 401.3 L941.4 402.3Z" fill="#a08b7a" stroke="#a08b7a" stroke-width="1.3" stroke-linejoin="round"/><path d="M1034.8 478.7 L1037.8 477.7 L1038.8 484.7 L1036.8 485.7Z" fill="#d8d8e0" stroke="#d8d8e0" stroke-width="1.3" stroke-linejoin="round"/><circle cx="1047.9" cy="532.9" r="6.0" fill="#0c080c"/><path d="M875.0 537.0 L878.1 533.9 L881.1 537.0 L878.1 539.0Z" fill="#d2c6d0" stroke="#d2c6d0" stroke-width="1.3" stroke-linejoin="round"/><path d="M1149.4 344.0 L1153.4 338.0 L1160.4 338.0 L1158.4 347.0 L1152.4 348.0Z" fill="#d2c6d0" stroke="#d2c6d0" stroke-width="1.3" stroke-linejoin="round"/><path d="M1212.7 342.0 L1216.7 338.0 L1232.8 338.0 L1228.7 342.0 L1214.7 344.0Z" fill="#d2c6d0" stroke="#d2c6d0" stroke-width="1.3" stroke-linejoin="round"/><path d="M1145.3 355.1 L1156.4 354.1 L1162.4 359.1 L1162.4 369.1 L1159.4 370.2 L1150.4 362.1Z" fill="#a08b7a" stroke="#a08b7a" stroke-width="1.3" stroke-linejoin="round"/><path d="M1239.8 391.3 L1243.8 386.2 L1248.8 387.2 L1246.8 393.3 L1240.8 394.3Z" fill="#a08b7a" stroke="#a08b7a" stroke-width="1.3" stroke-linejoin="round"/><path d="M1136.3 398.3 L1141.3 396.3 L1145.3 398.3 L1142.3 401.3 L1137.3 401.3Z" fill="#d2c6d0" stroke="#d2c6d0" stroke-width="1.3" stroke-linejoin="round"/><path d="M1076.0 409.3 L1080.0 411.4 L1083.0 417.4 L1081.0 420.4 L1076.0 418.4Z" fill="#d2c6d0" stroke="#d2c6d0" stroke-width="1.3" stroke-linejoin="round"/><path d="M1152.4 422.4 L1156.4 419.4 L1160.4 421.4 L1161.4 427.4 L1156.4 428.4Z" fill="#d2c6d0" stroke="#d2c6d0" stroke-width="1.3" stroke-linejoin="round"/><path d="M1185.5 428.4 L1191.6 421.4 L1196.6 423.4 L1198.6 430.4 L1195.6 436.5 L1188.5 435.5Z" fill="#d2c6d0" stroke="#d2c6d0" stroke-width="1.3" stroke-linejoin="round"/><path d="M1146.3 441.5 L1149.4 439.5 L1152.4 442.5 L1149.4 445.5Z" fill="#d2c6d0" stroke="#d2c6d0" stroke-width="1.3" stroke-linejoin="round"/><path d="M1190.5 470.6 L1195.6 466.6 L1199.6 470.6 L1202.6 475.7 L1199.6 479.7 L1194.6 476.7Z" fill="#d2c6d0" stroke="#d2c6d0" stroke-width="1.3" stroke-linejoin="round"/><path d="M1116.2 486.7 L1119.2 481.7 L1123.2 482.7 L1125.2 491.7 L1122.2 497.8 L1117.2 495.8Z" fill="#a08b7a" stroke="#a08b7a" stroke-width="1.3" stroke-linejoin="round"/><path d="M1131.3 530.9 L1136.3 519.9 L1148.3 508.8 L1157.4 497.8 L1165.4 498.8 L1172.5 505.8 L1168.4 514.8 L1158.4 522.9 L1148.3 526.9 L1136.3 533.9Z" fill="#a08b7a" stroke="#a08b7a" stroke-width="1.3" stroke-linejoin="round"/><path d="M1117.2 536.0 L1123.2 523.9 L1128.3 522.9 L1129.3 537.0 L1124.2 542.0 L1118.2 539.0Z" fill="#a08b7a" stroke="#a08b7a" stroke-width="1.3" stroke-linejoin="round"/><path d="M1239.8 490.7 L1244.8 485.7 L1253.9 484.7 L1254.9 488.7 L1247.8 494.8 L1241.8 493.7Z" fill="#d2c6d0" stroke="#d2c6d0" stroke-width="1.3" stroke-linejoin="round"/><path d="M1262.9 465.6 L1265.9 460.6 L1267.9 461.6 L1267.9 470.6 L1263.9 470.6Z" fill="#d2c6d0" stroke="#d2c6d0" stroke-width="1.3" stroke-linejoin="round"/><path d="M1242.8 548.0 L1245.8 542.0 L1251.8 541.0 L1254.9 548.0Z" fill="#a08b7a" stroke="#a08b7a" stroke-width="1.3" stroke-linejoin="round"/><path d="M1088.1 537.0 L1091.1 538.0 L1090.1 541.0Z" fill="#d8d8e0" stroke="#d8d8e0" stroke-width="1.3" stroke-linejoin="round"/><path d="M762.5 538.0 L767.5 531.0 L779.6 531.0 L776.6 538.0 L765.5 541.0Z" fill="#d2c6d0" stroke="#d2c6d0" stroke-width="1.3" stroke-linejoin="round"/><path d="M767.5 568.2 L771.6 562.1 L776.6 564.2 L775.6 571.2 L770.5 574.2Z" fill="#d2c6d0" stroke="#d2c6d0" stroke-width="1.3" stroke-linejoin="round"/><path d="M777.6 574.2 L781.6 569.2 L783.6 571.2 L782.6 579.2 L779.6 578.2Z" fill="#a08b7a" stroke="#a08b7a" stroke-width="1.3" stroke-linejoin="round"/><path d="M780.6 588.3 L783.6 584.3 L789.6 586.3 L791.7 591.3 L788.6 594.3 L782.6 592.3Z" fill="#d2c6d0" stroke="#d2c6d0" stroke-width="1.3" stroke-linejoin="round"/><path d="M798.7 595.3 L804.7 593.3 L810.7 594.3 L804.7 596.3 L799.7 596.3Z" fill="#d8d8e0" stroke="#d8d8e0" stroke-width="1.3" stroke-linejoin="round"/><path d="M852.9 579.2 L856.0 576.2 L861.0 581.2 L866.0 584.3 L866.0 587.3 L859.0 586.3Z" fill="#d2c6d0" stroke="#d2c6d0" stroke-width="1.3" stroke-linejoin="round"/><path d="M859.0 602.3 L864.0 597.3 L866.0 597.3 L866.0 606.4Z" fill="#5c645e" stroke="#5c645e" stroke-width="1.3" stroke-linejoin="round"/><path d="M821.8 616.4 L825.8 611.4 L828.8 613.4 L824.8 618.4Z" fill="#d8d8e0" stroke="#d8d8e0" stroke-width="1.3" stroke-linejoin="round"/><path d="M782.6 619.4 L786.6 617.4 L789.6 622.4 L788.6 631.5 L784.6 630.5Z" fill="#a08b7a" stroke="#a08b7a" stroke-width="1.3" stroke-linejoin="round"/><path d="M685.1 619.4 L687.1 616.4 L691.2 617.4 L693.2 621.4 L688.2 623.4Z" fill="#d2c6d0" stroke="#d2c6d0" stroke-width="1.3" stroke-linejoin="round"/><path d="M729.4 642.5 L738.4 647.6 L743.4 655.6 L735.4 658.6 L732.4 655.6Z" fill="#d2c6d0" stroke="#d2c6d0" stroke-width="1.3" stroke-linejoin="round"/><path d="M750.5 651.6 L756.5 647.6 L763.5 643.5 L769.5 650.6 L763.5 656.6 L753.5 654.6Z" fill="#d2c6d0" stroke="#d2c6d0" stroke-width="1.3" stroke-linejoin="round"/><path d="M727.3 665.6 L730.4 663.6 L736.4 668.7 L734.4 671.7 L729.4 669.7Z" fill="#d2c6d0" stroke="#d2c6d0" stroke-width="1.3" stroke-linejoin="round"/><path d="M655.0 671.7 L660.0 670.7 L680.1 671.7 L688.2 673.7 L702.2 689.8 L682.1 689.8 L668.1 683.7 L655.0 675.7Z" fill="#d2c6d0" stroke="#d2c6d0" stroke-width="1.3" stroke-linejoin="round"/><path d="M709.3 680.7 L714.3 676.7 L717.3 678.7 L717.3 683.7 L713.3 684.7Z" fill="#a08b7a" stroke="#a08b7a" stroke-width="1.3" stroke-linejoin="round"/><path d="M796.7 698.8 L799.7 694.8 L804.7 694.8 L807.7 700.8 L803.7 702.8 L797.7 701.8Z" fill="#d2c6d0" stroke="#d2c6d0" stroke-width="1.3" stroke-linejoin="round"/><path d="M808.7 705.8 L812.8 702.8 L814.8 705.8 L810.7 707.8Z" fill="#a08b7a" stroke="#a08b7a" stroke-width="1.3" stroke-linejoin="round"/><path d="M826.8 700.8 L829.8 695.8 L833.9 699.8 L830.8 703.8Z" fill="#ab9d8b" stroke="#ab9d8b" stroke-width="1.3" stroke-linejoin="round"/><path d="M854.0 703.8 L858.0 693.8 L866.0 691.8 L866.0 713.9 L859.0 714.9 L855.0 711.9Z" fill="#ab9d8b" stroke="#ab9d8b" stroke-width="1.3" stroke-linejoin="round"/><path d="M665.0 720.9 L667.1 714.9 L670.1 714.9 L675.1 724.9 L672.1 731.0 L667.1 730.0Z" fill="#a08b7a" stroke="#a08b7a" stroke-width="1.3" stroke-linejoin="round"/><path d="M822.8 720.9 L827.8 719.9 L829.8 724.9 L826.8 726.9 L823.8 725.9Z" fill="#a08b7a" stroke="#a08b7a" stroke-width="1.3" stroke-linejoin="round"/><path d="M702.2 693.8 L704.2 692.8 L704.2 695.8Z" fill="#d8d8e0" stroke="#d8d8e0" stroke-width="1.3" stroke-linejoin="round"/><path d="M875.0 536.0 L878.1 534.0 L881.1 537.0 L878.1 539.0Z" fill="#d2c6d0" stroke="#d2c6d0" stroke-width="1.3" stroke-linejoin="round"/><path d="M892.1 559.1 L896.1 550.1 L905.2 551.1 L903.2 556.1 L894.1 560.1Z" fill="#a08b7a" stroke="#a08b7a" stroke-width="1.3" stroke-linejoin="round"/><path d="M924.3 564.2 L928.3 563.2 L934.3 565.2 L930.3 567.2 L926.3 566.8Z" fill="#d8d8e0" stroke="#d8d8e0" stroke-width="1.3" stroke-linejoin="round"/><path d="M900.2 606.4 L906.2 602.3 L909.2 609.4 L908.2 612.4 L903.2 612.4Z" fill="#d2c6d0" stroke="#d2c6d0" stroke-width="1.3" stroke-linejoin="round"/><path d="M1058.9 588.3 L1064.0 587.3 L1065.0 593.3 L1061.9 593.3Z" fill="#d2c6d0" stroke="#d2c6d0" stroke-width="1.3" stroke-linejoin="round"/><path d="M969.5 657.6 L974.5 655.6 L979.5 656.6 L980.5 660.6 L972.5 660.6Z" fill="#d2c6d0" stroke="#d2c6d0" stroke-width="1.3" stroke-linejoin="round"/><path d="M999.6 667.7 L1004.7 663.6 L1010.7 664.6 L1009.7 671.7 L1003.7 671.7Z" fill="#a08b7a" stroke="#a08b7a" stroke-width="1.3" stroke-linejoin="round"/><path d="M1007.7 676.7 L1013.7 675.7 L1014.7 678.7 L1012.7 683.7 L1009.7 683.7Z" fill="#d2c6d0" stroke="#d2c6d0" stroke-width="1.3" stroke-linejoin="round"/><path d="M865.0 691.8 L874.0 687.8 L878.1 691.8 L870.0 700.8 L865.0 707.8Z" fill="#ab9d8b" stroke="#ab9d8b" stroke-width="1.3" stroke-linejoin="round"/><path d="M893.1 691.8 L899.2 691.8 L904.2 694.8 L904.2 698.8 L898.2 697.8Z" fill="#d2c6d0" stroke="#d2c6d0" stroke-width="1.3" stroke-linejoin="round"/><path d="M960.5 696.8 L966.5 692.8 L970.5 694.8 L972.5 702.8 L967.5 702.8Z" fill="#d2c6d0" stroke="#d2c6d0" stroke-width="1.3" stroke-linejoin="round"/><path d="M985.6 703.8 L990.6 698.8 L996.6 697.8 L996.6 702.8 L991.6 708.9 L986.6 709.9Z" fill="#d2c6d0" stroke="#d2c6d0" stroke-width="1.3" stroke-linejoin="round"/><path d="M934.3 713.9 L941.4 712.9 L950.4 713.9 L955.4 712.9 L948.4 718.9 L938.3 717.9Z" fill="#a08b7a" stroke="#a08b7a" stroke-width="1.3" stroke-linejoin="round"/><path d="M937.3 731.0 L942.4 726.9 L947.4 726.9 L948.4 731.0Z" fill="#d2c6d0" stroke="#d2c6d0" stroke-width="1.3" stroke-linejoin="round"/><path d="M1117.2 536.0 L1122.2 531.0 L1129.3 531.0 L1127.2 538.0 L1124.2 543.1 L1118.2 540.0Z" fill="#a08b7a" stroke="#a08b7a" stroke-width="1.3" stroke-linejoin="round"/><path d="M1131.3 531.0 L1146.3 531.0 L1142.3 533.0 L1133.3 534.0Z" fill="#a08b7a" stroke="#a08b7a" stroke-width="1.3" stroke-linejoin="round"/><path d="M1242.8 546.1 L1246.8 541.0 L1252.8 542.1 L1254.9 548.1 L1251.8 553.1 L1245.8 552.1Z" fill="#a08b7a" stroke="#a08b7a" stroke-width="1.3" stroke-linejoin="round"/><circle cx="1176.5" cy="561.1" r="17.1" fill="#0c080c"/><circle cx="1117.2" cy="720.9" r="15.1" fill="#0c080c"/><path d="M1120.2 586.3 L1123.2 584.3 L1126.2 589.3 L1124.2 591.3Z" fill="#d2c6d0" stroke="#d2c6d0" stroke-width="1.3" stroke-linejoin="round"/><path d="M1139.3 591.3 L1144.3 588.3 L1149.4 589.3 L1148.3 594.3 L1141.3 595.3Z" fill="#a08b7a" stroke="#a08b7a" stroke-width="1.3" stroke-linejoin="round"/><path d="M1129.3 604.4 L1135.3 599.3 L1136.3 602.3 L1135.3 608.4 L1131.3 608.4Z" fill="#a08b7a" stroke="#a08b7a" stroke-width="1.3" stroke-linejoin="round"/><path d="M1151.4 609.4 L1154.4 605.4 L1156.4 607.4 L1155.4 612.4Z" fill="#d2c6d0" stroke="#d2c6d0" stroke-width="1.3" stroke-linejoin="round"/><path d="M1078.0 625.5 L1081.0 621.4 L1086.0 622.4 L1086.0 626.5 L1082.0 628.5Z" fill="#d2c6d0" stroke="#d2c6d0" stroke-width="1.3" stroke-linejoin="round"/><path d="M1089.1 623.4 L1097.1 614.4 L1107.1 614.4 L1105.1 619.4 L1098.1 624.4 L1090.1 627.5Z" fill="#d2c6d0" stroke="#d2c6d0" stroke-width="1.3" stroke-linejoin="round"/><path d="M1109.2 625.5 L1112.2 619.4 L1116.2 624.4 L1117.2 629.5 L1113.2 630.5Z" fill="#a08b7a" stroke="#a08b7a" stroke-width="1.3" stroke-linejoin="round"/><path d="M1105.1 651.6 L1110.2 651.6 L1116.2 653.6 L1115.2 656.6 L1107.1 654.6Z" fill="#a08b7a" stroke="#a08b7a" stroke-width="1.3" stroke-linejoin="round"/><path d="M1185.5 646.6 L1188.5 644.5 L1196.6 651.6 L1195.6 653.6 L1188.5 651.6Z" fill="#d2c6d0" stroke="#d2c6d0" stroke-width="1.3" stroke-linejoin="round"/><path d="M1241.8 608.4 L1247.8 602.3 L1251.8 595.3 L1253.9 605.4 L1257.9 609.4 L1256.9 619.4 L1248.8 621.4 L1242.8 615.4Z" fill="#a08b7a" stroke="#a08b7a" stroke-width="1.3" stroke-linejoin="round"/><path d="M1245.8 610.4 L1250.8 608.4 L1253.9 615.4 L1248.8 616.4Z" fill="#d8d8e0" stroke="#d8d8e0" stroke-width="1.3" stroke-linejoin="round"/><path d="M1173.5 730.0 L1176.5 723.9 L1180.5 724.9 L1181.5 731.0Z" fill="#a08b7a" stroke="#a08b7a" stroke-width="1.3" stroke-linejoin="round"/><path d="M807.5 221.9 L814.4 212.7 L826.7 200.4 L835.9 201.2 L846.6 205.8 L856.6 206.6 L863.4 210.4 L868.0 215.8 L867.3 221.9 L858.9 226.5 L850.4 231.1 L835.9 243.3 L830.5 247.9 L819.0 244.1 L813.7 245.6 L812.9 236.4Z" fill="#d2c6d0" stroke="#d2c6d0" stroke-width="1.3" stroke-linejoin="round"/><path d="M866.5 201.2 L869.6 193.5 L874.2 186.7 L879.5 192.0 L892.5 198.1 L891.8 201.2 L878.8 197.4 L873.4 203.5Z" fill="#d2c6d0" stroke="#d2c6d0" stroke-width="1.3" stroke-linejoin="round"/><path d="M871.1 211.9 L881.1 211.9 L878.0 201.2 L892.5 203.5 L895.6 209.6 L893.3 226.5 L888.0 227.2 L881.8 221.9 L882.6 224.9 L874.2 221.9Z" fill="#d2c6d0" stroke="#d2c6d0" stroke-width="1.3" stroke-linejoin="round"/><path d="M868.0 237.2 L872.6 232.6 L880.3 237.2 L878.8 238.7 L873.4 234.9 L869.6 239.5Z" fill="#5c645e" stroke="#5c645e" stroke-width="1.3" stroke-linejoin="round"/><path d="M848.9 403.3 L857.0 399.3 L862.0 396.3 L866.0 397.3 L871.0 400.3 L875.0 404.3 L871.0 409.3 L859.0 409.3Z" fill="#a08b7a" stroke="#a08b7a" stroke-width="1.3" stroke-linejoin="round"/><path d="M862.0 506.3 L862.6 499.1 L870.9 495.5 L879.3 493.1 L885.3 490.7 L891.3 486.0 L894.8 476.4 L892.5 472.8 L893.6 460.8 L905.6 460.8 L915.2 457.3 L921.1 448.9 L927.1 442.9 L939.1 434.5 L943.9 428.6 L953.0 426.5 L961.0 421.2 L970.4 409.1 L977.1 404.4 L997.2 403.7 L1003.9 402.4 L1017.3 398.4 L1028.0 396.4 L1033.4 399.7 L1034.7 406.4 L1040.1 409.1 L1045.4 403.7 L1052.1 399.7 L1056.2 409.1 L1052.1 417.1 L1045.4 417.1 L1041.4 425.2 L1028.0 431.9 L1024.0 438.6 L1027.4 446.6 L1025.3 458.7 L1029.4 464.0 L1028.0 472.1 L1016.0 476.1 L1005.3 482.8 L997.2 490.8 L990.5 500.2 L982.5 508.2 L970.4 514.9 L958.4 523.0 L948.6 527.8 L936.7 531.4 L920.0 538.6 L912.8 539.8 L898.4 535.0 L886.5 530.2 L878.1 520.6 L870.9 513.5Z" fill="#f3e84c" stroke="#f3e84c" stroke-width="0.8"/><circle cx="906.5" cy="439.0" r="2.2" fill="#e8dc48"/><circle cx="926.5" cy="426.0" r="2.6" fill="#e8dc48"/><circle cx="881.0" cy="471.0" r="1.4" fill="#e8dc48"/><circle cx="873.0" cy="485.0" r="1.3" fill="#e8dc48"/><circle cx="885.0" cy="465.0" r="1.2" fill="#e8dc48"/><circle cx="1052.0" cy="402.4" r="3.3" fill="#e8dc48"/><circle cx="1058.2" cy="404.4" r="1.6" fill="#e8dc48"/><circle cx="889.0" cy="456.0" r="1.2" fill="#e8dc48"/><circle cx="941.5" cy="505.5" r="1.6" fill="#1a1008"/><path d="M895.0 534.0 Q933.0 449.0 985.0 407.0" fill="none" stroke="#6a5a10" stroke-width="0.8"/><path d="M943.0 529.0 L948.0 461.0" fill="none" stroke="#a08020" stroke-width="0.7"/></g></svg><div class="a" style="left:653.3px;top:129px;width:2.5px;height:602px;background:#9c9c9c"></div><div class="a" style="left:653px;top:731px;width:618px;height:17px;background:#f0f0f0"></div><div class="a" style="left:653px;top:731px;width:618px;height:1px;background:#fdfdfd"></div><div class="a" style="left:688px;top:733px;width:1px;height:14px;background:#d4d4d4"></div><div class="a" style="left:711px;top:733px;width:1px;height:14px;background:#d4d4d4"></div><div class="a t" style="left:655.30px;top:736.92px;font-size:9.5px;line-height:9.5px;color:#333;transform:scaleX(0.976);transform-origin:0 0">Zoom:</div><div class="a t" style="left:691.70px;top:736.92px;font-size:9.5px;line-height:9.5px;color:#333;transform:scaleX(0.878);transform-origin:0 0">20%</div><div class="a t" style="left:715.10px;top:736.92px;font-size:9.5px;line-height:9.5px;color:#333;transform:scaleX(1.016);transform-origin:0 0">Calib</div><div class="a" style="left:1276px;top:75px;width:661px;height:540px;background:#f0f0f0"></div><div class="a" style="left:1276px;top:75px;width:661px;height:38.5px;background:#fff"></div><div class="a" style="left:1284px;top:82px;width:9px;height:8px;background:#c8c8c8"></div><div class="a" style="left:1286px;top:85px;width:5px;height:2px;background:#333"></div><div class="a t" style="left:1297.30px;top:82.22px;font-size:9.5px;line-height:9.5px;color:#9a9a9a;transform:scaleX(0.947);transform-origin:0 0">Stage Pattern - Untitled *</div><div class="a" style="left:1878.5px;top:82px;width:9px;height:9px;border:1px solid #a8a8a8"></div><svg class="a" style="left:1914px;top:81.5px;" width="10" height="10" viewBox="0 0 10 10"><path d="M0.5 0.5L9.5 9.5M9.5 0.5L0.5 9.5" stroke="#999" stroke-width="1"/></svg><div class="a" style="left:1845px;top:86.5px;width:9px;height:1px;background:#f4f4f4"></div><div class="a t" style="left:1281.80px;top:101.42px;font-size:9.5px;line-height:9.5px;color:#555;transform:scaleX(0.908);transform-origin:0 0">File</div><div class="a t" style="left:1306.30px;top:101.42px;font-size:9.5px;line-height:9.5px;color:#555;transform:scaleX(0.922);transform-origin:0 0">Edit</div><div class="a t" style="left:1332.00px;top:101.42px;font-size:9.5px;line-height:9.5px;color:#555;transform:scaleX(0.955);transform-origin:0 0">View</div><div class="a t" style="left:1362.00px;top:101.42px;font-size:9.5px;line-height:9.5px;color:#555;transform:scaleX(0.946);transform-origin:0 0">Pattern</div><div class="a t" style="left:1401.60px;top:101.42px;font-size:9.5px;line-height:9.5px;color:#555;transform:scaleX(0.902);transform-origin:0 0">Stage</div><div class="a" style="left:1276px;top:113px;width:661px;height:1.5px;background:#d4d4d4"></div><div class="a" style="left:1279px;top:117px;width:1px;height:1px;background:#a09090"></div><div class="a" style="left:1279px;top:120px;width:1px;height:1px;background:#a09090"></div><div class="a" style="left:1279px;top:123px;width:1px;height:1px;background:#a09090"></div><div class="a" style="left:1279px;top:126px;width:1px;height:1px;background:#a09090"></div><div class="a" style="left:1279px;top:129px;width:1px;height:1px;background:#a09090"></div><div class="a" style="left:1279px;top:132px;width:1px;height:1px;background:#a09090"></div><div class="a" style="left:1279px;top:135px;width:1px;height:1px;background:#a09090"></div><div class="a" style="left:1279px;top:138px;width:1px;height:1px;background:#a09090"></div><div class="a" style="left:1279px;top:141px;width:1px;height:1px;background:#a09090"></div><svg class="a" style="left:1288px;top:121px;" width="17" height="17" viewBox="0 0 17 17"><path d="M9.5 9.5L15.5 15.5" stroke="#e08a30" stroke-width="3" stroke-linecap="round"/><circle cx="6.5" cy="6.5" r="5.5" fill="#d6ecfa" stroke="#6a98c0" stroke-width="1.2"/><path d="M6.5 4V9M4 6.5H9" stroke="#22aa22" stroke-width="2.2"/></svg><svg class="a" style="left:1314.5px;top:121px;" width="17" height="17" viewBox="0 0 17 17"><path d="M9.5 9.5L15.5 15.5" stroke="#e08a30" stroke-width="3" stroke-linecap="round"/><circle cx="6.5" cy="6.5" r="5.5" fill="#d6ecfa" stroke="#6a98c0" stroke-width="1.2"/><path d="M4 6.5H9" stroke="#d02020" stroke-width="2.2"/></svg><svg class="a" style="left:1341.5px;top:121px;" width="17" height="17" viewBox="0 0 17 17"><path d="M9.5 9.5L15.5 15.5" stroke="#e08a30" stroke-width="3" stroke-linecap="round"/><circle cx="6.5" cy="6.5" r="5.5" fill="#d6ecfa" stroke="#6a98c0" stroke-width="1.2"/><path d="M6.5 4V9M4 6.5H9" stroke="#22aa22" stroke-width="2.2"/><path d="M1 15L2 13L3 15L2 17Z" fill="#7a1010"/></svg><svg class="a" style="left:1368px;top:121px;" width="17" height="17" viewBox="0 0 17 17"><path d="M9.5 9.5L15.5 15.5" stroke="#e08a30" stroke-width="3" stroke-linecap="round"/><circle cx="6.5" cy="6.5" r="5.5" fill="#d6ecfa" stroke="#6a98c0" stroke-width="1.2"/><path d="M6.5 4V9M4 6.5H9" stroke="#22aa22" stroke-width="2.2"/><path d="M0 13L1 11L2 13L1 15ZM3 15L4 13L5 15L4 17ZM6 13L7 11L8 13L7 15Z" fill="#7a1010"/></svg><svg class="a" style="left:1395px;top:120.5px;" width="18" height="18" viewBox="0 0 18 18"><rect x="0.5" y="0.5" width="17" height="17" fill="#fff" stroke="#3a6ad0" stroke-width="1.2"/><path d="M9 1V17M1 9H17" stroke="#e03030"/><circle cx="8" cy="8" r="3" fill="#c0d8f0" stroke="#8aa"/></svg><svg class="a" style="left:1423.5px;top:121px;" width="16" height="16" viewBox="0 0 16 16"><path d="M3 14Q1 10 2 8L3 4L5 4L5 8L5 3L7 2L8 3L8 8L9 3L11 3L11 8L12 5L14 6L13 12Q12 14 9 14Z" fill="#fff" stroke="#222" stroke-width="1"/></svg><div class="a" style="left:1446.5px;top:117px;width:1px;height:24px;background:#c4c4c4"></div><svg class="a" style="left:1455.7px;top:120px;" width="13" height="19" viewBox="0 0 13 19"><rect x="5" y="2" width="3" height="11" fill="#a0a0a0" transform="rotate(-15 6 8)"/><circle cx="6.5" cy="3" r="1.8" fill="#e04040"/><path d="M1 13L7 18L12 16L8 11Z" fill="#b8b8b8" stroke="#888" stroke-width="0.6"/></svg><div class="a" style="left:1477.9px;top:117px;width:1px;height:24px;background:#c4c4c4"></div><svg class="a" style="left:1484px;top:120.5px;" width="18" height="18" viewBox="0 0 18 18"><g stroke="#888" stroke-width="0.8" stroke-dasharray="1.5 1.5"><path d="M0.5 0.5L4 4M17.5 0.5L14 4M0.5 17.5L4 14M17.5 17.5L14 14"/></g><path d="M9 4V14M4 9H14" stroke="#b01818" stroke-width="1.6"/><circle cx="9" cy="9" r="1.8" fill="#b01818"/></svg><svg class="a" style="left:1511.5px;top:120.5px;" width="18" height="18" viewBox="0 0 18 18"><g stroke="#888" stroke-width="0.8" stroke-dasharray="1.5 1.5"><path d="M0.5 0.5L4 4M17.5 0.5L14 4M0.5 17.5L4 14M17.5 17.5L14 14"/></g><rect x="4.5" y="4.5" width="9" height="9" fill="#8a8ae8" stroke="#3a3ab0"/><path d="M4.5 7.5H13.5M4.5 10.5H13.5M7.5 4.5V13.5M10.5 4.5V13.5" stroke="#3a3ab0" stroke-width="0.6"/></svg><svg class="a" style="left:1538.5px;top:120.5px;" width="18" height="18" viewBox="0 0 18 18"><g stroke="#888" stroke-width="0.8" stroke-dasharray="1.5 1.5"><path d="M0.5 0.5L4 4M17.5 0.5L14 4M0.5 17.5L4 14M17.5 17.5L14 14"/></g><circle cx="9" cy="9" r="5" fill="#4040c0" stroke="#202090"/><path d="M4 9H14M9 4V14M5 6.5H13M5 11.5H13" stroke="#aab" stroke-width="0.6"/></svg><svg class="a" style="left:1565px;top:120.5px;" width="18" height="18" viewBox="0 0 18 18"><g stroke="#888" stroke-width="0.8" stroke-dasharray="1.5 1.5"><path d="M0.5 0.5L4 4M17.5 0.5L14 4M0.5 17.5L4 14M17.5 17.5L14 14"/></g><rect x="5" y="5" width="8" height="8" fill="#fff" stroke="#2020a0" stroke-width="1.8"/></svg><svg class="a" style="left:1591.5px;top:120.5px;" width="18" height="18" viewBox="0 0 18 18"><g stroke="#888" stroke-width="0.8" stroke-dasharray="1.5 1.5"><path d="M0.5 0.5L4 4M17.5 0.5L14 4M0.5 17.5L4 14M17.5 17.5L14 14"/></g><path d="M7 4H11L14 7V11L11 14H7L4 11V7Z" fill="#fff" stroke="#222" stroke-width="1.6"/></svg><svg class="a" style="left:1618.5px;top:120.5px;" width="18" height="18" viewBox="0 0 18 18"><g stroke="#888" stroke-width="0.8" stroke-dasharray="1.5 1.5"><path d="M0.5 0.5L4 4M17.5 0.5L14 4M0.5 17.5L4 14M17.5 17.5L14 14"/></g><circle cx="9" cy="9" r="4" fill="#fff" stroke="#c04040" stroke-width="1"/><circle cx="9" cy="9" r="2" fill="#a01010"/></svg><div class="a" style="left:1643px;top:117px;width:1px;height:24px;background:#c4c4c4"></div><svg class="a" style="left:1650px;top:120.5px;" width="18" height="18" viewBox="0 0 18 18"><rect x="0.5" y="0.5" width="17" height="17" rx="1" fill="#fff" stroke="#3a6ad0" stroke-dasharray="1.5 1"/><rect x="3.5" y="6" width="11" height="6" rx="1" fill="#dde8ff" stroke="#2a3aa0" stroke-width="1.5"/></svg><svg class="a" style="left:1677px;top:120.5px;" width="18" height="18" viewBox="0 0 18 18"><path d="M3 3L15 15M15 3L3 15" stroke="#ec3a20" stroke-width="4.5" stroke-linecap="round"/></svg><svg class="a" style="left:1703px;top:120px;" width="19" height="19" viewBox="0 0 19 19"><path d="M2 7V2H7M2 2L6 6M17 7V2H12M17 2L13 6M2 12V17H7M2 17L6 13M17 12V17H12M17 17L13 13" stroke="#b8b8b8" stroke-width="1.8" fill="none"/></svg><div class="a" style="left:1727.7px;top:117px;width:1px;height:24px;background:#c4c4c4"></div><svg class="a" style="left:1734.7px;top:121px;" width="17" height="16" viewBox="0 0 17 16"><path d="M4 2Q0 8 4 14M13 2Q17 8 13 14" stroke="#777" stroke-width="1.2" fill="none"/><path d="M6.5 3H10.5L13 8L10.5 13H6.5L4 8Z" fill="none" stroke="#666" stroke-width="1.5"/></svg><svg class="a" style="left:1762px;top:121px;" width="16" height="16" viewBox="0 0 16 16"><path d="M8 1L15 9H1Z" fill="#c0c0c0"/><rect x="1" y="11" width="14" height="4" rx="2" fill="#c0c0c0"/></svg><div class="a" style="left:1276px;top:144px;width:661px;height:1px;background:#505050"></div><div class="a" style="left:1276px;top:145px;width:661px;height:452px;background:#fff"></div><svg class="a" style="left:0;top:0" width="1949" height="1045"><rect x="1398" y="182" width="417.6" height="370.3" fill="#c0ff98"/><path d="M1398.00 182V552.3M1439.76 182V552.3M1481.52 182V552.3M1523.28 182V552.3M1565.04 182V552.3M1606.80 182V552.3M1648.56 182V552.3M1690.32 182V552.3M1732.08 182V552.3M1773.84 182V552.3M1815.60 182V552.3M1398 182.00H1815.6M1398 223.14H1815.6M1398 264.28H1815.6M1398 305.42H1815.6M1398 346.56H1815.6M1398 387.70H1815.6M1398 428.84H1815.6M1398 469.98H1815.6M1398 511.12H1815.6M1398 552.26H1815.6" stroke="#3030f0" stroke-width="1" fill="none"/><rect x="1398.5" y="223" width="41.5" height="41" fill="#c4f09c" stroke="#202020" stroke-width="1.6"/><g fill="#e02020"><circle cx="1398" cy="182" r="2.4"/></g><path d="M1392 182H1404M1398 176V188" stroke="#e04040" stroke-width="1"/><circle cx="1398.2" cy="223" r="2" fill="#1a7ae0"/><circle cx="1440.2" cy="223" r="2" fill="#1a7ae0"/><circle cx="1398.2" cy="264.2" r="2" fill="#1a7ae0"/><circle cx="1440.2" cy="264.2" r="2" fill="#1a7ae0"/><circle cx="1770" cy="345" r="1.2" fill="#20a020"/><circle cx="1563" cy="508" r="1.2" fill="#20a020"/></svg><div class="a" style="left:1276px;top:597px;width:661px;height:1.5px;background:#6a6a6a"></div><div class="a" style="left:1276px;top:598.5px;width:661px;height:16.5px;background:#f0f0f0"></div><div class="a" style="left:1280px;top:599.5px;width:100.4px;height:13px;background:#ececec;border-left:1px solid #a8a8a8;border-top:1px solid #c0c0c0;border-right:1px solid #fafafa;border-bottom:1px solid #fafafa"></div><div class="a" style="left:1382.6px;top:599.5px;width:57.1px;height:13px;background:#ececec;border-left:1px solid #a8a8a8;border-top:1px solid #c0c0c0;border-right:1px solid #fafafa;border-bottom:1px solid #fafafa"></div><div class="a" style="left:1441px;top:599.5px;width:55px;height:13px;background:#ececec;border-left:1px solid #a8a8a8;border-top:1px solid #c0c0c0;border-right:1px solid #fafafa;border-bottom:1px solid #fafafa"></div><div class="a" style="left:1498px;top:599.5px;width:47px;height:13px;background:#ececec;border-left:1px solid #a8a8a8;border-top:1px solid #c0c0c0;border-right:1px solid #fafafa;border-bottom:1px solid #fafafa"></div><div class="a" style="left:1546.5px;top:599.5px;width:13.5px;height:13px;background:#ececec;border-left:1px solid #a8a8a8;border-top:1px solid #c0c0c0;border-right:1px solid #fafafa;border-bottom:1px solid #fafafa"></div><div class="a" style="left:1561.5px;top:599.5px;width:58.9px;height:13px;background:#ececec;border-left:1px solid #a8a8a8;border-top:1px solid #c0c0c0;border-right:1px solid #fafafa;border-bottom:1px solid #fafafa"></div><div class="a" style="left:1622px;top:599.5px;width:47px;height:13px;background:#ececec;border-left:1px solid #a8a8a8;border-top:1px solid #c0c0c0;border-right:1px solid #fafafa;border-bottom:1px solid #fafafa"></div><div class="a t" style="left:1294.30px;top:602.36px;font-size:9px;line-height:9px;color:#222;transform:scaleX(0.916);transform-origin:0 0">4777.5,-7841.5</div><div class="a t" style="left:1396.00px;top:602.36px;font-size:9px;line-height:9px;color:#222;transform:scaleX(0.888);transform-origin:0 0">-367</div><div class="a t" style="left:1454.00px;top:602.36px;font-size:9px;line-height:9px;color:#222;transform:scaleX(0.913);transform-origin:0 0">1:20</div><div class="a t" style="left:1514.70px;top:602.36px;font-size:9px;line-height:9px;color:#222;transform:scaleX(0.936);transform-origin:0 0">+0.0°</div><div class="a t" style="left:1549.50px;top:602.36px;font-size:9px;line-height:9px;color:#222;transform:scaleX(0.856);transform-origin:0 0">LF</div><div class="a t" style="left:1577.50px;top:602.36px;font-size:9px;line-height:9px;color:#222">0</div><svg class="a" style="left:1281px;top:600px;" width="12" height="12" viewBox="0 0 12 12"><rect x="4" y="5" width="7" height="6" fill="none" stroke="#333"/><path d="M7 0V4M5 2L7 0L9 2M1 8V12M0 10H3" stroke="#333" stroke-width="0.8" fill="none"/></svg><svg class="a" style="left:1385px;top:600px;" width="8" height="12" viewBox="0 0 8 12"><path d="M4 0V12M1 2L4 5L7 2M1 10L4 7L7 10" stroke="#333" fill="none" stroke-width="0.9"/></svg><svg class="a" style="left:1443px;top:600px;" width="10" height="12" viewBox="0 0 10 12"><path d="M5 0V12M0 6H10" stroke="#333" stroke-width="1.3"/></svg><svg class="a" style="left:1500px;top:600px;" width="11" height="12" viewBox="0 0 11 12"><path d="M1 1V11H10M1 5L7 2M4 6L10 11" stroke="#333" fill="none" stroke-width="0.9"/></svg><svg class="a" style="left:1563px;top:600px;" width="11" height="12" viewBox="0 0 11 12"><path d="M1 1L10 10M1 1H5M1 1V5M10 10H6M10 10V6" stroke="#333" fill="none" stroke-width="1.1"/></svg><div class="a" style="left:1277px;top:622px;width:654px;height:133px;background:#f7f5f2"></div><div class="a" style="left:1277px;top:622px;width:654px;height:23px;background:#fff"></div><div class="a t" style="left:1283.70px;top:628.42px;font-size:9.5px;line-height:9.5px;color:#a8a8a8;transform:scaleX(0.926);transform-origin:0 0">Bitplane Viewer</div><div class="a" style="left:1915.6px;top:627px;width:14.2px;height:15px;background:#ececec"></div><div class="a" style="left:1277px;top:645px;width:654px;height:1.2px;background:#a8a8a8"></div><div class="a" style="left:1279px;top:657px;width:650px;height:1.8px;background:#dbe2e8"></div><div class="a" style="left:1281px;top:647.8px;width:11px;height:8px;background:#0000ff"></div><div class="a t" style="left:1293.30px;top:647.22px;font-size:9.5px;line-height:9.5px;color:#111;transform:scaleX(0.852);transform-origin:0 0">Bitplane 1</div><div class="a" style="left:1607px;top:647.8px;width:11.5px;height:8px;background:#008000"></div><div class="a t" style="left:1619.80px;top:647.22px;font-size:9.5px;line-height:9.5px;color:#111;transform:scaleX(0.856);transform-origin:0 0">Bitplane 10</div><div class="a" style="left:1279px;top:669.17px;width:650px;height:1.8px;background:#dbe2e8"></div><div class="a" style="left:1281px;top:659.97px;width:11px;height:8px;background:#ff0000"></div><div class="a t" style="left:1293.30px;top:659.39px;font-size:9.5px;line-height:9.5px;color:#111;transform:scaleX(0.874);transform-origin:0 0">PYRRHOTITE</div><div class="a" style="left:1607px;top:659.97px;width:11.5px;height:8px;background:#b020b0"></div><div class="a t" style="left:1619.80px;top:659.39px;font-size:9.5px;line-height:9.5px;color:#111;transform:scaleX(0.869);transform-origin:0 0">Bitplane 11</div><div class="a" style="left:1279px;top:681.34px;width:650px;height:1.8px;background:#dbe2e8"></div><div class="a" style="left:1281px;top:672.14px;width:11px;height:8px;background:#00ff00"></div><div class="a t" style="left:1293.30px;top:671.56px;font-size:9.5px;line-height:9.5px;color:#111;transform:scaleX(0.852);transform-origin:0 0">Bitplane 3</div><div class="a" style="left:1607px;top:672.14px;width:11.5px;height:8px;background:#000080"></div><div class="a t" style="left:1619.80px;top:671.56px;font-size:9.5px;line-height:9.5px;color:#111;transform:scaleX(0.856);transform-origin:0 0">Bitplane 12</div><div class="a" style="left:1279px;top:693.51px;width:650px;height:1.8px;background:#dbe2e8"></div><div class="a" style="left:1281px;top:684.31px;width:11px;height:8px;background:#ff00ff"></div><div class="a t" style="left:1293.30px;top:683.73px;font-size:9.5px;line-height:9.5px;color:#111;transform:scaleX(0.852);transform-origin:0 0">Bitplane 4</div><div class="a" style="left:1607px;top:684.31px;width:11.5px;height:8px;background:#ff5a20"></div><div class="a t" style="left:1619.80px;top:683.73px;font-size:9.5px;line-height:9.5px;color:#111;transform:scaleX(0.856);transform-origin:0 0">Bitplane 13</div><div class="a" style="left:1279px;top:705.68px;width:650px;height:1.8px;background:#dbe2e8"></div><div class="a" style="left:1279px;top:695.38px;width:325px;height:11px;background:linear-gradient(#c4d6f4,#9cbcec);border:1px solid #88a8e0;border-radius:2px"></div><div class="a" style="left:1281px;top:696.48px;width:11px;height:8px;background:#ffff00"></div><div class="a t" style="left:1293.30px;top:695.90px;font-size:9.5px;line-height:9.5px;color:#111;transform:scaleX(0.860);transform-origin:0 0">ARSENOPYRITE</div><div class="a" style="left:1607px;top:696.48px;width:11.5px;height:8px;background:#2090ff"></div><div class="a t" style="left:1619.80px;top:695.90px;font-size:9.5px;line-height:9.5px;color:#111;transform:scaleX(0.856);transform-origin:0 0">Bitplane 14</div><div class="a" style="left:1279px;top:717.85px;width:650px;height:1.8px;background:#dbe2e8"></div><div class="a" style="left:1281px;top:708.65px;width:11px;height:8px;background:#008080"></div><div class="a t" style="left:1293.30px;top:708.07px;font-size:9.5px;line-height:9.5px;color:#111;transform:scaleX(0.845);transform-origin:0 0">PYRITE</div><div class="a" style="left:1607px;top:708.65px;width:11.5px;height:8px;background:#8080f8"></div><div class="a t" style="left:1619.80px;top:708.07px;font-size:9.5px;line-height:9.5px;color:#111;transform:scaleX(0.856);transform-origin:0 0">Bitplane 15</div><div class="a" style="left:1279px;top:730.02px;width:650px;height:1.8px;background:#dbe2e8"></div><div class="a" style="left:1281px;top:720.82px;width:11px;height:8px;background:#800080"></div><div class="a t" style="left:1293.30px;top:720.24px;font-size:9.5px;line-height:9.5px;color:#111;transform:scaleX(0.867);transform-origin:0 0">ILMENITE</div><div class="a" style="left:1607px;top:720.82px;width:11.5px;height:8px;background:#5a3a08"></div><div class="a t" style="left:1619.80px;top:720.24px;font-size:9.5px;line-height:9.5px;color:#111;transform:scaleX(0.856);transform-origin:0 0">Bitplane 16</div><div class="a" style="left:1279px;top:742.19px;width:650px;height:1.8px;background:#dbe2e8"></div><div class="a" style="left:1279px;top:731.89px;width:325px;height:11px;background:linear-gradient(#c4d6f4,#9cbcec);border:1px solid #88a8e0;border-radius:2px"></div><div class="a" style="left:1281px;top:732.99px;width:11px;height:8px;background:#00ffff"></div><div class="a t" style="left:1293.30px;top:732.41px;font-size:9.5px;line-height:9.5px;color:#111;transform:scaleX(0.872);transform-origin:0 0">GOLD</div><div class="a" style="left:1607px;top:732.99px;width:11.5px;height:8px;background:#808080"></div><div class="a t" style="left:1619.80px;top:732.41px;font-size:9.5px;line-height:9.5px;color:#111;transform:scaleX(0.823);transform-origin:0 0">All ON</div><div class="a" style="left:1281px;top:745.16px;width:11px;height:8px;background:#800000"></div><div class="a t" style="left:1293.30px;top:744.58px;font-size:9.5px;line-height:9.5px;color:#111;transform:scaleX(0.852);transform-origin:0 0">Bitplane 9</div><div class="a" style="left:1607px;top:745.16px;width:11.5px;height:8px;background:#808080"></div><div class="a t" style="left:1619.80px;top:744.58px;font-size:9.5px;line-height:9.5px;color:#111;transform:scaleX(0.801);transform-origin:0 0">All OFF</div><div class="a" style="left:1604.5px;top:646px;width:1px;height:109px;background:#c8d4de"></div><div class="a" style="left:5px;top:754px;width:641px;height:291px;background:#f0f0f0"></div><div class="a" style="left:5px;top:754px;width:641px;height:38px;background:#fff"></div><div class="a" style="left:12px;top:761px;width:9px;height:8px;background:#c8c8c8"></div><div class="a" style="left:14px;top:764px;width:5px;height:2px;background:#333"></div><div class="a t" style="left:25.60px;top:760.92px;font-size:9.5px;line-height:9.5px;color:#9a9a9a;transform:scaleX(0.862);transform-origin:0 0">Results</div><div class="a" style="left:587.5px;top:760.2px;width:9px;height:9px;border:1px solid #c8c8c8"></div><svg class="a" style="left:623.5px;top:759.7px;" width="10" height="10" viewBox="0 0 10 10"><path d="M0.5 0.5L9.5 9.5M9.5 0.5L0.5 9.5" stroke="#8a8a8a" stroke-width="1"/></svg><div class="a t" style="left:10.00px;top:779.62px;font-size:9.5px;line-height:9.5px;color:#666;transform:scaleX(0.908);transform-origin:0 0">File</div><div class="a" style="left:10px;top:789.2px;width:5px;height:0.8px;background:#777"></div><div class="a t" style="left:34.60px;top:779.62px;font-size:9.5px;line-height:9.5px;color:#666;transform:scaleX(0.928);transform-origin:0 0">Edit</div><div class="a" style="left:34.6px;top:789.2px;width:5px;height:0.8px;background:#777"></div><div class="a t" style="left:60.60px;top:779.62px;font-size:9.5px;line-height:9.5px;color:#666;transform:scaleX(0.951);transform-origin:0 0">Chart</div><div class="a" style="left:60.6px;top:789.2px;width:5px;height:0.8px;background:#777"></div><div class="a t" style="left:93.00px;top:779.62px;font-size:9.5px;line-height:9.5px;color:#666;transform:scaleX(0.960);transform-origin:0 0">View</div><div class="a" style="left:93px;top:789.2px;width:5px;height:0.8px;background:#777"></div><div class="a" style="left:8.5px;top:797px;width:1px;height:1px;background:#a09090"></div><div class="a" style="left:8.5px;top:800px;width:1px;height:1px;background:#a09090"></div><div class="a" style="left:8.5px;top:803px;width:1px;height:1px;background:#a09090"></div><div class="a" style="left:8.5px;top:806px;width:1px;height:1px;background:#a09090"></div><div class="a" style="left:8.5px;top:809px;width:1px;height:1px;background:#a09090"></div><div class="a" style="left:8.5px;top:812px;width:1px;height:1px;background:#a09090"></div><div class="a" style="left:8.5px;top:815px;width:1px;height:1px;background:#a09090"></div><div class="a" style="left:8.5px;top:818px;width:1px;height:1px;background:#a09090"></div><div class="a" style="left:14px;top:796.8px;width:24.3px;height:23.7px;background:#cce4f7;border:1px solid #99d1ff"></div><svg class="a" style="left:18px;top:800px;" width="16" height="16" viewBox="0 0 16 16"><rect x="0.5" y="0.5" width="15" height="15" fill="#f4f4f4" stroke="#aaa"/><rect x="2" y="9" width="2" height="6" fill="#2a6ad0"/><rect x="4.5" y="6" width="2" height="9" fill="#28b030"/><rect x="7" y="3" width="2" height="12" fill="#2a6ad0"/><rect x="9.5" y="5" width="2" height="10" fill="#28b030"/><rect x="12" y="8" width="2" height="7" fill="#2a6ad0"/></svg><div class="a t" style="left:47.00px;top:801.27px;font-size:15px;line-height:15px;color:#111;font-family:'Liberation Serif';font-weight:bold;font-style:italic;transform:scaleX(1.467);transform-origin:0 0">x</div><div class="a t" style="left:73.50px;top:801.77px;font-size:15px;line-height:15px;color:#1a2a90;transform:scaleX(1.239);transform-origin:0 0">Σ</div><div class="a" style="left:95.3px;top:799px;width:1px;height:20px;background:#c4c4c4"></div><div class="a" style="left:98.3px;top:796.8px;width:24.5px;height:23.4px;background:#cce4f7;border:1px solid #99d1ff"></div><svg class="a" style="left:102px;top:800.5px;" width="17" height="16" viewBox="0 0 17 16"><rect x="0.5" y="0.5" width="15" height="15" fill="#f8f8f8" stroke="#bbb"/><path d="M1.5 15Q5 5 15 2" stroke="#1a3a90" stroke-width="1.3" fill="none"/></svg><div class="a t" style="left:110.00px;top:809.14px;font-size:8px;line-height:8px;color:#111;font-weight:bold;transform:scaleX(0.982);transform-origin:0 0">%</div><div class="a" style="left:126.5px;top:799px;width:1px;height:20px;background:#c4c4c4"></div><div class="a" style="left:130.2px;top:796.8px;width:24px;height:23.4px;background:#cce4f7;border:1px solid #99d1ff"></div><svg class="a" style="left:134px;top:801px;" width="17" height="15" viewBox="0 0 17 15"><rect x="0.5" y="0.5" width="16" height="14" rx="1.5" fill="#f0f4ff" stroke="#4aa0f0" stroke-width="1.2"/><rect x="0.5" y="0.5" width="16" height="3" fill="#4aa0f0"/><path d="M8.5 3V15" stroke="#4aa0f0" stroke-width="1.2"/><rect x="9.5" y="4" width="6" height="10" fill="#e4dcf8"/></svg><div class="a t" style="left:161.00px;top:802.73px;font-size:13px;line-height:13px;color:#23337a;transform:scaleX(0.913);transform-origin:0 0">.00</div><div class="a" style="left:184.7px;top:799px;width:1px;height:20px;background:#c4c4c4"></div><div class="a" style="left:190.3px;top:800.5px;width:448.3px;height:15px;background:#fff;border:1px solid #a8a8a8"></div><div class="a t" style="left:209.60px;top:803.66px;font-size:9px;line-height:9px;color:#111;transform:scaleX(0.902);transform-origin:0 0">RELM2 Area %</div><svg class="a" style="left:628px;top:805px;" width="8" height="5" viewBox="0 0 8 5"><path d="M0.5 0.5L4 4L7.5 0.5" stroke="#333" fill="none"/></svg><div class="a" style="left:5px;top:827px;width:318px;height:8.5px;background:#b6cae2;border-bottom:1px solid #8a8a8a"></div><div class="a t" style="left:134.00px;top:827.80px;font-size:8.5px;line-height:8.5px;color:#222;font-weight:bold;transform:scaleX(0.899);transform-origin:0 0">RELM3 Count %</div><div class="a" style="left:323px;top:827px;width:4px;height:218px;background:#f0f0f0"></div><div class="a" style="left:325px;top:827px;width:1px;height:218px;background:#909090"></div><div class="a" style="left:327px;top:827px;width:319px;height:8.5px;background:#96b4dc;border-bottom:1px solid #7a8aa0"></div><div class="a t" style="left:459.25px;top:827.80px;font-size:8.5px;line-height:8.5px;color:#222;font-weight:bold;transform:scaleX(0.930);transform-origin:0 0">RELM2 Area %</div><div class="a" style="left:9.3px;top:840.5px;width:309.3px;height:201.5px;background:#fff;border:1px solid #a0a0a0"></div><div class="a" style="left:9.3px;top:840.5px;width:309.3px;height:10px;background:#b6cae2;border:1px solid #8a9ab0"></div><div class="a t" style="left:17.60px;top:841.64px;font-size:8px;line-height:8px;color:#111;font-weight:bold;transform:scaleX(1.101);transform-origin:0 0">Chart</div><div class="a t" style="left:28.50px;top:862.44px;font-size:8px;line-height:8px;color:#222;transform:scaleX(1.011);transform-origin:0 0">30000</div><div class="a t" style="left:28.50px;top:891.64px;font-size:8px;line-height:8px;color:#222;transform:scaleX(1.011);transform-origin:0 0">24000</div><div class="a t" style="left:28.50px;top:920.84px;font-size:8px;line-height:8px;color:#222;transform:scaleX(1.011);transform-origin:0 0">18000</div><div class="a t" style="left:28.50px;top:950.04px;font-size:8px;line-height:8px;color:#222;transform:scaleX(1.011);transform-origin:0 0">12000</div><div class="a t" style="left:33.00px;top:979.24px;font-size:8px;line-height:8px;color:#222;transform:scaleX(1.011);transform-origin:0 0">6000</div><div class="a t" style="left:46.50px;top:1008.44px;font-size:8px;line-height:8px;color:#222;transform:scaleX(1.011);transform-origin:0 0">0</div><svg class="a" style="left:0;top:0" width="1949" height="1045"><path d="M52.5 866.3H275.3M52.5 895.5H275.3M52.5 924.7H275.3M52.5 953.9H275.3M52.5 983.1H275.3M52.5 1012.3H275.3M56.5 866.3V1012.3M275.3 866.3V1012.3M56.5 1003.0V1021.0M100.3 1003.0V1021.0M144.0 1003.0V1021.0M187.8 1003.0V1021.0M231.5 1003.0V1021.0M275.3 1003.0V1021.0" stroke="#1a1a1a" stroke-width="1" fill="none"/><rect x="60.9" y="879.0" width="35.0" height="133.3" fill="#ff0000" stroke="#111" stroke-width="1"/><rect x="104.6" y="966.0" width="35.0" height="46.3" fill="#ffff00" stroke="#111" stroke-width="1"/><rect x="148.4" y="1001.4" width="35.0" height="10.9" fill="#008080" stroke="#111" stroke-width="1"/><rect x="192.2" y="992.0" width="35.0" height="20.3" fill="#800080" stroke="#111" stroke-width="1"/><rect x="235.9" y="1009.5" width="35.0" height="2.8" fill="#008080" stroke="#111" stroke-width="1"/></svg><div class="a t" style="left:58.63px;top:1018.74px;font-size:8px;line-height:8px;color:#222;transform:scaleX(0.966);transform-origin:0 0">PYRRHO...</div><div class="a t" style="left:102.39px;top:1018.74px;font-size:8px;line-height:8px;color:#222;transform:scaleX(0.976);transform-origin:0 0">ARSENO...</div><div class="a t" style="left:153.40px;top:1018.74px;font-size:8px;line-height:8px;color:#222;transform:scaleX(0.865);transform-origin:0 0">PYRITE</div><div class="a t" style="left:192.66px;top:1018.74px;font-size:8px;line-height:8px;color:#222;transform:scaleX(0.921);transform-origin:0 0">ILMENITE</div><div class="a t" style="left:242.92px;top:1018.74px;font-size:8px;line-height:8px;color:#222;transform:scaleX(0.926);transform-origin:0 0">GOLD</div><div class="a t" style="left:134.00px;top:1028.64px;font-size:8px;line-height:8px;color:#222">Source Bitplane(s)</div><div class="a t" style="left:20.0px;top:938.7px;font-size:8px;line-height:8px;color:#222;transform:translate(-50%,-50%) rotate(-90deg) scaleX(0.88)">Field (%)</div><div class="a" style="left:332px;top:840.5px;width:309.4px;height:201.5px;background:#fff;border:1px solid #a0a0a0"></div><div class="a" style="left:332px;top:840.5px;width:309.4px;height:10px;background:#9ab6de;border:1px solid #8a9ab0"></div><div class="a t" style="left:340.30px;top:841.64px;font-size:8px;line-height:8px;color:#111;font-weight:bold;transform:scaleX(1.101);transform-origin:0 0">Chart</div><div class="a t" style="left:351.50px;top:862.44px;font-size:8px;line-height:8px;color:#222;transform:scaleX(1.011);transform-origin:0 0">4</div><div class="a t" style="left:351.50px;top:898.94px;font-size:8px;line-height:8px;color:#222;transform:scaleX(1.011);transform-origin:0 0">3</div><div class="a t" style="left:351.50px;top:935.44px;font-size:8px;line-height:8px;color:#222;transform:scaleX(1.011);transform-origin:0 0">2</div><div class="a t" style="left:351.50px;top:971.94px;font-size:8px;line-height:8px;color:#222;transform:scaleX(1.011);transform-origin:0 0">1</div><div class="a t" style="left:351.50px;top:1008.44px;font-size:8px;line-height:8px;color:#222;transform:scaleX(1.011);transform-origin:0 0">0</div><svg class="a" style="left:0;top:0" width="1949" height="1045"><path d="M357.5 866.3H598.2M357.5 902.8H598.2M357.5 939.3H598.2M357.5 975.8H598.2M357.5 1012.3H598.2M361.5 866.3V1012.3M598.2 866.3V1012.3M361.5 1003.0V1021.0M408.8 1003.0V1021.0M456.2 1003.0V1021.0M503.5 1003.0V1021.0M550.9 1003.0V1021.0M598.2 1003.0V1021.0" stroke="#1a1a1a" stroke-width="1" fill="none"/><rect x="366.2" y="954.8" width="37.9" height="57.5" fill="#ff0000" stroke="#111" stroke-width="1"/><rect x="413.6" y="905.3" width="37.9" height="107.0" fill="#ffff00" stroke="#111" stroke-width="1"/><rect x="460.9" y="1006.4" width="37.9" height="5.9" fill="#008080" stroke="#111" stroke-width="1"/><rect x="508.3" y="1006.4" width="37.9" height="5.9" fill="#800080" stroke="#111" stroke-width="1"/><rect x="555.6" y="886.7" width="37.9" height="125.6" fill="#00ffff" stroke="#111" stroke-width="1"/></svg><div class="a t" style="left:363.67px;top:1018.74px;font-size:8px;line-height:8px;color:#222;transform:scaleX(0.958);transform-origin:0 0">PYRRHOT...</div><div class="a t" style="left:410.51px;top:1018.74px;font-size:8px;line-height:8px;color:#222;transform:scaleX(0.983);transform-origin:0 0">ARSENOP...</div><div class="a t" style="left:467.35px;top:1018.74px;font-size:8px;line-height:8px;color:#222;transform:scaleX(0.865);transform-origin:0 0">PYRITE</div><div class="a t" style="left:510.19px;top:1018.74px;font-size:8px;line-height:8px;color:#222;transform:scaleX(0.921);transform-origin:0 0">ILMENITE</div><div class="a t" style="left:564.03px;top:1018.74px;font-size:8px;line-height:8px;color:#222;transform:scaleX(0.926);transform-origin:0 0">GOLD</div><div class="a t" style="left:447.95px;top:1028.64px;font-size:8px;line-height:8px;color:#222">Source Bitplane(s)</div><div class="a t" style="left:342.6px;top:938.7px;font-size:8px;line-height:8px;color:#222;transform:translate(-50%,-50%) rotate(-90deg) scaleX(0.88)">Field (%)</div><div class="a" style="left:736px;top:602px;width:407px;height:443px;background:#f0f0f0;border:1px solid #2a88d8;border-bottom:none"></div><div class="a" style="left:737px;top:603px;width:405px;height:19px;background:#fff"></div><div class="a" style="left:742px;top:608px;width:9px;height:8px;background:#c8c8c8"></div><div class="a" style="left:744px;top:611px;width:5px;height:2px;background:#333"></div><div class="a t" style="left:754.60px;top:607.72px;font-size:9.5px;line-height:9.5px;color:#111;transform:scaleX(0.949);transform-origin:0 0">Insert Color Threshold</div><svg class="a" style="left:1124.5px;top:607px;" width="10" height="10" viewBox="0 0 10 10"><path d="M0.5 0.5L9.5 9.5M9.5 0.5L0.5 9.5" stroke="#222" stroke-width="1"/></svg><div class="a" style="left:744.8px;top:628.3px;width:393.2px;height:191.5px;border:1px solid #dcdcdc;box-shadow:inset 1px 1px 0 #fff"></div><div class="a" style="left:749px;top:624.3px;width:34px;height:8px;background:#f0f0f0"></div><div class="a t" style="left:751.00px;top:624.52px;font-size:9.5px;line-height:9.5px;color:#222;transform:scaleX(0.848);transform-origin:0 0">Intensity</div><div class="a" style="left:749.5px;top:644px;width:79.2px;height:125px;border:1px solid #e0e0e0;box-shadow:inset 1px 1px 0 #fcfcfc"></div><div class="a" style="left:753.4px;top:646.6px;width:38.8px;height:11.3px;background:#f0f0f0;border-top:1px solid #a0a0a0;border-left:1px solid #a0a0a0;border-bottom:1px solid #fff;border-right:1px solid #fff"></div><div class="a" style="left:794px;top:646.2px;width:25px;height:12.8px;background:#cfcfcf;border:1px solid #353535;box-shadow:inset 1px 1px 0 #f4f4f4,inset -1px -1px 0 #8a8a8a"></div><div class="a t" style="left:797.30px;top:648.46px;font-size:9px;line-height:9px;color:#111;transform:scaleX(0.957);transform-origin:0 0">1</div><div class="a" style="left:803.7px;top:649.1px;width:12.1px;height:7.5px;background:#0000ff"></div><div class="a" style="left:753.4px;top:658.7px;width:38.8px;height:11.3px;background:#f0f0f0;border-top:1px solid #a0a0a0;border-left:1px solid #a0a0a0;border-bottom:1px solid #fff;border-right:1px solid #fff"></div><div class="a" style="left:794px;top:658.3px;width:25px;height:12.8px;background:#cfcfcf;border:1px solid #353535;box-shadow:inset 1px 1px 0 #f4f4f4,inset -1px -1px 0 #8a8a8a"></div><div class="a t" style="left:797.30px;top:660.56px;font-size:9px;line-height:9px;color:#111;transform:scaleX(0.957);transform-origin:0 0">2</div><div class="a" style="left:803.7px;top:661.2px;width:12.1px;height:7.5px;background:#ff0000"></div><div class="a" style="left:753.4px;top:670.8px;width:38.8px;height:11.3px;background:#f0f0f0;border-top:1px solid #a0a0a0;border-left:1px solid #a0a0a0;border-bottom:1px solid #fff;border-right:1px solid #fff"></div><div class="a" style="left:794px;top:670.4px;width:25px;height:12.8px;background:#cfcfcf;border:1px solid #353535;box-shadow:inset 1px 1px 0 #f4f4f4,inset -1px -1px 0 #8a8a8a"></div><div class="a t" style="left:797.30px;top:672.66px;font-size:9px;line-height:9px;color:#111;transform:scaleX(0.957);transform-origin:0 0">3</div><div class="a" style="left:803.7px;top:673.3px;width:12.1px;height:7.5px;background:#00ff00"></div><div class="a" style="left:753.4px;top:682.9px;width:38.8px;height:11.3px;background:#f0f0f0;border-top:1px solid #a0a0a0;border-left:1px solid #a0a0a0;border-bottom:1px solid #fff;border-right:1px solid #fff"></div><div class="a" style="left:794px;top:682.5px;width:25px;height:12.8px;background:#cfcfcf;border:1px solid #353535;box-shadow:inset 1px 1px 0 #f4f4f4,inset -1px -1px 0 #8a8a8a"></div><div class="a t" style="left:797.30px;top:684.76px;font-size:9px;line-height:9px;color:#111;transform:scaleX(0.957);transform-origin:0 0">4</div><div class="a" style="left:803.7px;top:685.4px;width:12.1px;height:7.5px;background:#ff00ff"></div><div class="a" style="left:753.4px;top:695px;width:38.8px;height:11.3px;background:#f0f0f0;border-top:1px solid #a0a0a0;border-left:1px solid #a0a0a0;border-bottom:1px solid #fff;border-right:1px solid #fff"></div><div class="a" style="left:794px;top:694.6px;width:25px;height:12.8px;background:#cfcfcf;border:1px solid #353535;box-shadow:inset 1px 1px 0 #f4f4f4,inset -1px -1px 0 #8a8a8a"></div><div class="a t" style="left:797.30px;top:696.86px;font-size:9px;line-height:9px;color:#111;transform:scaleX(0.957);transform-origin:0 0">5</div><div class="a" style="left:803.7px;top:697.5px;width:12.1px;height:7.5px;background:#ffff00"></div><div class="a" style="left:753.4px;top:707.1px;width:38.8px;height:11.3px;background:#f0f0f0;border-top:1px solid #a0a0a0;border-left:1px solid #a0a0a0;border-bottom:1px solid #fff;border-right:1px solid #fff"></div><div class="a" style="left:794px;top:706.7px;width:25px;height:12.8px;background:#cfcfcf;border:1px solid #353535;box-shadow:inset 1px 1px 0 #f4f4f4,inset -1px -1px 0 #8a8a8a"></div><div class="a t" style="left:797.30px;top:708.96px;font-size:9px;line-height:9px;color:#111;transform:scaleX(0.957);transform-origin:0 0">6</div><div class="a" style="left:803.7px;top:709.6px;width:12.1px;height:7.5px;background:#008080"></div><div class="a" style="left:753.4px;top:719.2px;width:38.8px;height:11.3px;background:#f0f0f0;border-top:1px solid #a0a0a0;border-left:1px solid #a0a0a0;border-bottom:1px solid #fff;border-right:1px solid #fff"></div><div class="a" style="left:794px;top:718.8px;width:25px;height:12.8px;background:#cfcfcf;border:1px solid #353535;box-shadow:inset 1px 1px 0 #f4f4f4,inset -1px -1px 0 #8a8a8a"></div><div class="a t" style="left:797.30px;top:721.06px;font-size:9px;line-height:9px;color:#111;transform:scaleX(0.957);transform-origin:0 0">7</div><div class="a" style="left:803.7px;top:721.7px;width:12.1px;height:7.5px;background:#800080"></div><div class="a" style="left:753.4px;top:731.3px;width:38.8px;height:11.3px;background:#f0f0f0;border-top:1px solid #a0a0a0;border-left:1px solid #a0a0a0;border-bottom:1px solid #fff;border-right:1px solid #fff"></div><div class="a" style="left:794px;top:730.9px;width:25px;height:13.2px;background:#d8d8d8;border:1.5px solid #202020;box-shadow:inset 1px 1px 0 #fff"></div><div class="a t" style="left:797.30px;top:733.16px;font-size:9px;line-height:9px;color:#111;font-weight:bold;transform:scaleX(0.957);transform-origin:0 0">8</div><div class="a" style="left:803.7px;top:733.8px;width:12.1px;height:7.5px;background:#00ffff;border:0.5px solid #555"></div><div class="a t" style="left:758.00px;top:733.92px;font-size:9.5px;line-height:9.5px;color:#222;transform:scaleX(0.860);transform-origin:0 0">000-255</div><div class="a" style="left:834.4px;top:643.3px;width:209.2px;height:125.9px;background:#fff;border-top:1.5px solid #8a8a8a;border-left:1.5px solid #8a8a8a"></div><svg class="a" style="left:0;top:0" width="1949" height="1045"><path d="M839.5 753.5L840 752L846 751L851 750.5L853 745L855 725L856.3 690L857.5 665.8L858.8 690L860.5 725L862.5 745L864.5 752L866 753.5ZM901.6 753.5L902.2 743.4L902.8 753.5ZM933 753.5L933.5 751L934 753.5ZM965.5 753.5L966 750L966.5 753.5ZM975 753.5L977 751.3L986 751.3L989 753.5Z" fill="#00ffff"/><path d="M839.7 755.3H1035.5" stroke="#333" stroke-width="1"/><path d="M839.7 755.3V759" stroke="#333" stroke-width="1"/><path d="M888.7 755.3V759" stroke="#333" stroke-width="1"/><path d="M937.6 755.3V759" stroke="#333" stroke-width="1"/><path d="M986.4 755.3V759" stroke="#333" stroke-width="1"/><path d="M1035.4 755.3V759" stroke="#333" stroke-width="1"/><rect x="839.6" y="765.4" width="195.8" height="3" fill="#00ffff"/></svg><div class="a t" style="left:838.10px;top:759.11px;font-size:6px;line-height:6px;color:#333;transform:scaleX(0.957);transform-origin:0 0">0</div><div class="a t" style="left:885.50px;top:759.11px;font-size:6px;line-height:6px;color:#333;transform:scaleX(0.957);transform-origin:0 0">64</div><div class="a t" style="left:932.80px;top:759.11px;font-size:6px;line-height:6px;color:#333;transform:scaleX(0.959);transform-origin:0 0">128</div><div class="a t" style="left:981.60px;top:759.11px;font-size:6px;line-height:6px;color:#333;transform:scaleX(0.959);transform-origin:0 0">192</div><div class="a t" style="left:1030.60px;top:759.11px;font-size:6px;line-height:6px;color:#333;transform:scaleX(0.959);transform-origin:0 0">255</div><div class="a" style="left:834.4px;top:770.7px;width:209.2px;height:21.7px;background:#f0f0f0;border-top:1.5px solid #8a8a8a;border-left:1.5px solid #8a8a8a;border-bottom:1px solid #fff"></div><svg class="a" style="left:835.7px;top:773px;" width="7" height="19" viewBox="0 0 7 19"><path d="M0.5 4L5 0.5L6.5 2V18H0.5Z" fill="#e8e8e8" stroke="#555" stroke-width="1"/></svg><svg class="a" style="left:1035.5px;top:773px;" width="7" height="19" viewBox="0 0 7 19"><path d="M6.5 4L2 0.5L0.5 2V18H6.5Z" fill="#e8e8e8" stroke="#555" stroke-width="1"/></svg><svg class="a" style="left:1046.5px;top:647px;" width="7" height="5" viewBox="0 0 7 5"><path d="M0.5 4.5L3.5 1L6.5 4.5" stroke="#333" fill="none" stroke-width="1.2"/></svg><div class="a" style="left:1046px;top:745px;width:7.5px;height:12px;background:#cdcdcd"></div><svg class="a" style="left:1046.5px;top:761.5px;" width="7" height="5" viewBox="0 0 7 5"><path d="M0.5 0.5L3.5 4L6.5 0.5" stroke="#333" fill="none" stroke-width="1.2"/></svg><div class="a" style="left:833.4px;top:800px;width:13.3px;height:12.6px;background:#0a0806"></div><div class="a" style="left:846.4px;top:800px;width:13.3px;height:12.6px;background:#1a1410"></div><div class="a" style="left:859.4px;top:800px;width:13.3px;height:12.6px;background:#3a2a12"></div><div class="a" style="left:872.4px;top:800px;width:13.3px;height:12.6px;background:#52401a"></div><div class="a" style="left:885.4px;top:800px;width:13.3px;height:12.6px;background:#6e4a1c"></div><div class="a" style="left:898.4px;top:800px;width:13.3px;height:12.6px;background:#8a5a1a"></div><div class="a" style="left:911.4px;top:800px;width:13.3px;height:12.6px;background:#a8701e"></div><div class="a" style="left:924.4px;top:800px;width:13.3px;height:12.6px;background:#c2842a"></div><div class="a" style="left:937.4px;top:800px;width:13.3px;height:12.6px;background:#d49a3c"></div><div class="a" style="left:950.4px;top:800px;width:13.3px;height:12.6px;background:#dcaa4c"></div><div class="a" style="left:963.4px;top:800px;width:13.3px;height:12.6px;background:#f0b840"></div><div class="a" style="left:976.4px;top:800px;width:13.3px;height:12.6px;background:#f8c060"></div><div class="a" style="left:989.4px;top:800px;width:13.3px;height:12.6px;background:#f8d090"></div><div class="a" style="left:1002.4px;top:800px;width:13.3px;height:12.6px;background:#f8dcb0"></div><div class="a" style="left:1015.4px;top:800px;width:13.3px;height:12.6px;background:#fcec70"></div><div class="a" style="left:1028.4px;top:800px;width:13.3px;height:12.6px;background:#fcfcfc"></div><div class="a" style="left:748.6px;top:774.5px;width:10px;height:10px;background:#fff;border:1px solid #333"></div><div class="a t" style="left:761.00px;top:775.02px;font-size:9.5px;line-height:9.5px;color:#222;transform:scaleX(0.854);transform-origin:0 0">Pause</div><div class="a" style="left:1063.9px;top:638.8px;width:61.8px;height:15.1px;background:#e1e1e1;border:1px solid #0078d7;box-shadow:inset 0 0 0 1px #0078d7"></div><div class="a t" style="left:1089.30px;top:641.82px;font-size:9.5px;line-height:9.5px;color:#111;transform:scaleX(0.801);transform-origin:0 0">OK</div><div class="a" style="left:1063.9px;top:660.2px;width:61.8px;height:15.1px;background:#e1e1e1;border:1px solid #adadad"></div><div class="a t" style="left:1082.30px;top:663.22px;font-size:9.5px;line-height:9.5px;color:#111;transform:scaleX(0.845);transform-origin:0 0">Cancel</div><div class="a" style="left:1062.5px;top:748px;width:63.5px;height:37.5px;border:1px solid #dcdcdc;box-shadow:inset 1px 1px 0 #fff"></div><div class="a" style="left:1066.5px;top:744px;width:31.5px;height:8px;background:#f0f0f0"></div><div class="a t" style="left:1068.50px;top:744.22px;font-size:9.5px;line-height:9.5px;color:#222;transform:scaleX(0.882);transform-origin:0 0">Scaling</div><svg class="a" style="left:1069px;top:759px;" width="10" height="10" viewBox="0 0 10 10"><circle cx="5" cy="5" r="4.3" fill="#fff" stroke="#333"/><circle cx="5" cy="5" r="2.3" fill="#111"/></svg><div class="a t" style="left:1080.50px;top:759.42px;font-size:9.5px;line-height:9.5px;color:#222;transform:scaleX(0.908);transform-origin:0 0">Linear</div><svg class="a" style="left:1069px;top:773px;" width="10" height="10" viewBox="0 0 10 10"><circle cx="5" cy="5" r="4.3" fill="#fff" stroke="#333"/></svg><div class="a t" style="left:1080.50px;top:773.62px;font-size:9.5px;line-height:9.5px;color:#222;transform:scaleX(0.865);transform-origin:0 0">Square</div><div class="a" style="left:744.5px;top:832.6px;width:393.5px;height:183.8px;border:1px solid #dcdcdc;box-shadow:inset 1px 1px 0 #fff"></div><div class="a" style="left:749px;top:828.6px;width:23.5px;height:8px;background:#f0f0f0"></div><div class="a t" style="left:751.00px;top:828.82px;font-size:9.5px;line-height:9.5px;color:#222;transform:scaleX(0.859);transform-origin:0 0">Color</div><div class="a" style="left:749px;top:851px;width:65px;height:141px;border:1px solid #dcdcdc;box-shadow:inset 1px 1px 0 #fff"></div><div class="a" style="left:753.6px;top:847px;width:19px;height:8px;background:#f0f0f0"></div><div class="a t" style="left:755.60px;top:847.22px;font-size:9.5px;line-height:9.5px;color:#222;transform:scaleX(0.860);transform-origin:0 0">Hue</div><div class="a t" style="left:772.75px;top:860.72px;font-size:9.5px;line-height:9.5px;color:#222;transform:scaleX(0.872);transform-origin:0 0">Start</div><div class="a" style="left:765px;top:874.4px;width:33px;height:12.6px;background:#f0f0f0;border-top:1px solid #a0a0a0;border-left:1px solid #a0a0a0;border-bottom:1px solid #fff;border-right:1px solid #fff"></div><div class="a t" style="left:777.25px;top:876.42px;font-size:9.5px;line-height:9.5px;color:#222;transform:scaleX(0.851);transform-origin:0 0">006</div><div class="a" style="left:800px;top:873.5px;width:10.5px;height:7.25px;background:#f0f0f0;border:1px solid #c8c8c8"></div><div class="a" style="left:800px;top:880.75px;width:10.5px;height:7.25px;background:#f0f0f0;border:1px solid #c8c8c8"></div><svg class="a" style="left:803px;top:875.62px;" width="5" height="3" viewBox="0 0 5 3"><path d="M0 3L2.5 0L5 3Z" fill="#222"/></svg><svg class="a" style="left:803px;top:882.88px;" width="5" height="3" viewBox="0 0 5 3"><path d="M0 0L2.5 3L5 0Z" fill="#222"/></svg><div class="a" style="left:765px;top:889px;width:34px;height:11.5px;background:#ff4a25"></div><div class="a t" style="left:772.50px;top:910.42px;font-size:9.5px;line-height:9.5px;color:#222;transform:scaleX(0.901);transform-origin:0 0">Delta</div><div class="a" style="left:765px;top:922.3px;width:33px;height:13.1px;background:#f0f0f0;border-top:1px solid #a0a0a0;border-left:1px solid #a0a0a0;border-bottom:1px solid #fff;border-right:1px solid #fff"></div><div class="a t" style="left:777.25px;top:924.92px;font-size:9.5px;line-height:9.5px;color:#222;transform:scaleX(0.851);transform-origin:0 0">063</div><div class="a t" style="left:775.00px;top:947.82px;font-size:9.5px;line-height:9.5px;color:#222;transform:scaleX(0.887);transform-origin:0 0">End</div><div class="a" style="left:765px;top:959.5px;width:33px;height:13.5px;background:#f0f0f0;border-top:1px solid #a0a0a0;border-left:1px solid #a0a0a0;border-bottom:1px solid #fff;border-right:1px solid #fff"></div><div class="a t" style="left:777.25px;top:962.42px;font-size:9.5px;line-height:9.5px;color:#222;transform:scaleX(0.851);transform-origin:0 0">069</div><div class="a" style="left:800px;top:958.5px;width:10.5px;height:7.5px;background:#f0f0f0;border:1px solid #c8c8c8"></div><div class="a" style="left:800px;top:966px;width:10.5px;height:7.5px;background:#f0f0f0;border:1px solid #c8c8c8"></div><svg class="a" style="left:803px;top:960.75px;" width="5" height="3" viewBox="0 0 5 3"><path d="M0 3L2.5 0L5 3Z" fill="#222"/></svg><svg class="a" style="left:803px;top:968.25px;" width="5" height="3" viewBox="0 0 5 3"><path d="M0 0L2.5 3L5 0Z" fill="#222"/></svg><div class="a" style="left:765px;top:975px;width:34px;height:12.5px;background:#a8d000"></div><div class="a" style="left:1067px;top:851px;width:65px;height:141px;border:1px solid #dcdcdc;box-shadow:inset 1px 1px 0 #fff"></div><div class="a" style="left:1071.6px;top:847px;width:41px;height:8px;background:#f0f0f0"></div><div class="a t" style="left:1073.60px;top:847.22px;font-size:9.5px;line-height:9.5px;color:#222;transform:scaleX(0.854);transform-origin:0 0">Saturation</div><div class="a t" style="left:1087.25px;top:873.12px;font-size:9.5px;line-height:9.5px;color:#222;transform:scaleX(0.889);transform-origin:0 0">Low</div><div class="a" style="left:1076px;top:886.4px;width:39px;height:16.6px;background:#f0f0f0;border-top:1px solid #a0a0a0;border-left:1px solid #a0a0a0;border-bottom:1px solid #fff;border-right:1px solid #fff"></div><div class="a t" style="left:1087.25px;top:890.42px;font-size:9.5px;line-height:9.5px;color:#222;transform:scaleX(0.851);transform-origin:0 0">056</div><div class="a" style="left:1064px;top:887px;width:10.5px;height:7.75px;background:#f0f0f0;border:1px solid #c8c8c8"></div><div class="a" style="left:1064px;top:894.75px;width:10.5px;height:7.75px;background:#f0f0f0;border:1px solid #c8c8c8"></div><svg class="a" style="left:1067px;top:889.38px;" width="5" height="3" viewBox="0 0 5 3"><path d="M0 3L2.5 0L5 3Z" fill="#222"/></svg><svg class="a" style="left:1067px;top:897.12px;" width="5" height="3" viewBox="0 0 5 3"><path d="M0 0L2.5 3L5 0Z" fill="#222"/></svg><div class="a t" style="left:1086.50px;top:938.82px;font-size:9.5px;line-height:9.5px;color:#222;transform:scaleX(0.870);transform-origin:0 0">High</div><div class="a" style="left:1076px;top:952px;width:39px;height:16px;background:#f0f0f0;border-top:1px solid #a0a0a0;border-left:1px solid #a0a0a0;border-bottom:1px solid #fff;border-right:1px solid #fff"></div><div class="a t" style="left:1088.75px;top:955.92px;font-size:9.5px;line-height:9.5px;color:#222;transform:scaleX(0.851);transform-origin:0 0">100</div><div class="a" style="left:1064px;top:952.5px;width:10.5px;height:7.75px;background:#f0f0f0;border:1px solid #c8c8c8"></div><div class="a" style="left:1064px;top:960.25px;width:10.5px;height:7.75px;background:#f0f0f0;border:1px solid #c8c8c8"></div><svg class="a" style="left:1067px;top:954.88px;" width="5" height="3" viewBox="0 0 5 3"><path d="M0 3L2.5 0L5 3Z" fill="#222"/></svg><svg class="a" style="left:1067px;top:962.62px;" width="5" height="3" viewBox="0 0 5 3"><path d="M0 0L2.5 3L5 0Z" fill="#222"/></svg><div class="a t" style="left:746.00px;top:1018.22px;font-size:9.5px;line-height:9.5px;color:#222;transform:scaleX(0.856);transform-origin:0 0">Message</div><div class="a" style="left:745.7px;top:1030px;width:327.3px;height:16px;background:#fff;border:1px solid #b0b0b0"></div><div class="a" style="left:848.2px;top:838.1px;width:183.4px;height:176.1px;background:#c0c0c0;border:1px solid #a0a0a0"></div><svg class="a" style="left:0;top:0" width="1949" height="1045"><circle cx="939.6" cy="925.7" r="85.3" fill="#fff" stroke="#222" stroke-width="0.9"/><circle cx="939.6" cy="925.7" r="70.3" fill="none" stroke="#8a8a8a" stroke-width="3.8"/><circle cx="904.9" cy="860.4" r="5" fill="#8a8a8a"/><circle cx="897.7" cy="865.9" r="4" fill="#8a8a8a"/><circle cx="870.6" cy="925.7" r="4.5" fill="#8a8a8a"/><circle cx="893.3" cy="870.5" r="3" fill="#8a8a8a"/><circle cx="920.7" cy="855.2" r="3" fill="#8a8a8a"/><circle cx="1011.6" cy="925.7" r="3.5" fill="#8a8a8a"/><circle cx="915.3" cy="992.4" r="2.5" fill="#8a8a8a"/><circle cx="945.9" cy="997.4" r="2.8" fill="#8a8a8a"/><circle cx="975.4" cy="987.6" r="2.5" fill="#8a8a8a"/><path d="M1009.6 925.7L1024.9 925.7" stroke="#222" stroke-width="0.9"/><path d="M974.6 865.1L982.2 851.8" stroke="#222" stroke-width="0.9"/><path d="M904.6 865.1L897.0 851.8" stroke="#222" stroke-width="0.9"/><path d="M869.6 925.7L854.3 925.7" stroke="#222" stroke-width="0.9"/><path d="M904.6 986.3L897.0 999.6" stroke="#222" stroke-width="0.9"/><path d="M974.6 986.3L982.2 999.6" stroke="#222" stroke-width="0.9"/><path d="M1000.7 914.9A62 62 0 0 0 960.8 867.4" stroke="#00ffff" stroke-width="2.2" fill="none"/><path d="M1005.9 916.4A67 67 0 0 0 964.7 863.6" stroke="#00ffff" stroke-width="2.5" fill="none"/><path d="M1010.1 906.8A73 73 0 0 0 973.9 861.2" stroke="#00ffff" stroke-width="5" fill="none"/><path d="M1006.3 887.2A77 77 0 0 0 978.1 859.0" stroke="#00ffff" stroke-width="3.5" fill="none"/></svg><div class="a" style="left:882.9px;top:869.0px;width:113.4px;height:113.4px;border-radius:50%;background:radial-gradient(circle, #fff 0, #fff 10.5px, #8a8a8a 11px, #8a8a8a 19.3px, rgba(138,138,138,0.55) 19.8px, rgba(138,138,138,0.15) 65%, rgba(138,138,138,0) 100%), conic-gradient(from 90deg, #ff3030 0%, #f02080 8%, #d020e0 16.7%, #5028f0 25%, #2050f0 33.3%, #10a0e0 42%, #10c0a0 50%, #30e060 58%, #50f030 66.7%, #90d020 75%, #e0b020 83.3%, #ff6020 92%, #ff3030 100%)"></div><svg class="a" style="left:0;top:0" width="1949" height="1045"><path d="M959.2 874.5L952.5 892.1A36 36 0 0 1 975.4 921.9L994.1 920.0A54.8 54.8 0 0 0 959.2 874.5" stroke="#111" stroke-width="1.3" fill="rgba(0,0,0,0.12)"/><circle cx="959.2" cy="874.5" r="2.8" fill="#111"/><circle cx="952.5" cy="892.1" r="2.8" fill="#111"/><circle cx="975.4" cy="921.9" r="2.8" fill="#111"/><circle cx="994.1" cy="920.0" r="2.8" fill="#111"/></svg><div class="a t" style="left:884.25px;top:841.59px;font-size:7.5px;line-height:7.5px;color:#222;transform:scaleX(1.031);transform-origin:0 0">120</div><div class="a t" style="left:977.20px;top:841.59px;font-size:7.5px;line-height:7.5px;color:#222;transform:scaleX(1.031);transform-origin:0 0">60</div><div class="a t" style="left:1024.85px;top:922.99px;font-size:7.5px;line-height:7.5px;color:#222;transform:scaleX(1.031);transform-origin:0 0">0</div><div class="a t" style="left:884.25px;top:1002.88px;font-size:7.5px;line-height:7.5px;color:#222;transform:scaleX(1.031);transform-origin:0 0">240</div><div class="a t" style="left:977.55px;top:1002.88px;font-size:7.5px;line-height:7.5px;color:#222;transform:scaleX(1.031);transform-origin:0 0">300</div><div class="a" style="left:1377px;top:782px;width:440px;height:240px;background:#f0f0f0"></div><div class="a" style="left:1377px;top:782px;width:440px;height:23.5px;background:#fff"></div><div class="a" style="left:1385px;top:789px;width:9px;height:8px;background:#c8c8c8"></div><div class="a" style="left:1387px;top:792px;width:5px;height:2px;background:#333"></div><div class="a t" style="left:1398.00px;top:788.92px;font-size:9.5px;line-height:9.5px;color:#9a9a9a;transform:scaleX(0.950);transform-origin:0 0">Toolbox - Gray/Binary Transformations</div><svg class="a" style="left:1799.5px;top:788.5px;" width="10" height="10" viewBox="0 0 10 10"><path d="M0.5 0.5L9.5 9.5M9.5 0.5L0.5 9.5" stroke="#999" stroke-width="1"/></svg><div class="a" style="left:1384.4px;top:815.5px;width:33.9px;height:200.5px;background:#fff;border:1px solid #828282"></div><div class="a" style="left:1406px;top:816.5px;width:11.3px;height:198.5px;background:#f0f0f0"></div><div class="a" style="left:1406.6px;top:828px;width:10.7px;height:122px;background:#cdcdcd"></div><svg class="a" style="left:1408.5px;top:820px;" width="7" height="5" viewBox="0 0 7 5"><path d="M0.5 4.5L3.5 1L6.5 4.5" stroke="#333" fill="none" stroke-width="1.1"/></svg><svg class="a" style="left:1408.5px;top:1002px;" width="7" height="5" viewBox="0 0 7 5"><path d="M0.5 0.5L3.5 4L6.5 0.5" stroke="#333" fill="none" stroke-width="1.1"/></svg><svg class="a" style="left:0;top:0" width="1949" height="1045"><g transform="translate(1386,820)"><rect x="2" y="5" width="15" height="9" rx="2" fill="#9aa0b0"/><rect x="5" y="3" width="6" height="3" fill="#b0b8c8"/><circle cx="13" cy="10" r="3.2" fill="#445" stroke="#ccd"/></g><g transform="translate(1386,844)"><rect x="1.5" y="1.5" width="11" height="8" fill="none" stroke="#2a7ae0" stroke-width="1.3"/><rect x="6.5" y="6.5" width="11" height="8" fill="none" stroke="#e83a8a" stroke-width="1.3"/></g><g transform="translate(1386,867)"><circle cx="7" cy="12" r="5.5" fill="#777"/><circle cx="12" cy="7" r="5.5" fill="#aaa"/><circle cx="7" cy="7" r="4" fill="#999"/></g><g transform="translate(1386,892)"><circle cx="6" cy="8" r="5" fill="#f07040"/><circle cx="12" cy="6" r="5" fill="#60c060"/><circle cx="9" cy="12" r="5" fill="#50a0e0"/></g><rect x="1385.5" y="913" width="20" height="24" fill="#bcd4f0"/><g transform="translate(1386,916)"><path d="M4 12Q2 4 10 3" stroke="#e84020" stroke-width="2.5" fill="none"/><path d="M8 0L12 3L8 6Z" fill="#e84020"/><path d="M16 8Q17 15 9 16" stroke="#40b040" stroke-width="2.5" fill="none"/><path d="M11 13L7 16L11 19Z" fill="#40b040"/></g><g transform="translate(1386,940)"><rect x="1.5" y="1.5" width="16" height="16" fill="#fff" stroke="#3a80e0" stroke-width="1.3"/><circle cx="6" cy="6" r="3.2" fill="#2a6ad8"/><circle cx="13" cy="9" r="3.2" fill="#2a6ad8"/><circle cx="7" cy="13.5" r="3.2" fill="#2a6ad8"/></g><g transform="translate(1386,965)"><circle cx="5" cy="4" r="3" fill="#e01010"/><path d="M5 7V10" stroke="#333"/><rect x="1" y="10" width="16" height="4" fill="#f0e000" stroke="#333" stroke-width="0.8"/></g><g transform="translate(1386,988)"><circle cx="5" cy="3.5" r="3" fill="#e01010"/><rect x="1" y="7" width="16" height="4" fill="#f0e000" stroke="#333" stroke-width="0.8"/><path d="M6 11L11 15" stroke="#333"/><circle cx="14" cy="15" r="3" fill="#20c030"/></g></svg><div class="a" style="left:1418.3px;top:815.5px;width:105.3px;height:200.5px;background:#fff;border:1px solid #828282"></div><div class="a" style="left:1510.5px;top:816.5px;width:12.1px;height:198.5px;background:#f8f8f8"></div><svg class="a" style="left:1513.5px;top:820px;" width="7" height="5" viewBox="0 0 7 5"><path d="M0.5 4.5L3.5 1L6.5 4.5" stroke="#bbb" fill="none" stroke-width="1.1"/></svg><svg class="a" style="left:1513.5px;top:1006px;" width="7" height="5" viewBox="0 0 7 5"><path d="M0.5 0.5L3.5 4L6.5 0.5" stroke="#bbb" fill="none" stroke-width="1.1"/></svg><div class="a t" style="left:1421.00px;top:816.32px;font-size:9.5px;line-height:9.5px;color:#111;transform:scaleX(0.847);transform-origin:0 0">Gray Threshold...</div><div class="a t" style="left:1421.00px;top:826.29px;font-size:9.5px;line-height:9.5px;color:#111;transform:scaleX(0.849);transform-origin:0 0">Auto Gray Threshold...</div><div class="a t" style="left:1421.00px;top:836.26px;font-size:9.5px;line-height:9.5px;color:#111;transform:scaleX(0.848);transform-origin:0 0">Relative Gray Threshold.</div><div class="a" style="left:1419.6px;top:845.8px;width:90.7px;height:9.2px;background:#0a64d8"></div><div class="a t" style="left:1421.00px;top:846.23px;font-size:9.5px;line-height:9.5px;color:#fff;transform:scaleX(0.849);transform-origin:0 0">Color Threshold...</div><div class="a t" style="left:1421.00px;top:856.20px;font-size:9.5px;line-height:9.5px;color:#111;transform:scaleX(0.852);transform-origin:0 0">Contrast Thresholding</div><div class="a t" style="left:1421.00px;top:866.17px;font-size:9.5px;line-height:9.5px;color:#111;transform:scaleX(0.877);transform-origin:0 0">Watershed</div><div class="a t" style="left:1421.00px;top:876.14px;font-size:9.5px;line-height:9.5px;color:#111;transform:scaleX(0.865);transform-origin:0 0">Inner Distance</div><div class="a t" style="left:1421.00px;top:886.11px;font-size:9.5px;line-height:9.5px;color:#111;transform:scaleX(0.852);transform-origin:0 0">Outer Distance</div><div class="a t" style="left:1421.00px;top:896.08px;font-size:9.5px;line-height:9.5px;color:#111;transform:scaleX(0.869);transform-origin:0 0">Vertical Distance</div><div class="a t" style="left:1421.00px;top:906.05px;font-size:9.5px;line-height:9.5px;color:#111;transform:scaleX(0.869);transform-origin:0 0">Set Intensity Level</div><div class="a" style="left:1573px;top:993.4px;width:62.6px;height:15.4px;background:#e1e1e1;border:1px solid #adadad"></div><div class="a t" style="left:1591.55px;top:996.62px;font-size:9.5px;line-height:9.5px;color:#111;transform:scaleX(0.805);transform-origin:0 0">Insert...</div><div class="a" style="left:1639.5px;top:993.4px;width:62.2px;height:15.4px;background:#d8d8d8;border:1px solid #c4c4c4"></div><div class="a t" style="left:1655.60px;top:996.62px;font-size:9.5px;line-height:9.5px;color:#9a9a9a;transform:scaleX(0.852);transform-origin:0 0">Modify...</div><div class="a" style="left:1706px;top:993.4px;width:62.5px;height:15.4px;background:#d8d8d8;border:1px solid #c4c4c4"></div><div class="a t" style="left:1728.45px;top:996.62px;font-size:9.5px;line-height:9.5px;color:#9a9a9a;transform:scaleX(0.770);transform-origin:0 0">Undo</div><svg class="a" style="left:1785px;top:994px;" width="17" height="17" viewBox="0 0 17 17"><circle cx="8.5" cy="8.5" r="8" fill="#3a86e0" stroke="#8a9ab0" stroke-width="1"/><circle cx="8.5" cy="8.5" r="6" fill="#4a9af0"/><path d="M6 6.5Q6 4 8.5 4Q11 4 11 6.5Q11 8 8.5 9V10.5" stroke="#fff" stroke-width="1.6" fill="none"/><circle cx="8.5" cy="13" r="1" fill="#fff"/></svg></body></html>
